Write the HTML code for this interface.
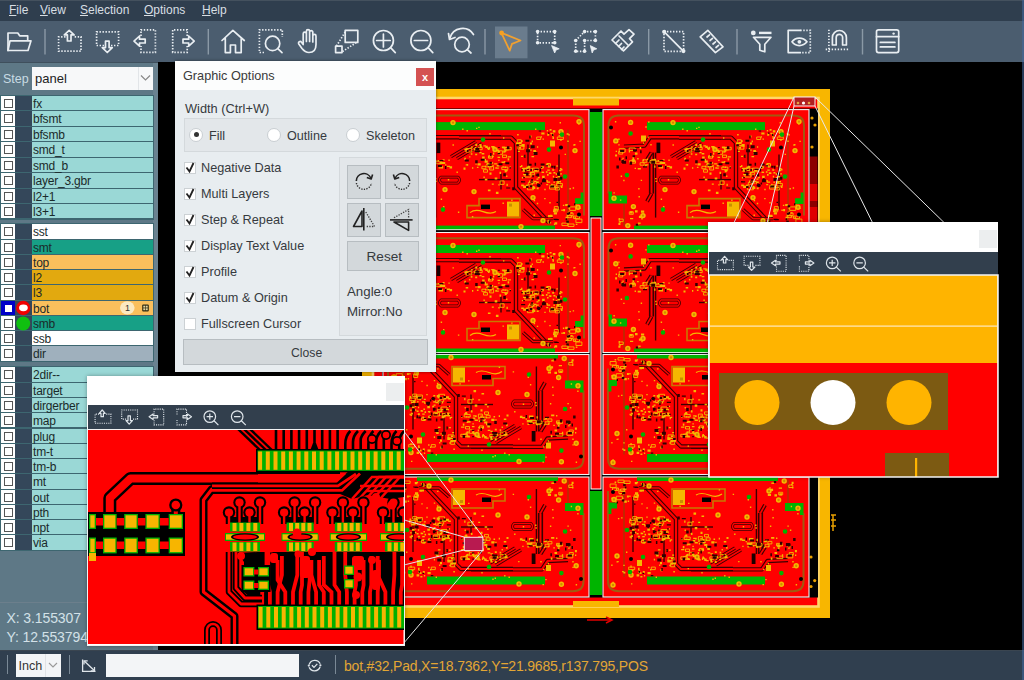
<!DOCTYPE html><html><head><meta charset="utf-8"><style>
*{margin:0;padding:0;box-sizing:border-box}
html,body{width:1024px;height:680px;overflow:hidden;background:#000}
body{position:relative;font-family:"Liberation Sans",sans-serif;}
.a{position:absolute}
#menu{left:0;top:0;width:1024px;height:20.5px;background:#2f3e4e;border-top:1px solid #44515e;color:#d8dee3;font-size:12px}
#menu span{position:absolute;top:2px}
#menu u{text-decoration:underline;text-underline-offset:1px}
#tool{left:0;top:21px;width:1024px;height:41px;background:#4b5d6f}
#left{left:0;top:62px;width:158px;height:588px;background:#5e7886;border-top:1px solid #3f4f5c}
#status{left:0;top:650px;width:1024px;height:30px;background:#303f4f;border-top:1.5px solid #3a4550}
.row{position:absolute;left:0;width:154px;height:15px}
.cb{position:absolute;left:1px;top:0;width:14px;height:15px;background:#fff}
.cb i{position:absolute;left:3px;top:3px;width:9px;height:9px;border:1px solid #555}
.dk{position:absolute;left:15px;top:0;width:17px;height:15px;background:#34475a}
.nm{position:absolute;left:32px;top:0;width:121px;height:15px;font-size:12px;line-height:17.5px;color:#1a2a2a;padding-left:1px;letter-spacing:-0.2px}
svg{position:absolute;left:0;top:0;overflow:visible}
</style></head><body>
<div id="menu" class="a"><span style="left:9px"><u>F</u>ile</span><span style="left:40px"><u>V</u>iew</span><span style="left:80px"><u>S</u>election</span><span style="left:144px"><u>O</u>ptions</span><span style="left:202px"><u>H</u>elp</span></div><div id="tool" class="a"></div><div id="left" class="a"></div><div class="a" style="left:153px;top:63px;width:5px;height:587px;background:#6a8290"></div><div id="status" class="a"></div><svg width="1024" height="680" style="clip-path:inset(62px 2px 30px 158px)"><rect x="362" y="89" width="468" height="529" fill="#f8b600"/><rect x="373" y="98" width="445.5" height="508.5" fill="#ff0000" stroke="#ffd868" stroke-width="2.6"/><rect x="382" y="108.5" width="436" height="489" fill="#000"/><rect x="573" y="98.5" width="46" height="7" fill="#f8b600"/><rect x="573" y="601" width="46" height="6" fill="#f8b600"/><rect x="809.5" y="156.5" width="8" height="27.5" fill="#8c0000"/><rect x="809.5" y="184" width="8" height="17" fill="#e00000"/><rect x="809.5" y="201" width="8" height="6" fill="#8c0000"/><rect x="809.5" y="207" width="8" height="17" fill="#e00000"/><circle cx="812" cy="118" r="1.6" fill="#e8a000"/><circle cx="815" cy="125" r="1.6" fill="#e8a000"/><circle cx="812" cy="147" r="1.6" fill="#e8a000"/><circle cx="811" cy="557" r="1.6" fill="#e8a000"/><circle cx="814.7" cy="580.6" r="1.6" fill="#e8a000"/><circle cx="811" cy="586.5" r="1.6" fill="#e8a000"/><path d="M831 515H836M833 515V531M831 520H836M831 526H836" stroke="#e8a000" stroke-width="1.5"/><rect x="590" y="112" width="12" height="104" fill="#00b400"/><rect x="591" y="218" width="10" height="271" fill="#ff0000" stroke="#fff" stroke-width="1"/><rect x="590" y="491" width="12" height="104" fill="#00b400"/><g transform="translate(383,109.6)"><rect x="0" y="0" width="206" height="120" fill="#ff0000" stroke="#f4f4f4" stroke-width="1.1"/><path d="M14 5.8H190Q201 5.8 201 16V106M5.5 84V16Q5.5 5.8 16 5.8" fill="none" stroke="#a05a10" stroke-width="2"/><path d="M21 94V117M185 20V115" fill="none" stroke="#8a4a00" stroke-width="1"/><rect x="44" y="12.5" width="118" height="8" fill="#00b400"/><rect x="31" y="116" width="141" height="3.6" fill="#00b400"/><path d="M5.5 82V94H24V86H9V82Z" fill="#00b400"/><path d="M197.6 83H200.5V94.4H192V88.6H197.6Z" fill="#00b400"/><path d="M21 37L41.5 36L47 27.6H118" fill="none" stroke="#3c0000" stroke-width="4.4" stroke-linejoin="round"/><path d="M21 37L41.5 36L47 27.6H118" fill="none" stroke="#ff0000" stroke-width="2.2" stroke-linejoin="round"/><path d="M76 28H128L133 33V78L166 113" fill="none" stroke="#3c0000" stroke-width="4.4" stroke-linejoin="round"/><path d="M76 28H128L133 33V78L166 113" fill="none" stroke="#ff0000" stroke-width="2.2" stroke-linejoin="round"/><path d="M48.5 43V84" fill="none" stroke="#3c0000" stroke-width="5.2" stroke-linejoin="round"/><path d="M48.5 43V84" fill="none" stroke="#ff0000" stroke-width="2" stroke-linejoin="round"/><path d="M44 50L48.5 43M48.5 84L44 92" fill="none" stroke="#3c0000" stroke-width="4.0" stroke-linejoin="round"/><path d="M44 50L48.5 43M48.5 84L44 92" fill="none" stroke="#ff0000" stroke-width="1.6" stroke-linejoin="round"/><path d="M68 47L93 32M74 49L99 34" fill="none" stroke="#3c0000" stroke-width="3.4000000000000004" stroke-linejoin="round"/><path d="M68 47L93 32M74 49L99 34" fill="none" stroke="#ff0000" stroke-width="1.6" stroke-linejoin="round"/><path d="M58 67.5H75Q78 70.5 75 73.5H58Q55 70.5 58 67.5Z" fill="none" stroke="#3c0000" stroke-width="2.8" stroke-linejoin="round"/><path d="M58 67.5H75Q78 70.5 75 73.5H58Q55 70.5 58 67.5Z" fill="none" stroke="#ff0000" stroke-width="1.4" stroke-linejoin="round"/><path d="M170 109H150L140 100" fill="none" stroke="#3c0000" stroke-width="3.4000000000000004" stroke-linejoin="round"/><path d="M170 109H150L140 100" fill="none" stroke="#ff0000" stroke-width="1.6" stroke-linejoin="round"/><path d="M52.6 43V108" fill="none" stroke="#3c0000" stroke-width="1.4"/><path d="M145 35V62" fill="none" stroke="#3c0000" stroke-width="1.4"/><path d="M118 64V80" fill="none" stroke="#3c0000" stroke-width="1.4"/><path d="M96 70H128" fill="none" stroke="#3c0000" stroke-width="1.4"/><path d="M176 45V100" fill="none" stroke="#3c0000" stroke-width="1.4"/><rect x="53.5" y="33" width="3.8" height="10.5" fill="#1a0000"/><path d="M84 96H96V89H137V108H84Z" fill="none" stroke="#c87800" stroke-width="1.6"/><rect x="98" y="95" width="9" height="4.5" fill="#000"/><rect x="124" y="92" width="12" height="15" fill="#f5b800"/><rect x="126" y="94" width="3" height="3" fill="#c89000"/><path d="M87 103Q92 99 100 102T113 102" fill="none" stroke="#f5b800" stroke-width="1.2"/><path d="M97.2 35.4h1.3v1.3h-1.3zM100.4 35.7h2.6v1.3h-2.6zM118.9 37h3.2v1.3h-3.2zM120.3 41h1.3v2.2h-1.3zM94.5 53.6h3.2v2.2h-3.2zM110 42.9h1.3v2.2h-1.3zM101.9 56.2h1.6v1.3h-1.6zM112.9 39.9h3.2v1.6h-3.2zM121.1 51.5h1.3v1.3h-1.3zM104.1 38h2.6v1.6h-2.6zM96 42.4h2.6v1.3h-2.6zM119.5 56.7h1.3v1.3h-1.3zM114.4 41.4h2.6v1.6h-2.6zM113.7 55.3h2.6v1.6h-2.6zM87.9 36.8h2v1.3h-2zM87.8 43.6h1.6v1.6h-1.6zM120.6 40.7h2v2.2h-2zM121.6 57h1.6v1.3h-1.6zM90.9 39.6h3.2v1.3h-3.2zM92.3 34.1h2v2.2h-2zM98.7 43.5h2.6v1.3h-2.6zM89 57.6h1.3v1.6h-1.3zM108.2 36.5h3.2v1.3h-3.2zM124.6 48.7h1.6v2.2h-1.6zM102.3 36.8h2.6v1.6h-2.6zM102.7 36.1h2v2.2h-2zM92.4 53.9h1.3v1.3h-1.3zM124.7 46.7h3.2v1.3h-3.2zM104.4 55.8h1.6v2.2h-1.6zM118.5 51.8h3.2v1.6h-3.2zM96.7 34.7h2v1.6h-2zM126.4 56.9h1.6v1.3h-1.6zM90.7 38.7h3.2v2.2h-3.2zM100.4 49.3h2.6v1.6h-2.6zM81.3 48.2h1.6v2.2h-1.6zM105.8 37.1h1.3v2.2h-1.3zM81.3 39.1h3.2v1.6h-3.2zM92.2 44.1h2v1.6h-2zM111.1 53.6h3.2v1.3h-3.2zM105 46.6h2.6v1.3h-2.6zM108.6 52.6h1.6v1.6h-1.6zM109.1 36.9h3.2v2.2h-3.2zM106.1 52.8h3.2v1.3h-3.2zM108.8 46.1h2v1.6h-2zM103.9 53.4h1.6v2.2h-1.6zM119.5 37.3h2.6v1.6h-2.6zM83.4 39.8h2v1.3h-2zM91.9 37.3h1.3v1.6h-1.3zM113.2 57.9h2.6v1.3h-2.6zM96.8 36.2h2v2.2h-2zM101.6 50.9h3.2v2.2h-3.2zM93.9 57.1h1.6v1.3h-1.6zM99.1 46.9h2.6v2.2h-2.6zM122.1 40.5h1.3v1.6h-1.3zM83.9 54.5h1.3v1.6h-1.3zM80.5 57.9h2v2.2h-2zM86.1 46.6h1.3v1.3h-1.3zM105 38.9h1.6v1.6h-1.6zM96.3 34.4h1.3v1.3h-1.3zM114.5 47.2h2.6v1.3h-2.6zM103.3 54h3.2v1.6h-3.2zM112.3 57.6h1.6v1.6h-1.6zM109.4 55.1h1.3v1.3h-1.3zM147 32.8h2v2.2h-2zM138.1 30.7h1.6v1.6h-1.6zM138.1 46.2h2v1.3h-2zM133 32.8h3.2v2.2h-3.2zM137.2 35.6h2v1.3h-2zM136 37.5h2v1.6h-2zM151.7 42h2v2.2h-2zM150.3 40.4h2.6v2.2h-2.6zM147.3 39.9h1.3v1.3h-1.3zM135.8 32.3h2.6v2.2h-2.6zM134.1 24.4h1.6v1.6h-1.6zM138.5 34.5h3.2v2.2h-3.2zM150 43.5h1.6v1.3h-1.6zM148.5 46.4h2.6v1.3h-2.6zM146.5 25.8h2v2.2h-2zM148.6 31h1.3v1.6h-1.3zM139.1 35.9h2.6v1.3h-2.6zM153.9 36.6h1.3v1.6h-1.3zM134.9 41.2h2v1.3h-2zM145.7 38.5h1.3v2.2h-1.3zM167.1 62.8h1.3v1.6h-1.3zM166.5 75.4h2v1.3h-2zM153.7 78h2v1.6h-2zM168.2 74.2h1.3v2.2h-1.3zM149.4 76.3h2v1.6h-2zM158.4 56.9h2.6v1.3h-2.6zM174.5 66.3h2.6v1.6h-2.6zM164.2 59.8h2.6v1.3h-2.6zM144.7 56.2h2.6v2.2h-2.6zM143.6 57h2v2.2h-2zM141.6 58.2h3.2v1.3h-3.2zM173.5 71.5h2.6v2.2h-2.6zM159 61.8h1.3v1.6h-1.3zM149.1 77.2h3.2v2.2h-3.2zM163.2 74.4h2v1.3h-2zM153.4 68.8h2v1.3h-2zM176.9 58.5h1.6v1.3h-1.6zM163.9 71.9h3.2v1.3h-3.2zM138.1 55.3h1.3v2.2h-1.3zM148.4 72.6h3.2v1.6h-3.2zM177.9 59.2h1.6v1.6h-1.6zM159.1 66.2h2.6v2.2h-2.6zM164 53.4h2.6v1.3h-2.6zM139.4 60.8h2.6v1.3h-2.6zM157.8 56.9h2.6v2.2h-2.6zM138.9 67.5h1.3v1.3h-1.3zM177.9 76.2h1.6v2.2h-1.6zM175.4 71.4h2.6v1.6h-2.6zM177.4 63.5h1.3v1.6h-1.3zM153.2 72h2.6v1.3h-2.6zM140 64.3h2.6v1.3h-2.6zM150.9 71.2h2.6v1.3h-2.6zM170.5 71.9h1.3v1.6h-1.3zM140.5 75.9h1.3v2.2h-1.3zM148.5 70.6h2v1.6h-2zM139 58.1h2.6v1.6h-2.6zM151.1 60.3h3.2v1.3h-3.2zM158.5 62.2h2.6v1.3h-2.6zM164 64.5h1.6v1.6h-1.6zM173.3 77.7h1.3v1.3h-1.3zM169.2 59.6h2v1.6h-2zM148.2 58.8h1.6v1.3h-1.6zM140.6 58.5h3.2v1.3h-3.2zM164 54.6h1.3v1.3h-1.3zM138.2 75h2.6v1.6h-2.6zM139.6 59.6h1.6v2.2h-1.6zM172.6 63.7h1.3v1.3h-1.3zM163.5 70.5h1.3v1.6h-1.3zM165.1 56.8h1.6v1.3h-1.6zM169.8 66.2h1.3v1.6h-1.3zM164.6 56h1.6v1.6h-1.6zM165.8 62.7h2v1.6h-2zM176.1 60.1h2v1.6h-2zM145.9 70.9h1.3v1.6h-1.3zM173.3 64h1.3v1.3h-1.3zM162.9 61.6h1.6v1.6h-1.6zM140.1 76.1h3.2v2.2h-3.2zM146.7 62.4h2.6v1.6h-2.6zM154.8 67.1h2v1.6h-2zM158.1 56.6h2.6v1.6h-2.6zM170.4 62.4h2v1.6h-2zM152.6 72.9h1.3v1.3h-1.3zM143.3 75h1.6v2.2h-1.6zM169.5 76.2h2v2.2h-2zM19.4 48.1h1.3v1.3h-1.3zM39.7 49.7h1.3v1.6h-1.3zM20.1 50.8h2v1.3h-2zM12.1 44.8h2v2.2h-2zM18.3 49.8h1.6v1.6h-1.6zM29.5 47.4h1.6v2.2h-1.6zM34.7 58.3h3.2v1.6h-3.2zM28.7 49.7h3.2v2.2h-3.2zM25.8 40.6h1.3v2.2h-1.3zM12.7 41.1h1.3v1.3h-1.3zM29.2 51.4h2.6v1.3h-2.6zM31.9 42.9h2.6v2.2h-2.6zM34.1 48.5h1.6v1.3h-1.6zM36.6 37.3h1.6v2.2h-1.6zM66.5 56.6h2.6v2.2h-2.6zM58.5 56.7h1.6v2.2h-1.6zM63.8 56.1h3.2v1.3h-3.2zM54.8 50.5h1.3v1.3h-1.3zM59.6 49.6h2v1.3h-2zM65.4 50h1.3v1.3h-1.3zM62.1 54.7h1.3v1.3h-1.3zM41.7 55.8h2v1.6h-2zM50.9 49.2h2v1.3h-2zM59 52.3h3.2v2.2h-3.2zM51.2 56h1.3v2.2h-1.3zM43.8 49h1.3v1.3h-1.3zM55.6 57.6h3.2v1.3h-3.2zM42.1 54.7h3.2v1.3h-3.2zM56.6 52.2h2.6v2.2h-2.6zM166.5 112.4h1.6v1.6h-1.6zM171.6 112.7h2.6v2.2h-2.6zM170.8 102.6h3.2v2.2h-3.2zM165 105.4h2.6v2.2h-2.6zM180.1 99.4h2v2.2h-2zM170.9 114h1.3v1.3h-1.3zM191.9 94.3h1.6v1.6h-1.6zM185.3 102h1.3v1.6h-1.3zM170 100.9h2.6v1.6h-2.6zM168.1 105.9h1.6v1.6h-1.6zM183.7 106.8h2v1.6h-2zM182.2 94.3h2.6v2.2h-2.6zM164.6 111.7h1.6v2.2h-1.6zM166.9 105.2h2.6v2.2h-2.6zM164.5 110.2h2v1.6h-2zM171.3 100.8h1.3v1.6h-1.3zM192.8 114.1h1.6v1.3h-1.6zM171.1 98.9h2.6v2.2h-2.6zM182.5 107.2h2v1.6h-2zM188.1 106.6h1.3v1.3h-1.3zM191.6 107.1h1.3v2.2h-1.3zM158.3 22.8h3.2v2.2h-3.2zM169.8 20.6h2.6v2.2h-2.6zM185.3 24.7h1.6v1.3h-1.6zM168.9 24.7h1.6v2.2h-1.6zM169.7 24h1.3v1.3h-1.3zM183.6 23.6h2v1.6h-2zM175.5 25.6h3.2v1.3h-3.2zM177.3 29.2h1.3v2.2h-1.3zM169.4 27.1h1.6v2.2h-1.6zM166.6 19.5h2v1.6h-2zM167.4 23.1h2v1.6h-2zM164.2 23.9h2v2.2h-2zM163.8 20.4h1.3v1.6h-1.3zM157.7 26.6h1.3v1.3h-1.3zM27 108.3h3.2v1.3h-3.2zM27 101.6h2.6v2.2h-2.6zM38 100.9h3.2v2.2h-3.2zM34.9 113h1.3v2.2h-1.3zM15.4 113.1h2v2.2h-2zM36.3 112.9h1.3v1.6h-1.3zM15.6 108.5h1.3v1.6h-1.3zM32 100.6h2.6v2.2h-2.6zM35.9 106.1h2.6v2.2h-2.6zM116.5 62.1h1.6v2.2h-1.6zM106.5 63h2v2.2h-2zM108.8 73.9h2v1.3h-2zM121.5 60.3h3.2v1.3h-3.2zM111.7 67.8h2.6v2.2h-2.6zM101.8 69.2h2.6v1.6h-2.6zM104.9 80h2.6v1.6h-2.6zM123.5 74.2h1.3v2.2h-1.3zM121.8 60.4h2v2.2h-2zM112.9 82.2h2.6v2.2h-2.6zM123.1 65.9h1.3v1.6h-1.3zM58 51.9h1.4v1.4h-1.4zM119.5 92.9h1.4v1.4h-1.4zM176.6 12.4h1.4v1.4h-1.4zM166.3 92.4h1.4v1.4h-1.4zM172.8 67.5h1.4v1.4h-1.4zM60 96.5h1.4v1.4h-1.4zM161.3 79.2h1.4v1.4h-1.4zM181.6 44.1h1.4v1.4h-1.4zM24.2 65.6h1.4v1.4h-1.4zM159.5 28.8h1.4v1.4h-1.4zM150.5 104.9h1.4v1.4h-1.4zM52.5 71.1h1.4v1.4h-1.4zM136.8 56.4h1.4v1.4h-1.4zM47.3 34.5h1.4v1.4h-1.4zM150.7 90.3h1.4v1.4h-1.4zM95.3 17.1h1.4v1.4h-1.4zM161.2 88.3h1.4v1.4h-1.4zM52.2 68.3h1.4v1.4h-1.4zM178.4 100h1.4v1.4h-1.4zM107.2 57.6h1.4v1.4h-1.4zM120 27.7h1.4v1.4h-1.4zM44.5 26.8h1.4v1.4h-1.4zM141.2 45.7h1.4v1.4h-1.4zM115.2 49.9h1.4v1.4h-1.4zM106.3 23.5h1.4v1.4h-1.4zM16.5 111.7h1.4v1.4h-1.4zM79.1 19h1.4v1.4h-1.4zM128.2 89.9h1.4v1.4h-1.4zM37.7 70.1h1.4v1.4h-1.4zM73.5 62h1.4v1.4h-1.4zM11.9 11.5h1.4v1.4h-1.4zM196.2 98.1h1.4v1.4h-1.4zM100.4 67h1.4v1.4h-1.4zM57.7 89h1.4v1.4h-1.4zM88.9 106.4h1.4v1.4h-1.4zM153.8 93.2h1.4v1.4h-1.4zM191.1 34.4h1.4v1.4h-1.4zM15.2 28.9h1.4v1.4h-1.4zM42.3 16.7h1.4v1.4h-1.4zM17.7 66h1.4v1.4h-1.4zM173.4 55.7h1.4v1.4h-1.4zM188 102.6h1.4v1.4h-1.4zM20.2 70.2h1.4v1.4h-1.4zM83.5 20.5h1.4v1.4h-1.4zM190.3 34.7h1.4v1.4h-1.4zM115.3 74.6h1.4v1.4h-1.4zM189.7 77.7h1.4v1.4h-1.4zM82.7 54.6h1.4v1.4h-1.4zM38.3 108.4h1.4v1.4h-1.4zM196.4 31.1h1.4v1.4h-1.4zM15.3 34.6h1.4v1.4h-1.4zM74.9 101.9h1.4v1.4h-1.4zM179.9 95.1h1.4v1.4h-1.4zM16.9 89.8h1.4v1.4h-1.4zM142.8 75.3h1.4v1.4h-1.4zM195.2 13.8h1.4v1.4h-1.4zM35.5 86.5h1.4v1.4h-1.4zM186.5 78.4h1.4v1.4h-1.4zM64.8 69.5h1.4v1.4h-1.4zM152 19h1.4v1.4h-1.4zM69.5 34.7h1.4v1.4h-1.4zM31.6 58.1h1.4v1.4h-1.4zM40 32.8h1.4v1.4h-1.4zM35.2 78.5h1.4v1.4h-1.4zM10.4 82.6h1.4v1.4h-1.4zM45.1 11.7h1.4v1.4h-1.4zM184.3 30.9h1.4v1.4h-1.4zM185.5 98.1h1.4v1.4h-1.4zM176.9 22.5h1.4v1.4h-1.4zM93 18.1h1.4v1.4h-1.4zM167 31h5v6h-5zM38 26h5v6h-5z" fill="#f5b800"/><path d="M95.2 37.6h4v2.5h-4zM82.8 38.9h6v3.5h-6zM106.6 56.9h4v3.5h-4zM115.6 41.2h4v3.5h-4zM105.5 46.1h4v2.5h-4zM119.5 45.5h4v2.5h-4zM98.9 56.7h4v2.5h-4zM118.8 57.5h6v2.5h-6zM122.2 37.7h6v2.5h-6zM121.6 37.9h4v2.5h-4zM153.7 27.4h4v2.5h-4zM134.9 36.1h6v3.5h-6zM134.3 30.2h4v3.5h-4zM144.4 76.7h6v3.5h-6zM149.3 58.6h6v3.5h-6zM166.6 77h6v2.5h-6zM145.3 72.9h4v2.5h-4zM141.9 65h6v2.5h-6zM147.4 62.8h4v2.5h-4zM142.9 58.4h4v2.5h-4zM173.4 73.9h6v2.5h-6zM163.5 54.1h4v2.5h-4zM168.1 75.3h4v2.5h-4zM172.3 77.9h4v2.5h-4zM37.1 53.1h4v2.5h-4zM15.7 42h4v2.5h-4zM16.2 39.1h6v3.5h-6zM26.5 51.1h6v2.5h-6zM26.2 38.4h6v2.5h-6zM39.9 50.2h4v2.5h-4zM52.3 51.6h6v2.5h-6zM48.7 49.9h4v3.5h-4zM46.9 50.9h6v2.5h-6zM170.7 99.7h4v2.5h-4zM185 114.4h6v2.5h-6zM184.1 103.5h6v2.5h-6zM184.3 105.5h4v2.5h-4zM171.3 97h4v3.5h-4zM178.9 113.5h6v2.5h-6zM190.5 106.5h6v2.5h-6zM192.9 109.5h6v3.5h-6zM186.7 97.3h6v3.5h-6zM174.3 27.4h6v2.5h-6zM26.3 102.2h4v2.5h-4zM16.2 109.5h4v2.5h-4zM100.5 60.1h4v2.5h-4zM117.1 71.3h4v3.5h-4z" fill="none" stroke="#f5b800" stroke-width="0.9"/><path d="M107.1 43.5h1.5v3h-1.5zM81.8 50h4v2h-4zM114.7 43.5h2.5v1.2h-2.5zM122.3 52.7h4v2h-4zM97.7 49.2h4v2h-4zM92.2 50.6h2.5v3h-2.5zM122.8 52.8h2.5v1.2h-2.5zM115.2 37.3h1.5v1.2h-1.5zM91.7 40.6h4v2h-4zM106.4 52.2h2.5v2h-2.5zM104.6 55h4v1.2h-4zM84 40.5h1.5v2h-1.5zM115.5 53.7h4v2h-4zM95.4 40.7h1.5v2h-1.5zM92.3 38.3h4v2h-4zM123.9 36.6h2.5v3h-2.5zM126.5 57.6h1.5v1.2h-1.5zM142.4 30.1h4v2h-4zM146.2 25.9h1.5v3h-1.5zM147.7 35.6h4v3h-4zM150.5 42.5h4v3h-4zM143.1 39.7h4v3h-4zM133.4 34.6h2.5v2h-2.5zM141.1 45.1h1.5v3h-1.5zM152.6 64.9h2.5v1.2h-2.5zM138.1 71.5h1.5v1.2h-1.5zM170.5 68.4h4v3h-4zM146.1 54.1h2.5v2h-2.5zM162.6 55.6h2.5v1.2h-2.5zM146.8 75.6h2.5v2h-2.5zM143.1 63.1h2.5v3h-2.5zM157.6 53.9h4v2h-4zM158.9 69.7h4v3h-4zM142 59.8h1.5v2h-1.5zM148.3 69.4h1.5v2h-1.5zM138.3 59.6h1.5v1.2h-1.5zM157.8 57.2h1.5v1.2h-1.5zM156.6 58.9h1.5v3h-1.5zM140.3 67.5h1.5v1.2h-1.5zM153.7 75.4h4v1.2h-4zM141.2 62.9h4v1.2h-4zM151.6 59.1h4v1.2h-4zM138.2 71.6h4v1.2h-4zM169.6 75.8h1.5v2h-1.5zM147.4 59.3h1.5v2h-1.5zM176.9 67.2h2.5v3h-2.5zM151.6 53.1h1.5v3h-1.5zM167.3 75.8h2.5v2h-2.5zM154.7 74.5h2.5v3h-2.5zM174.1 63h2.5v3h-2.5zM160.1 68.7h1.5v3h-1.5zM149.3 65.6h1.5v2h-1.5zM157.6 72.9h1.5v2h-1.5zM143.1 76.5h2.5v2h-2.5zM171 56.2h1.5v3h-1.5zM154.2 74h1.5v3h-1.5zM153.6 63.8h2.5v3h-2.5zM147.4 71.9h2.5v1.2h-2.5zM168.2 56.1h2.5v2h-2.5zM16 48h1.5v3h-1.5zM17.1 40.5h4v2h-4zM37.1 40.7h1.5v3h-1.5zM13.4 55.9h2.5v3h-2.5zM26.6 52.2h2.5v3h-2.5zM29.6 45.7h2.5v2h-2.5zM18.4 50.5h2.5v3h-2.5zM19.1 51.1h4v3h-4zM22.5 46.6h1.5v3h-1.5zM30.4 40.9h2.5v1.2h-2.5zM30 39.7h4v2h-4zM44.7 50.4h1.5v2h-1.5zM48.2 51.2h4v3h-4zM56.4 50.5h4v1.2h-4zM61.9 56.4h1.5v3h-1.5zM40 56.6h4v1.2h-4zM54.9 55.4h4v2h-4zM171.8 109.4h4v1.2h-4zM184.7 95.6h2.5v2h-2.5zM173.5 92.2h1.5v1.2h-1.5zM185.5 102.5h1.5v2h-1.5zM170.5 109.1h4v1.2h-4zM191 93.6h1.5v2h-1.5zM182.6 108.6h1.5v2h-1.5zM183.3 111.1h2.5v2h-2.5zM183.7 103.1h2.5v2h-2.5zM165.7 111h1.5v3h-1.5zM155.7 20.8h2.5v1.2h-2.5zM165 23h1.5v1.2h-1.5zM169 24.3h1.5v2h-1.5zM32.8 114.1h2.5v2h-2.5zM123.2 77.8h4v1.2h-4zM120.3 63.6h2.5v3h-2.5zM129.2 77.6h2.5v3h-2.5z" fill="#300000"/><path d="M24.9 12.8a2.7 2.7 0 1 0 5.4 0a2.7 2.7 0 1 0 -5.4 0zM10.1 31.3a2.7 2.7 0 1 0 5.4 0a2.7 2.7 0 1 0 -5.4 0zM27.7 97a2.7 2.7 0 1 0 5.4 0a2.7 2.7 0 1 0 -5.4 0zM22.1 116a2.7 2.7 0 1 0 5.4 0a2.7 2.7 0 1 0 -5.4 0zM8.3 88.7a2.7 2.7 0 1 0 5.4 0a2.7 2.7 0 1 0 -5.4 0zM175.3 22a2.7 2.7 0 1 0 5.4 0a2.7 2.7 0 1 0 -5.4 0zM189.3 41a2.7 2.7 0 1 0 5.4 0a2.7 2.7 0 1 0 -5.4 0zM192.3 97.6a2.7 2.7 0 1 0 5.4 0a2.7 2.7 0 1 0 -5.4 0zM193.3 12a2.7 2.7 0 1 0 5.4 0a2.7 2.7 0 1 0 -5.4 0zM135.3 117a2.7 2.7 0 1 0 5.4 0a2.7 2.7 0 1 0 -5.4 0zM157.3 111a2.7 2.7 0 1 0 5.4 0a2.7 2.7 0 1 0 -5.4 0zM67.3 13a2.7 2.7 0 1 0 5.4 0a2.7 2.7 0 1 0 -5.4 0zM59.3 80a2.7 2.7 0 1 0 5.4 0a2.7 2.7 0 1 0 -5.4 0zM109.3 40a2.7 2.7 0 1 0 5.4 0a2.7 2.7 0 1 0 -5.4 0zM147.3 88a2.7 2.7 0 1 0 5.4 0a2.7 2.7 0 1 0 -5.4 0zM37.3 106a2.7 2.7 0 1 0 5.4 0a2.7 2.7 0 1 0 -5.4 0zM88.3 82a2.7 2.7 0 1 0 5.4 0a2.7 2.7 0 1 0 -5.4 0z" fill="#f5b800"/><path d="M26.4 12.8a1.2 1.2 0 1 0 2.4 0a1.2 1.2 0 1 0 -2.4 0zM11.6 31.3a1.2 1.2 0 1 0 2.4 0a1.2 1.2 0 1 0 -2.4 0zM29.2 97a1.2 1.2 0 1 0 2.4 0a1.2 1.2 0 1 0 -2.4 0zM23.6 116a1.2 1.2 0 1 0 2.4 0a1.2 1.2 0 1 0 -2.4 0zM9.8 88.7a1.2 1.2 0 1 0 2.4 0a1.2 1.2 0 1 0 -2.4 0zM176.8 22a1.2 1.2 0 1 0 2.4 0a1.2 1.2 0 1 0 -2.4 0zM190.8 41a1.2 1.2 0 1 0 2.4 0a1.2 1.2 0 1 0 -2.4 0zM193.8 97.6a1.2 1.2 0 1 0 2.4 0a1.2 1.2 0 1 0 -2.4 0zM194.8 12a1.2 1.2 0 1 0 2.4 0a1.2 1.2 0 1 0 -2.4 0zM136.8 117a1.2 1.2 0 1 0 2.4 0a1.2 1.2 0 1 0 -2.4 0zM158.8 111a1.2 1.2 0 1 0 2.4 0a1.2 1.2 0 1 0 -2.4 0zM68.8 13a1.2 1.2 0 1 0 2.4 0a1.2 1.2 0 1 0 -2.4 0zM60.8 80a1.2 1.2 0 1 0 2.4 0a1.2 1.2 0 1 0 -2.4 0zM110.8 40a1.2 1.2 0 1 0 2.4 0a1.2 1.2 0 1 0 -2.4 0zM148.8 88a1.2 1.2 0 1 0 2.4 0a1.2 1.2 0 1 0 -2.4 0zM38.8 106a1.2 1.2 0 1 0 2.4 0a1.2 1.2 0 1 0 -2.4 0zM89.8 82a1.2 1.2 0 1 0 2.4 0a1.2 1.2 0 1 0 -2.4 0z" fill="#d08a00"/><path d="M21.6 65.5a2.3 2.3 0 1 0 4.6 0a2.3 2.3 0 1 0 -4.6 0zM25.3 23.9a2.3 2.3 0 1 0 4.6 0a2.3 2.3 0 1 0 -4.6 0zM176.7 25a2.3 2.3 0 1 0 4.6 0a2.3 2.3 0 1 0 -4.6 0zM179.7 67a2.3 2.3 0 1 0 4.6 0a2.3 2.3 0 1 0 -4.6 0zM97.7 30a2.3 2.3 0 1 0 4.6 0a2.3 2.3 0 1 0 -4.6 0zM57.7 100a2.3 2.3 0 1 0 4.6 0a2.3 2.3 0 1 0 -4.6 0zM163.7 40a2.3 2.3 0 1 0 4.6 0a2.3 2.3 0 1 0 -4.6 0z" fill="#00b400"/><path d="M194 105a2 2 0 1 0 4 0a2 2 0 1 0 -4 0zM176 38a2 2 0 1 0 4 0a2 2 0 1 0 -4 0zM6 18a2 2 0 1 0 4 0a2 2 0 1 0 -4 0z" fill="#000"/></g><g transform="translate(603,109.6)"><rect x="0" y="0" width="206" height="120" fill="#ff0000" stroke="#f4f4f4" stroke-width="1.1"/><path d="M14 5.8H190Q201 5.8 201 16V106M5.5 84V16Q5.5 5.8 16 5.8" fill="none" stroke="#a05a10" stroke-width="2"/><path d="M21 94V117M185 20V115" fill="none" stroke="#8a4a00" stroke-width="1"/><rect x="44" y="12.5" width="118" height="8" fill="#00b400"/><rect x="31" y="116" width="141" height="3.6" fill="#00b400"/><path d="M5.5 82V94H24V86H9V82Z" fill="#00b400"/><path d="M197.6 83H200.5V94.4H192V88.6H197.6Z" fill="#00b400"/><path d="M21 37L41.5 36L47 27.6H118" fill="none" stroke="#3c0000" stroke-width="4.4" stroke-linejoin="round"/><path d="M21 37L41.5 36L47 27.6H118" fill="none" stroke="#ff0000" stroke-width="2.2" stroke-linejoin="round"/><path d="M76 28H128L133 33V78L166 113" fill="none" stroke="#3c0000" stroke-width="4.4" stroke-linejoin="round"/><path d="M76 28H128L133 33V78L166 113" fill="none" stroke="#ff0000" stroke-width="2.2" stroke-linejoin="round"/><path d="M48.5 43V84" fill="none" stroke="#3c0000" stroke-width="5.2" stroke-linejoin="round"/><path d="M48.5 43V84" fill="none" stroke="#ff0000" stroke-width="2" stroke-linejoin="round"/><path d="M44 50L48.5 43M48.5 84L44 92" fill="none" stroke="#3c0000" stroke-width="4.0" stroke-linejoin="round"/><path d="M44 50L48.5 43M48.5 84L44 92" fill="none" stroke="#ff0000" stroke-width="1.6" stroke-linejoin="round"/><path d="M68 47L93 32M74 49L99 34" fill="none" stroke="#3c0000" stroke-width="3.4000000000000004" stroke-linejoin="round"/><path d="M68 47L93 32M74 49L99 34" fill="none" stroke="#ff0000" stroke-width="1.6" stroke-linejoin="round"/><path d="M58 67.5H75Q78 70.5 75 73.5H58Q55 70.5 58 67.5Z" fill="none" stroke="#3c0000" stroke-width="2.8" stroke-linejoin="round"/><path d="M58 67.5H75Q78 70.5 75 73.5H58Q55 70.5 58 67.5Z" fill="none" stroke="#ff0000" stroke-width="1.4" stroke-linejoin="round"/><path d="M170 109H150L140 100" fill="none" stroke="#3c0000" stroke-width="3.4000000000000004" stroke-linejoin="round"/><path d="M170 109H150L140 100" fill="none" stroke="#ff0000" stroke-width="1.6" stroke-linejoin="round"/><path d="M52.6 43V108" fill="none" stroke="#3c0000" stroke-width="1.4"/><path d="M145 35V62" fill="none" stroke="#3c0000" stroke-width="1.4"/><path d="M118 64V80" fill="none" stroke="#3c0000" stroke-width="1.4"/><path d="M96 70H128" fill="none" stroke="#3c0000" stroke-width="1.4"/><path d="M176 45V100" fill="none" stroke="#3c0000" stroke-width="1.4"/><rect x="53.5" y="33" width="3.8" height="10.5" fill="#1a0000"/><path d="M84 96H96V89H137V108H84Z" fill="none" stroke="#c87800" stroke-width="1.6"/><rect x="98" y="95" width="9" height="4.5" fill="#000"/><rect x="124" y="92" width="12" height="15" fill="#f5b800"/><rect x="126" y="94" width="3" height="3" fill="#c89000"/><path d="M87 103Q92 99 100 102T113 102" fill="none" stroke="#f5b800" stroke-width="1.2"/><path d="M97.2 35.4h1.3v1.3h-1.3zM100.4 35.7h2.6v1.3h-2.6zM118.9 37h3.2v1.3h-3.2zM120.3 41h1.3v2.2h-1.3zM94.5 53.6h3.2v2.2h-3.2zM110 42.9h1.3v2.2h-1.3zM101.9 56.2h1.6v1.3h-1.6zM112.9 39.9h3.2v1.6h-3.2zM121.1 51.5h1.3v1.3h-1.3zM104.1 38h2.6v1.6h-2.6zM96 42.4h2.6v1.3h-2.6zM119.5 56.7h1.3v1.3h-1.3zM114.4 41.4h2.6v1.6h-2.6zM113.7 55.3h2.6v1.6h-2.6zM87.9 36.8h2v1.3h-2zM87.8 43.6h1.6v1.6h-1.6zM120.6 40.7h2v2.2h-2zM121.6 57h1.6v1.3h-1.6zM90.9 39.6h3.2v1.3h-3.2zM92.3 34.1h2v2.2h-2zM98.7 43.5h2.6v1.3h-2.6zM89 57.6h1.3v1.6h-1.3zM108.2 36.5h3.2v1.3h-3.2zM124.6 48.7h1.6v2.2h-1.6zM102.3 36.8h2.6v1.6h-2.6zM102.7 36.1h2v2.2h-2zM92.4 53.9h1.3v1.3h-1.3zM124.7 46.7h3.2v1.3h-3.2zM104.4 55.8h1.6v2.2h-1.6zM118.5 51.8h3.2v1.6h-3.2zM96.7 34.7h2v1.6h-2zM126.4 56.9h1.6v1.3h-1.6zM90.7 38.7h3.2v2.2h-3.2zM100.4 49.3h2.6v1.6h-2.6zM81.3 48.2h1.6v2.2h-1.6zM105.8 37.1h1.3v2.2h-1.3zM81.3 39.1h3.2v1.6h-3.2zM92.2 44.1h2v1.6h-2zM111.1 53.6h3.2v1.3h-3.2zM105 46.6h2.6v1.3h-2.6zM108.6 52.6h1.6v1.6h-1.6zM109.1 36.9h3.2v2.2h-3.2zM106.1 52.8h3.2v1.3h-3.2zM108.8 46.1h2v1.6h-2zM103.9 53.4h1.6v2.2h-1.6zM119.5 37.3h2.6v1.6h-2.6zM83.4 39.8h2v1.3h-2zM91.9 37.3h1.3v1.6h-1.3zM113.2 57.9h2.6v1.3h-2.6zM96.8 36.2h2v2.2h-2zM101.6 50.9h3.2v2.2h-3.2zM93.9 57.1h1.6v1.3h-1.6zM99.1 46.9h2.6v2.2h-2.6zM122.1 40.5h1.3v1.6h-1.3zM83.9 54.5h1.3v1.6h-1.3zM80.5 57.9h2v2.2h-2zM86.1 46.6h1.3v1.3h-1.3zM105 38.9h1.6v1.6h-1.6zM96.3 34.4h1.3v1.3h-1.3zM114.5 47.2h2.6v1.3h-2.6zM103.3 54h3.2v1.6h-3.2zM112.3 57.6h1.6v1.6h-1.6zM109.4 55.1h1.3v1.3h-1.3zM147 32.8h2v2.2h-2zM138.1 30.7h1.6v1.6h-1.6zM138.1 46.2h2v1.3h-2zM133 32.8h3.2v2.2h-3.2zM137.2 35.6h2v1.3h-2zM136 37.5h2v1.6h-2zM151.7 42h2v2.2h-2zM150.3 40.4h2.6v2.2h-2.6zM147.3 39.9h1.3v1.3h-1.3zM135.8 32.3h2.6v2.2h-2.6zM134.1 24.4h1.6v1.6h-1.6zM138.5 34.5h3.2v2.2h-3.2zM150 43.5h1.6v1.3h-1.6zM148.5 46.4h2.6v1.3h-2.6zM146.5 25.8h2v2.2h-2zM148.6 31h1.3v1.6h-1.3zM139.1 35.9h2.6v1.3h-2.6zM153.9 36.6h1.3v1.6h-1.3zM134.9 41.2h2v1.3h-2zM145.7 38.5h1.3v2.2h-1.3zM167.1 62.8h1.3v1.6h-1.3zM166.5 75.4h2v1.3h-2zM153.7 78h2v1.6h-2zM168.2 74.2h1.3v2.2h-1.3zM149.4 76.3h2v1.6h-2zM158.4 56.9h2.6v1.3h-2.6zM174.5 66.3h2.6v1.6h-2.6zM164.2 59.8h2.6v1.3h-2.6zM144.7 56.2h2.6v2.2h-2.6zM143.6 57h2v2.2h-2zM141.6 58.2h3.2v1.3h-3.2zM173.5 71.5h2.6v2.2h-2.6zM159 61.8h1.3v1.6h-1.3zM149.1 77.2h3.2v2.2h-3.2zM163.2 74.4h2v1.3h-2zM153.4 68.8h2v1.3h-2zM176.9 58.5h1.6v1.3h-1.6zM163.9 71.9h3.2v1.3h-3.2zM138.1 55.3h1.3v2.2h-1.3zM148.4 72.6h3.2v1.6h-3.2zM177.9 59.2h1.6v1.6h-1.6zM159.1 66.2h2.6v2.2h-2.6zM164 53.4h2.6v1.3h-2.6zM139.4 60.8h2.6v1.3h-2.6zM157.8 56.9h2.6v2.2h-2.6zM138.9 67.5h1.3v1.3h-1.3zM177.9 76.2h1.6v2.2h-1.6zM175.4 71.4h2.6v1.6h-2.6zM177.4 63.5h1.3v1.6h-1.3zM153.2 72h2.6v1.3h-2.6zM140 64.3h2.6v1.3h-2.6zM150.9 71.2h2.6v1.3h-2.6zM170.5 71.9h1.3v1.6h-1.3zM140.5 75.9h1.3v2.2h-1.3zM148.5 70.6h2v1.6h-2zM139 58.1h2.6v1.6h-2.6zM151.1 60.3h3.2v1.3h-3.2zM158.5 62.2h2.6v1.3h-2.6zM164 64.5h1.6v1.6h-1.6zM173.3 77.7h1.3v1.3h-1.3zM169.2 59.6h2v1.6h-2zM148.2 58.8h1.6v1.3h-1.6zM140.6 58.5h3.2v1.3h-3.2zM164 54.6h1.3v1.3h-1.3zM138.2 75h2.6v1.6h-2.6zM139.6 59.6h1.6v2.2h-1.6zM172.6 63.7h1.3v1.3h-1.3zM163.5 70.5h1.3v1.6h-1.3zM165.1 56.8h1.6v1.3h-1.6zM169.8 66.2h1.3v1.6h-1.3zM164.6 56h1.6v1.6h-1.6zM165.8 62.7h2v1.6h-2zM176.1 60.1h2v1.6h-2zM145.9 70.9h1.3v1.6h-1.3zM173.3 64h1.3v1.3h-1.3zM162.9 61.6h1.6v1.6h-1.6zM140.1 76.1h3.2v2.2h-3.2zM146.7 62.4h2.6v1.6h-2.6zM154.8 67.1h2v1.6h-2zM158.1 56.6h2.6v1.6h-2.6zM170.4 62.4h2v1.6h-2zM152.6 72.9h1.3v1.3h-1.3zM143.3 75h1.6v2.2h-1.6zM169.5 76.2h2v2.2h-2zM19.4 48.1h1.3v1.3h-1.3zM39.7 49.7h1.3v1.6h-1.3zM20.1 50.8h2v1.3h-2zM12.1 44.8h2v2.2h-2zM18.3 49.8h1.6v1.6h-1.6zM29.5 47.4h1.6v2.2h-1.6zM34.7 58.3h3.2v1.6h-3.2zM28.7 49.7h3.2v2.2h-3.2zM25.8 40.6h1.3v2.2h-1.3zM12.7 41.1h1.3v1.3h-1.3zM29.2 51.4h2.6v1.3h-2.6zM31.9 42.9h2.6v2.2h-2.6zM34.1 48.5h1.6v1.3h-1.6zM36.6 37.3h1.6v2.2h-1.6zM66.5 56.6h2.6v2.2h-2.6zM58.5 56.7h1.6v2.2h-1.6zM63.8 56.1h3.2v1.3h-3.2zM54.8 50.5h1.3v1.3h-1.3zM59.6 49.6h2v1.3h-2zM65.4 50h1.3v1.3h-1.3zM62.1 54.7h1.3v1.3h-1.3zM41.7 55.8h2v1.6h-2zM50.9 49.2h2v1.3h-2zM59 52.3h3.2v2.2h-3.2zM51.2 56h1.3v2.2h-1.3zM43.8 49h1.3v1.3h-1.3zM55.6 57.6h3.2v1.3h-3.2zM42.1 54.7h3.2v1.3h-3.2zM56.6 52.2h2.6v2.2h-2.6zM166.5 112.4h1.6v1.6h-1.6zM171.6 112.7h2.6v2.2h-2.6zM170.8 102.6h3.2v2.2h-3.2zM165 105.4h2.6v2.2h-2.6zM180.1 99.4h2v2.2h-2zM170.9 114h1.3v1.3h-1.3zM191.9 94.3h1.6v1.6h-1.6zM185.3 102h1.3v1.6h-1.3zM170 100.9h2.6v1.6h-2.6zM168.1 105.9h1.6v1.6h-1.6zM183.7 106.8h2v1.6h-2zM182.2 94.3h2.6v2.2h-2.6zM164.6 111.7h1.6v2.2h-1.6zM166.9 105.2h2.6v2.2h-2.6zM164.5 110.2h2v1.6h-2zM171.3 100.8h1.3v1.6h-1.3zM192.8 114.1h1.6v1.3h-1.6zM171.1 98.9h2.6v2.2h-2.6zM182.5 107.2h2v1.6h-2zM188.1 106.6h1.3v1.3h-1.3zM191.6 107.1h1.3v2.2h-1.3zM158.3 22.8h3.2v2.2h-3.2zM169.8 20.6h2.6v2.2h-2.6zM185.3 24.7h1.6v1.3h-1.6zM168.9 24.7h1.6v2.2h-1.6zM169.7 24h1.3v1.3h-1.3zM183.6 23.6h2v1.6h-2zM175.5 25.6h3.2v1.3h-3.2zM177.3 29.2h1.3v2.2h-1.3zM169.4 27.1h1.6v2.2h-1.6zM166.6 19.5h2v1.6h-2zM167.4 23.1h2v1.6h-2zM164.2 23.9h2v2.2h-2zM163.8 20.4h1.3v1.6h-1.3zM157.7 26.6h1.3v1.3h-1.3zM27 108.3h3.2v1.3h-3.2zM27 101.6h2.6v2.2h-2.6zM38 100.9h3.2v2.2h-3.2zM34.9 113h1.3v2.2h-1.3zM15.4 113.1h2v2.2h-2zM36.3 112.9h1.3v1.6h-1.3zM15.6 108.5h1.3v1.6h-1.3zM32 100.6h2.6v2.2h-2.6zM35.9 106.1h2.6v2.2h-2.6zM116.5 62.1h1.6v2.2h-1.6zM106.5 63h2v2.2h-2zM108.8 73.9h2v1.3h-2zM121.5 60.3h3.2v1.3h-3.2zM111.7 67.8h2.6v2.2h-2.6zM101.8 69.2h2.6v1.6h-2.6zM104.9 80h2.6v1.6h-2.6zM123.5 74.2h1.3v2.2h-1.3zM121.8 60.4h2v2.2h-2zM112.9 82.2h2.6v2.2h-2.6zM123.1 65.9h1.3v1.6h-1.3zM58 51.9h1.4v1.4h-1.4zM119.5 92.9h1.4v1.4h-1.4zM176.6 12.4h1.4v1.4h-1.4zM166.3 92.4h1.4v1.4h-1.4zM172.8 67.5h1.4v1.4h-1.4zM60 96.5h1.4v1.4h-1.4zM161.3 79.2h1.4v1.4h-1.4zM181.6 44.1h1.4v1.4h-1.4zM24.2 65.6h1.4v1.4h-1.4zM159.5 28.8h1.4v1.4h-1.4zM150.5 104.9h1.4v1.4h-1.4zM52.5 71.1h1.4v1.4h-1.4zM136.8 56.4h1.4v1.4h-1.4zM47.3 34.5h1.4v1.4h-1.4zM150.7 90.3h1.4v1.4h-1.4zM95.3 17.1h1.4v1.4h-1.4zM161.2 88.3h1.4v1.4h-1.4zM52.2 68.3h1.4v1.4h-1.4zM178.4 100h1.4v1.4h-1.4zM107.2 57.6h1.4v1.4h-1.4zM120 27.7h1.4v1.4h-1.4zM44.5 26.8h1.4v1.4h-1.4zM141.2 45.7h1.4v1.4h-1.4zM115.2 49.9h1.4v1.4h-1.4zM106.3 23.5h1.4v1.4h-1.4zM16.5 111.7h1.4v1.4h-1.4zM79.1 19h1.4v1.4h-1.4zM128.2 89.9h1.4v1.4h-1.4zM37.7 70.1h1.4v1.4h-1.4zM73.5 62h1.4v1.4h-1.4zM11.9 11.5h1.4v1.4h-1.4zM196.2 98.1h1.4v1.4h-1.4zM100.4 67h1.4v1.4h-1.4zM57.7 89h1.4v1.4h-1.4zM88.9 106.4h1.4v1.4h-1.4zM153.8 93.2h1.4v1.4h-1.4zM191.1 34.4h1.4v1.4h-1.4zM15.2 28.9h1.4v1.4h-1.4zM42.3 16.7h1.4v1.4h-1.4zM17.7 66h1.4v1.4h-1.4zM173.4 55.7h1.4v1.4h-1.4zM188 102.6h1.4v1.4h-1.4zM20.2 70.2h1.4v1.4h-1.4zM83.5 20.5h1.4v1.4h-1.4zM190.3 34.7h1.4v1.4h-1.4zM115.3 74.6h1.4v1.4h-1.4zM189.7 77.7h1.4v1.4h-1.4zM82.7 54.6h1.4v1.4h-1.4zM38.3 108.4h1.4v1.4h-1.4zM196.4 31.1h1.4v1.4h-1.4zM15.3 34.6h1.4v1.4h-1.4zM74.9 101.9h1.4v1.4h-1.4zM179.9 95.1h1.4v1.4h-1.4zM16.9 89.8h1.4v1.4h-1.4zM142.8 75.3h1.4v1.4h-1.4zM195.2 13.8h1.4v1.4h-1.4zM35.5 86.5h1.4v1.4h-1.4zM186.5 78.4h1.4v1.4h-1.4zM64.8 69.5h1.4v1.4h-1.4zM152 19h1.4v1.4h-1.4zM69.5 34.7h1.4v1.4h-1.4zM31.6 58.1h1.4v1.4h-1.4zM40 32.8h1.4v1.4h-1.4zM35.2 78.5h1.4v1.4h-1.4zM10.4 82.6h1.4v1.4h-1.4zM45.1 11.7h1.4v1.4h-1.4zM184.3 30.9h1.4v1.4h-1.4zM185.5 98.1h1.4v1.4h-1.4zM176.9 22.5h1.4v1.4h-1.4zM93 18.1h1.4v1.4h-1.4zM167 31h5v6h-5zM38 26h5v6h-5z" fill="#f5b800"/><path d="M95.2 37.6h4v2.5h-4zM82.8 38.9h6v3.5h-6zM106.6 56.9h4v3.5h-4zM115.6 41.2h4v3.5h-4zM105.5 46.1h4v2.5h-4zM119.5 45.5h4v2.5h-4zM98.9 56.7h4v2.5h-4zM118.8 57.5h6v2.5h-6zM122.2 37.7h6v2.5h-6zM121.6 37.9h4v2.5h-4zM153.7 27.4h4v2.5h-4zM134.9 36.1h6v3.5h-6zM134.3 30.2h4v3.5h-4zM144.4 76.7h6v3.5h-6zM149.3 58.6h6v3.5h-6zM166.6 77h6v2.5h-6zM145.3 72.9h4v2.5h-4zM141.9 65h6v2.5h-6zM147.4 62.8h4v2.5h-4zM142.9 58.4h4v2.5h-4zM173.4 73.9h6v2.5h-6zM163.5 54.1h4v2.5h-4zM168.1 75.3h4v2.5h-4zM172.3 77.9h4v2.5h-4zM37.1 53.1h4v2.5h-4zM15.7 42h4v2.5h-4zM16.2 39.1h6v3.5h-6zM26.5 51.1h6v2.5h-6zM26.2 38.4h6v2.5h-6zM39.9 50.2h4v2.5h-4zM52.3 51.6h6v2.5h-6zM48.7 49.9h4v3.5h-4zM46.9 50.9h6v2.5h-6zM170.7 99.7h4v2.5h-4zM185 114.4h6v2.5h-6zM184.1 103.5h6v2.5h-6zM184.3 105.5h4v2.5h-4zM171.3 97h4v3.5h-4zM178.9 113.5h6v2.5h-6zM190.5 106.5h6v2.5h-6zM192.9 109.5h6v3.5h-6zM186.7 97.3h6v3.5h-6zM174.3 27.4h6v2.5h-6zM26.3 102.2h4v2.5h-4zM16.2 109.5h4v2.5h-4zM100.5 60.1h4v2.5h-4zM117.1 71.3h4v3.5h-4z" fill="none" stroke="#f5b800" stroke-width="0.9"/><path d="M107.1 43.5h1.5v3h-1.5zM81.8 50h4v2h-4zM114.7 43.5h2.5v1.2h-2.5zM122.3 52.7h4v2h-4zM97.7 49.2h4v2h-4zM92.2 50.6h2.5v3h-2.5zM122.8 52.8h2.5v1.2h-2.5zM115.2 37.3h1.5v1.2h-1.5zM91.7 40.6h4v2h-4zM106.4 52.2h2.5v2h-2.5zM104.6 55h4v1.2h-4zM84 40.5h1.5v2h-1.5zM115.5 53.7h4v2h-4zM95.4 40.7h1.5v2h-1.5zM92.3 38.3h4v2h-4zM123.9 36.6h2.5v3h-2.5zM126.5 57.6h1.5v1.2h-1.5zM142.4 30.1h4v2h-4zM146.2 25.9h1.5v3h-1.5zM147.7 35.6h4v3h-4zM150.5 42.5h4v3h-4zM143.1 39.7h4v3h-4zM133.4 34.6h2.5v2h-2.5zM141.1 45.1h1.5v3h-1.5zM152.6 64.9h2.5v1.2h-2.5zM138.1 71.5h1.5v1.2h-1.5zM170.5 68.4h4v3h-4zM146.1 54.1h2.5v2h-2.5zM162.6 55.6h2.5v1.2h-2.5zM146.8 75.6h2.5v2h-2.5zM143.1 63.1h2.5v3h-2.5zM157.6 53.9h4v2h-4zM158.9 69.7h4v3h-4zM142 59.8h1.5v2h-1.5zM148.3 69.4h1.5v2h-1.5zM138.3 59.6h1.5v1.2h-1.5zM157.8 57.2h1.5v1.2h-1.5zM156.6 58.9h1.5v3h-1.5zM140.3 67.5h1.5v1.2h-1.5zM153.7 75.4h4v1.2h-4zM141.2 62.9h4v1.2h-4zM151.6 59.1h4v1.2h-4zM138.2 71.6h4v1.2h-4zM169.6 75.8h1.5v2h-1.5zM147.4 59.3h1.5v2h-1.5zM176.9 67.2h2.5v3h-2.5zM151.6 53.1h1.5v3h-1.5zM167.3 75.8h2.5v2h-2.5zM154.7 74.5h2.5v3h-2.5zM174.1 63h2.5v3h-2.5zM160.1 68.7h1.5v3h-1.5zM149.3 65.6h1.5v2h-1.5zM157.6 72.9h1.5v2h-1.5zM143.1 76.5h2.5v2h-2.5zM171 56.2h1.5v3h-1.5zM154.2 74h1.5v3h-1.5zM153.6 63.8h2.5v3h-2.5zM147.4 71.9h2.5v1.2h-2.5zM168.2 56.1h2.5v2h-2.5zM16 48h1.5v3h-1.5zM17.1 40.5h4v2h-4zM37.1 40.7h1.5v3h-1.5zM13.4 55.9h2.5v3h-2.5zM26.6 52.2h2.5v3h-2.5zM29.6 45.7h2.5v2h-2.5zM18.4 50.5h2.5v3h-2.5zM19.1 51.1h4v3h-4zM22.5 46.6h1.5v3h-1.5zM30.4 40.9h2.5v1.2h-2.5zM30 39.7h4v2h-4zM44.7 50.4h1.5v2h-1.5zM48.2 51.2h4v3h-4zM56.4 50.5h4v1.2h-4zM61.9 56.4h1.5v3h-1.5zM40 56.6h4v1.2h-4zM54.9 55.4h4v2h-4zM171.8 109.4h4v1.2h-4zM184.7 95.6h2.5v2h-2.5zM173.5 92.2h1.5v1.2h-1.5zM185.5 102.5h1.5v2h-1.5zM170.5 109.1h4v1.2h-4zM191 93.6h1.5v2h-1.5zM182.6 108.6h1.5v2h-1.5zM183.3 111.1h2.5v2h-2.5zM183.7 103.1h2.5v2h-2.5zM165.7 111h1.5v3h-1.5zM155.7 20.8h2.5v1.2h-2.5zM165 23h1.5v1.2h-1.5zM169 24.3h1.5v2h-1.5zM32.8 114.1h2.5v2h-2.5zM123.2 77.8h4v1.2h-4zM120.3 63.6h2.5v3h-2.5zM129.2 77.6h2.5v3h-2.5z" fill="#300000"/><path d="M24.9 12.8a2.7 2.7 0 1 0 5.4 0a2.7 2.7 0 1 0 -5.4 0zM10.1 31.3a2.7 2.7 0 1 0 5.4 0a2.7 2.7 0 1 0 -5.4 0zM27.7 97a2.7 2.7 0 1 0 5.4 0a2.7 2.7 0 1 0 -5.4 0zM22.1 116a2.7 2.7 0 1 0 5.4 0a2.7 2.7 0 1 0 -5.4 0zM8.3 88.7a2.7 2.7 0 1 0 5.4 0a2.7 2.7 0 1 0 -5.4 0zM175.3 22a2.7 2.7 0 1 0 5.4 0a2.7 2.7 0 1 0 -5.4 0zM189.3 41a2.7 2.7 0 1 0 5.4 0a2.7 2.7 0 1 0 -5.4 0zM192.3 97.6a2.7 2.7 0 1 0 5.4 0a2.7 2.7 0 1 0 -5.4 0zM193.3 12a2.7 2.7 0 1 0 5.4 0a2.7 2.7 0 1 0 -5.4 0zM135.3 117a2.7 2.7 0 1 0 5.4 0a2.7 2.7 0 1 0 -5.4 0zM157.3 111a2.7 2.7 0 1 0 5.4 0a2.7 2.7 0 1 0 -5.4 0zM67.3 13a2.7 2.7 0 1 0 5.4 0a2.7 2.7 0 1 0 -5.4 0zM59.3 80a2.7 2.7 0 1 0 5.4 0a2.7 2.7 0 1 0 -5.4 0zM109.3 40a2.7 2.7 0 1 0 5.4 0a2.7 2.7 0 1 0 -5.4 0zM147.3 88a2.7 2.7 0 1 0 5.4 0a2.7 2.7 0 1 0 -5.4 0zM37.3 106a2.7 2.7 0 1 0 5.4 0a2.7 2.7 0 1 0 -5.4 0zM88.3 82a2.7 2.7 0 1 0 5.4 0a2.7 2.7 0 1 0 -5.4 0z" fill="#f5b800"/><path d="M26.4 12.8a1.2 1.2 0 1 0 2.4 0a1.2 1.2 0 1 0 -2.4 0zM11.6 31.3a1.2 1.2 0 1 0 2.4 0a1.2 1.2 0 1 0 -2.4 0zM29.2 97a1.2 1.2 0 1 0 2.4 0a1.2 1.2 0 1 0 -2.4 0zM23.6 116a1.2 1.2 0 1 0 2.4 0a1.2 1.2 0 1 0 -2.4 0zM9.8 88.7a1.2 1.2 0 1 0 2.4 0a1.2 1.2 0 1 0 -2.4 0zM176.8 22a1.2 1.2 0 1 0 2.4 0a1.2 1.2 0 1 0 -2.4 0zM190.8 41a1.2 1.2 0 1 0 2.4 0a1.2 1.2 0 1 0 -2.4 0zM193.8 97.6a1.2 1.2 0 1 0 2.4 0a1.2 1.2 0 1 0 -2.4 0zM194.8 12a1.2 1.2 0 1 0 2.4 0a1.2 1.2 0 1 0 -2.4 0zM136.8 117a1.2 1.2 0 1 0 2.4 0a1.2 1.2 0 1 0 -2.4 0zM158.8 111a1.2 1.2 0 1 0 2.4 0a1.2 1.2 0 1 0 -2.4 0zM68.8 13a1.2 1.2 0 1 0 2.4 0a1.2 1.2 0 1 0 -2.4 0zM60.8 80a1.2 1.2 0 1 0 2.4 0a1.2 1.2 0 1 0 -2.4 0zM110.8 40a1.2 1.2 0 1 0 2.4 0a1.2 1.2 0 1 0 -2.4 0zM148.8 88a1.2 1.2 0 1 0 2.4 0a1.2 1.2 0 1 0 -2.4 0zM38.8 106a1.2 1.2 0 1 0 2.4 0a1.2 1.2 0 1 0 -2.4 0zM89.8 82a1.2 1.2 0 1 0 2.4 0a1.2 1.2 0 1 0 -2.4 0z" fill="#d08a00"/><path d="M21.6 65.5a2.3 2.3 0 1 0 4.6 0a2.3 2.3 0 1 0 -4.6 0zM25.3 23.9a2.3 2.3 0 1 0 4.6 0a2.3 2.3 0 1 0 -4.6 0zM176.7 25a2.3 2.3 0 1 0 4.6 0a2.3 2.3 0 1 0 -4.6 0zM179.7 67a2.3 2.3 0 1 0 4.6 0a2.3 2.3 0 1 0 -4.6 0zM97.7 30a2.3 2.3 0 1 0 4.6 0a2.3 2.3 0 1 0 -4.6 0zM57.7 100a2.3 2.3 0 1 0 4.6 0a2.3 2.3 0 1 0 -4.6 0zM163.7 40a2.3 2.3 0 1 0 4.6 0a2.3 2.3 0 1 0 -4.6 0z" fill="#00b400"/><path d="M194 105a2 2 0 1 0 4 0a2 2 0 1 0 -4 0zM176 38a2 2 0 1 0 4 0a2 2 0 1 0 -4 0zM6 18a2 2 0 1 0 4 0a2 2 0 1 0 -4 0z" fill="#000"/></g><g transform="translate(383,232.5)"><rect x="0" y="0" width="206" height="120" fill="#ff0000" stroke="#f4f4f4" stroke-width="1.1"/><path d="M14 5.8H190Q201 5.8 201 16V106M5.5 84V16Q5.5 5.8 16 5.8" fill="none" stroke="#a05a10" stroke-width="2"/><path d="M21 94V117M185 20V115" fill="none" stroke="#8a4a00" stroke-width="1"/><rect x="44" y="12.5" width="118" height="8" fill="#00b400"/><rect x="31" y="116" width="141" height="3.6" fill="#00b400"/><path d="M5.5 82V94H24V86H9V82Z" fill="#00b400"/><path d="M197.6 83H200.5V94.4H192V88.6H197.6Z" fill="#00b400"/><path d="M21 37L41.5 36L47 27.6H118" fill="none" stroke="#3c0000" stroke-width="4.4" stroke-linejoin="round"/><path d="M21 37L41.5 36L47 27.6H118" fill="none" stroke="#ff0000" stroke-width="2.2" stroke-linejoin="round"/><path d="M76 28H128L133 33V78L166 113" fill="none" stroke="#3c0000" stroke-width="4.4" stroke-linejoin="round"/><path d="M76 28H128L133 33V78L166 113" fill="none" stroke="#ff0000" stroke-width="2.2" stroke-linejoin="round"/><path d="M48.5 43V84" fill="none" stroke="#3c0000" stroke-width="5.2" stroke-linejoin="round"/><path d="M48.5 43V84" fill="none" stroke="#ff0000" stroke-width="2" stroke-linejoin="round"/><path d="M44 50L48.5 43M48.5 84L44 92" fill="none" stroke="#3c0000" stroke-width="4.0" stroke-linejoin="round"/><path d="M44 50L48.5 43M48.5 84L44 92" fill="none" stroke="#ff0000" stroke-width="1.6" stroke-linejoin="round"/><path d="M68 47L93 32M74 49L99 34" fill="none" stroke="#3c0000" stroke-width="3.4000000000000004" stroke-linejoin="round"/><path d="M68 47L93 32M74 49L99 34" fill="none" stroke="#ff0000" stroke-width="1.6" stroke-linejoin="round"/><path d="M58 67.5H75Q78 70.5 75 73.5H58Q55 70.5 58 67.5Z" fill="none" stroke="#3c0000" stroke-width="2.8" stroke-linejoin="round"/><path d="M58 67.5H75Q78 70.5 75 73.5H58Q55 70.5 58 67.5Z" fill="none" stroke="#ff0000" stroke-width="1.4" stroke-linejoin="round"/><path d="M170 109H150L140 100" fill="none" stroke="#3c0000" stroke-width="3.4000000000000004" stroke-linejoin="round"/><path d="M170 109H150L140 100" fill="none" stroke="#ff0000" stroke-width="1.6" stroke-linejoin="round"/><path d="M52.6 43V108" fill="none" stroke="#3c0000" stroke-width="1.4"/><path d="M145 35V62" fill="none" stroke="#3c0000" stroke-width="1.4"/><path d="M118 64V80" fill="none" stroke="#3c0000" stroke-width="1.4"/><path d="M96 70H128" fill="none" stroke="#3c0000" stroke-width="1.4"/><path d="M176 45V100" fill="none" stroke="#3c0000" stroke-width="1.4"/><rect x="53.5" y="33" width="3.8" height="10.5" fill="#1a0000"/><path d="M84 96H96V89H137V108H84Z" fill="none" stroke="#c87800" stroke-width="1.6"/><rect x="98" y="95" width="9" height="4.5" fill="#000"/><rect x="124" y="92" width="12" height="15" fill="#f5b800"/><rect x="126" y="94" width="3" height="3" fill="#c89000"/><path d="M87 103Q92 99 100 102T113 102" fill="none" stroke="#f5b800" stroke-width="1.2"/><path d="M97.2 35.4h1.3v1.3h-1.3zM100.4 35.7h2.6v1.3h-2.6zM118.9 37h3.2v1.3h-3.2zM120.3 41h1.3v2.2h-1.3zM94.5 53.6h3.2v2.2h-3.2zM110 42.9h1.3v2.2h-1.3zM101.9 56.2h1.6v1.3h-1.6zM112.9 39.9h3.2v1.6h-3.2zM121.1 51.5h1.3v1.3h-1.3zM104.1 38h2.6v1.6h-2.6zM96 42.4h2.6v1.3h-2.6zM119.5 56.7h1.3v1.3h-1.3zM114.4 41.4h2.6v1.6h-2.6zM113.7 55.3h2.6v1.6h-2.6zM87.9 36.8h2v1.3h-2zM87.8 43.6h1.6v1.6h-1.6zM120.6 40.7h2v2.2h-2zM121.6 57h1.6v1.3h-1.6zM90.9 39.6h3.2v1.3h-3.2zM92.3 34.1h2v2.2h-2zM98.7 43.5h2.6v1.3h-2.6zM89 57.6h1.3v1.6h-1.3zM108.2 36.5h3.2v1.3h-3.2zM124.6 48.7h1.6v2.2h-1.6zM102.3 36.8h2.6v1.6h-2.6zM102.7 36.1h2v2.2h-2zM92.4 53.9h1.3v1.3h-1.3zM124.7 46.7h3.2v1.3h-3.2zM104.4 55.8h1.6v2.2h-1.6zM118.5 51.8h3.2v1.6h-3.2zM96.7 34.7h2v1.6h-2zM126.4 56.9h1.6v1.3h-1.6zM90.7 38.7h3.2v2.2h-3.2zM100.4 49.3h2.6v1.6h-2.6zM81.3 48.2h1.6v2.2h-1.6zM105.8 37.1h1.3v2.2h-1.3zM81.3 39.1h3.2v1.6h-3.2zM92.2 44.1h2v1.6h-2zM111.1 53.6h3.2v1.3h-3.2zM105 46.6h2.6v1.3h-2.6zM108.6 52.6h1.6v1.6h-1.6zM109.1 36.9h3.2v2.2h-3.2zM106.1 52.8h3.2v1.3h-3.2zM108.8 46.1h2v1.6h-2zM103.9 53.4h1.6v2.2h-1.6zM119.5 37.3h2.6v1.6h-2.6zM83.4 39.8h2v1.3h-2zM91.9 37.3h1.3v1.6h-1.3zM113.2 57.9h2.6v1.3h-2.6zM96.8 36.2h2v2.2h-2zM101.6 50.9h3.2v2.2h-3.2zM93.9 57.1h1.6v1.3h-1.6zM99.1 46.9h2.6v2.2h-2.6zM122.1 40.5h1.3v1.6h-1.3zM83.9 54.5h1.3v1.6h-1.3zM80.5 57.9h2v2.2h-2zM86.1 46.6h1.3v1.3h-1.3zM105 38.9h1.6v1.6h-1.6zM96.3 34.4h1.3v1.3h-1.3zM114.5 47.2h2.6v1.3h-2.6zM103.3 54h3.2v1.6h-3.2zM112.3 57.6h1.6v1.6h-1.6zM109.4 55.1h1.3v1.3h-1.3zM147 32.8h2v2.2h-2zM138.1 30.7h1.6v1.6h-1.6zM138.1 46.2h2v1.3h-2zM133 32.8h3.2v2.2h-3.2zM137.2 35.6h2v1.3h-2zM136 37.5h2v1.6h-2zM151.7 42h2v2.2h-2zM150.3 40.4h2.6v2.2h-2.6zM147.3 39.9h1.3v1.3h-1.3zM135.8 32.3h2.6v2.2h-2.6zM134.1 24.4h1.6v1.6h-1.6zM138.5 34.5h3.2v2.2h-3.2zM150 43.5h1.6v1.3h-1.6zM148.5 46.4h2.6v1.3h-2.6zM146.5 25.8h2v2.2h-2zM148.6 31h1.3v1.6h-1.3zM139.1 35.9h2.6v1.3h-2.6zM153.9 36.6h1.3v1.6h-1.3zM134.9 41.2h2v1.3h-2zM145.7 38.5h1.3v2.2h-1.3zM167.1 62.8h1.3v1.6h-1.3zM166.5 75.4h2v1.3h-2zM153.7 78h2v1.6h-2zM168.2 74.2h1.3v2.2h-1.3zM149.4 76.3h2v1.6h-2zM158.4 56.9h2.6v1.3h-2.6zM174.5 66.3h2.6v1.6h-2.6zM164.2 59.8h2.6v1.3h-2.6zM144.7 56.2h2.6v2.2h-2.6zM143.6 57h2v2.2h-2zM141.6 58.2h3.2v1.3h-3.2zM173.5 71.5h2.6v2.2h-2.6zM159 61.8h1.3v1.6h-1.3zM149.1 77.2h3.2v2.2h-3.2zM163.2 74.4h2v1.3h-2zM153.4 68.8h2v1.3h-2zM176.9 58.5h1.6v1.3h-1.6zM163.9 71.9h3.2v1.3h-3.2zM138.1 55.3h1.3v2.2h-1.3zM148.4 72.6h3.2v1.6h-3.2zM177.9 59.2h1.6v1.6h-1.6zM159.1 66.2h2.6v2.2h-2.6zM164 53.4h2.6v1.3h-2.6zM139.4 60.8h2.6v1.3h-2.6zM157.8 56.9h2.6v2.2h-2.6zM138.9 67.5h1.3v1.3h-1.3zM177.9 76.2h1.6v2.2h-1.6zM175.4 71.4h2.6v1.6h-2.6zM177.4 63.5h1.3v1.6h-1.3zM153.2 72h2.6v1.3h-2.6zM140 64.3h2.6v1.3h-2.6zM150.9 71.2h2.6v1.3h-2.6zM170.5 71.9h1.3v1.6h-1.3zM140.5 75.9h1.3v2.2h-1.3zM148.5 70.6h2v1.6h-2zM139 58.1h2.6v1.6h-2.6zM151.1 60.3h3.2v1.3h-3.2zM158.5 62.2h2.6v1.3h-2.6zM164 64.5h1.6v1.6h-1.6zM173.3 77.7h1.3v1.3h-1.3zM169.2 59.6h2v1.6h-2zM148.2 58.8h1.6v1.3h-1.6zM140.6 58.5h3.2v1.3h-3.2zM164 54.6h1.3v1.3h-1.3zM138.2 75h2.6v1.6h-2.6zM139.6 59.6h1.6v2.2h-1.6zM172.6 63.7h1.3v1.3h-1.3zM163.5 70.5h1.3v1.6h-1.3zM165.1 56.8h1.6v1.3h-1.6zM169.8 66.2h1.3v1.6h-1.3zM164.6 56h1.6v1.6h-1.6zM165.8 62.7h2v1.6h-2zM176.1 60.1h2v1.6h-2zM145.9 70.9h1.3v1.6h-1.3zM173.3 64h1.3v1.3h-1.3zM162.9 61.6h1.6v1.6h-1.6zM140.1 76.1h3.2v2.2h-3.2zM146.7 62.4h2.6v1.6h-2.6zM154.8 67.1h2v1.6h-2zM158.1 56.6h2.6v1.6h-2.6zM170.4 62.4h2v1.6h-2zM152.6 72.9h1.3v1.3h-1.3zM143.3 75h1.6v2.2h-1.6zM169.5 76.2h2v2.2h-2zM19.4 48.1h1.3v1.3h-1.3zM39.7 49.7h1.3v1.6h-1.3zM20.1 50.8h2v1.3h-2zM12.1 44.8h2v2.2h-2zM18.3 49.8h1.6v1.6h-1.6zM29.5 47.4h1.6v2.2h-1.6zM34.7 58.3h3.2v1.6h-3.2zM28.7 49.7h3.2v2.2h-3.2zM25.8 40.6h1.3v2.2h-1.3zM12.7 41.1h1.3v1.3h-1.3zM29.2 51.4h2.6v1.3h-2.6zM31.9 42.9h2.6v2.2h-2.6zM34.1 48.5h1.6v1.3h-1.6zM36.6 37.3h1.6v2.2h-1.6zM66.5 56.6h2.6v2.2h-2.6zM58.5 56.7h1.6v2.2h-1.6zM63.8 56.1h3.2v1.3h-3.2zM54.8 50.5h1.3v1.3h-1.3zM59.6 49.6h2v1.3h-2zM65.4 50h1.3v1.3h-1.3zM62.1 54.7h1.3v1.3h-1.3zM41.7 55.8h2v1.6h-2zM50.9 49.2h2v1.3h-2zM59 52.3h3.2v2.2h-3.2zM51.2 56h1.3v2.2h-1.3zM43.8 49h1.3v1.3h-1.3zM55.6 57.6h3.2v1.3h-3.2zM42.1 54.7h3.2v1.3h-3.2zM56.6 52.2h2.6v2.2h-2.6zM166.5 112.4h1.6v1.6h-1.6zM171.6 112.7h2.6v2.2h-2.6zM170.8 102.6h3.2v2.2h-3.2zM165 105.4h2.6v2.2h-2.6zM180.1 99.4h2v2.2h-2zM170.9 114h1.3v1.3h-1.3zM191.9 94.3h1.6v1.6h-1.6zM185.3 102h1.3v1.6h-1.3zM170 100.9h2.6v1.6h-2.6zM168.1 105.9h1.6v1.6h-1.6zM183.7 106.8h2v1.6h-2zM182.2 94.3h2.6v2.2h-2.6zM164.6 111.7h1.6v2.2h-1.6zM166.9 105.2h2.6v2.2h-2.6zM164.5 110.2h2v1.6h-2zM171.3 100.8h1.3v1.6h-1.3zM192.8 114.1h1.6v1.3h-1.6zM171.1 98.9h2.6v2.2h-2.6zM182.5 107.2h2v1.6h-2zM188.1 106.6h1.3v1.3h-1.3zM191.6 107.1h1.3v2.2h-1.3zM158.3 22.8h3.2v2.2h-3.2zM169.8 20.6h2.6v2.2h-2.6zM185.3 24.7h1.6v1.3h-1.6zM168.9 24.7h1.6v2.2h-1.6zM169.7 24h1.3v1.3h-1.3zM183.6 23.6h2v1.6h-2zM175.5 25.6h3.2v1.3h-3.2zM177.3 29.2h1.3v2.2h-1.3zM169.4 27.1h1.6v2.2h-1.6zM166.6 19.5h2v1.6h-2zM167.4 23.1h2v1.6h-2zM164.2 23.9h2v2.2h-2zM163.8 20.4h1.3v1.6h-1.3zM157.7 26.6h1.3v1.3h-1.3zM27 108.3h3.2v1.3h-3.2zM27 101.6h2.6v2.2h-2.6zM38 100.9h3.2v2.2h-3.2zM34.9 113h1.3v2.2h-1.3zM15.4 113.1h2v2.2h-2zM36.3 112.9h1.3v1.6h-1.3zM15.6 108.5h1.3v1.6h-1.3zM32 100.6h2.6v2.2h-2.6zM35.9 106.1h2.6v2.2h-2.6zM116.5 62.1h1.6v2.2h-1.6zM106.5 63h2v2.2h-2zM108.8 73.9h2v1.3h-2zM121.5 60.3h3.2v1.3h-3.2zM111.7 67.8h2.6v2.2h-2.6zM101.8 69.2h2.6v1.6h-2.6zM104.9 80h2.6v1.6h-2.6zM123.5 74.2h1.3v2.2h-1.3zM121.8 60.4h2v2.2h-2zM112.9 82.2h2.6v2.2h-2.6zM123.1 65.9h1.3v1.6h-1.3zM58 51.9h1.4v1.4h-1.4zM119.5 92.9h1.4v1.4h-1.4zM176.6 12.4h1.4v1.4h-1.4zM166.3 92.4h1.4v1.4h-1.4zM172.8 67.5h1.4v1.4h-1.4zM60 96.5h1.4v1.4h-1.4zM161.3 79.2h1.4v1.4h-1.4zM181.6 44.1h1.4v1.4h-1.4zM24.2 65.6h1.4v1.4h-1.4zM159.5 28.8h1.4v1.4h-1.4zM150.5 104.9h1.4v1.4h-1.4zM52.5 71.1h1.4v1.4h-1.4zM136.8 56.4h1.4v1.4h-1.4zM47.3 34.5h1.4v1.4h-1.4zM150.7 90.3h1.4v1.4h-1.4zM95.3 17.1h1.4v1.4h-1.4zM161.2 88.3h1.4v1.4h-1.4zM52.2 68.3h1.4v1.4h-1.4zM178.4 100h1.4v1.4h-1.4zM107.2 57.6h1.4v1.4h-1.4zM120 27.7h1.4v1.4h-1.4zM44.5 26.8h1.4v1.4h-1.4zM141.2 45.7h1.4v1.4h-1.4zM115.2 49.9h1.4v1.4h-1.4zM106.3 23.5h1.4v1.4h-1.4zM16.5 111.7h1.4v1.4h-1.4zM79.1 19h1.4v1.4h-1.4zM128.2 89.9h1.4v1.4h-1.4zM37.7 70.1h1.4v1.4h-1.4zM73.5 62h1.4v1.4h-1.4zM11.9 11.5h1.4v1.4h-1.4zM196.2 98.1h1.4v1.4h-1.4zM100.4 67h1.4v1.4h-1.4zM57.7 89h1.4v1.4h-1.4zM88.9 106.4h1.4v1.4h-1.4zM153.8 93.2h1.4v1.4h-1.4zM191.1 34.4h1.4v1.4h-1.4zM15.2 28.9h1.4v1.4h-1.4zM42.3 16.7h1.4v1.4h-1.4zM17.7 66h1.4v1.4h-1.4zM173.4 55.7h1.4v1.4h-1.4zM188 102.6h1.4v1.4h-1.4zM20.2 70.2h1.4v1.4h-1.4zM83.5 20.5h1.4v1.4h-1.4zM190.3 34.7h1.4v1.4h-1.4zM115.3 74.6h1.4v1.4h-1.4zM189.7 77.7h1.4v1.4h-1.4zM82.7 54.6h1.4v1.4h-1.4zM38.3 108.4h1.4v1.4h-1.4zM196.4 31.1h1.4v1.4h-1.4zM15.3 34.6h1.4v1.4h-1.4zM74.9 101.9h1.4v1.4h-1.4zM179.9 95.1h1.4v1.4h-1.4zM16.9 89.8h1.4v1.4h-1.4zM142.8 75.3h1.4v1.4h-1.4zM195.2 13.8h1.4v1.4h-1.4zM35.5 86.5h1.4v1.4h-1.4zM186.5 78.4h1.4v1.4h-1.4zM64.8 69.5h1.4v1.4h-1.4zM152 19h1.4v1.4h-1.4zM69.5 34.7h1.4v1.4h-1.4zM31.6 58.1h1.4v1.4h-1.4zM40 32.8h1.4v1.4h-1.4zM35.2 78.5h1.4v1.4h-1.4zM10.4 82.6h1.4v1.4h-1.4zM45.1 11.7h1.4v1.4h-1.4zM184.3 30.9h1.4v1.4h-1.4zM185.5 98.1h1.4v1.4h-1.4zM176.9 22.5h1.4v1.4h-1.4zM93 18.1h1.4v1.4h-1.4zM167 31h5v6h-5zM38 26h5v6h-5z" fill="#f5b800"/><path d="M95.2 37.6h4v2.5h-4zM82.8 38.9h6v3.5h-6zM106.6 56.9h4v3.5h-4zM115.6 41.2h4v3.5h-4zM105.5 46.1h4v2.5h-4zM119.5 45.5h4v2.5h-4zM98.9 56.7h4v2.5h-4zM118.8 57.5h6v2.5h-6zM122.2 37.7h6v2.5h-6zM121.6 37.9h4v2.5h-4zM153.7 27.4h4v2.5h-4zM134.9 36.1h6v3.5h-6zM134.3 30.2h4v3.5h-4zM144.4 76.7h6v3.5h-6zM149.3 58.6h6v3.5h-6zM166.6 77h6v2.5h-6zM145.3 72.9h4v2.5h-4zM141.9 65h6v2.5h-6zM147.4 62.8h4v2.5h-4zM142.9 58.4h4v2.5h-4zM173.4 73.9h6v2.5h-6zM163.5 54.1h4v2.5h-4zM168.1 75.3h4v2.5h-4zM172.3 77.9h4v2.5h-4zM37.1 53.1h4v2.5h-4zM15.7 42h4v2.5h-4zM16.2 39.1h6v3.5h-6zM26.5 51.1h6v2.5h-6zM26.2 38.4h6v2.5h-6zM39.9 50.2h4v2.5h-4zM52.3 51.6h6v2.5h-6zM48.7 49.9h4v3.5h-4zM46.9 50.9h6v2.5h-6zM170.7 99.7h4v2.5h-4zM185 114.4h6v2.5h-6zM184.1 103.5h6v2.5h-6zM184.3 105.5h4v2.5h-4zM171.3 97h4v3.5h-4zM178.9 113.5h6v2.5h-6zM190.5 106.5h6v2.5h-6zM192.9 109.5h6v3.5h-6zM186.7 97.3h6v3.5h-6zM174.3 27.4h6v2.5h-6zM26.3 102.2h4v2.5h-4zM16.2 109.5h4v2.5h-4zM100.5 60.1h4v2.5h-4zM117.1 71.3h4v3.5h-4z" fill="none" stroke="#f5b800" stroke-width="0.9"/><path d="M107.1 43.5h1.5v3h-1.5zM81.8 50h4v2h-4zM114.7 43.5h2.5v1.2h-2.5zM122.3 52.7h4v2h-4zM97.7 49.2h4v2h-4zM92.2 50.6h2.5v3h-2.5zM122.8 52.8h2.5v1.2h-2.5zM115.2 37.3h1.5v1.2h-1.5zM91.7 40.6h4v2h-4zM106.4 52.2h2.5v2h-2.5zM104.6 55h4v1.2h-4zM84 40.5h1.5v2h-1.5zM115.5 53.7h4v2h-4zM95.4 40.7h1.5v2h-1.5zM92.3 38.3h4v2h-4zM123.9 36.6h2.5v3h-2.5zM126.5 57.6h1.5v1.2h-1.5zM142.4 30.1h4v2h-4zM146.2 25.9h1.5v3h-1.5zM147.7 35.6h4v3h-4zM150.5 42.5h4v3h-4zM143.1 39.7h4v3h-4zM133.4 34.6h2.5v2h-2.5zM141.1 45.1h1.5v3h-1.5zM152.6 64.9h2.5v1.2h-2.5zM138.1 71.5h1.5v1.2h-1.5zM170.5 68.4h4v3h-4zM146.1 54.1h2.5v2h-2.5zM162.6 55.6h2.5v1.2h-2.5zM146.8 75.6h2.5v2h-2.5zM143.1 63.1h2.5v3h-2.5zM157.6 53.9h4v2h-4zM158.9 69.7h4v3h-4zM142 59.8h1.5v2h-1.5zM148.3 69.4h1.5v2h-1.5zM138.3 59.6h1.5v1.2h-1.5zM157.8 57.2h1.5v1.2h-1.5zM156.6 58.9h1.5v3h-1.5zM140.3 67.5h1.5v1.2h-1.5zM153.7 75.4h4v1.2h-4zM141.2 62.9h4v1.2h-4zM151.6 59.1h4v1.2h-4zM138.2 71.6h4v1.2h-4zM169.6 75.8h1.5v2h-1.5zM147.4 59.3h1.5v2h-1.5zM176.9 67.2h2.5v3h-2.5zM151.6 53.1h1.5v3h-1.5zM167.3 75.8h2.5v2h-2.5zM154.7 74.5h2.5v3h-2.5zM174.1 63h2.5v3h-2.5zM160.1 68.7h1.5v3h-1.5zM149.3 65.6h1.5v2h-1.5zM157.6 72.9h1.5v2h-1.5zM143.1 76.5h2.5v2h-2.5zM171 56.2h1.5v3h-1.5zM154.2 74h1.5v3h-1.5zM153.6 63.8h2.5v3h-2.5zM147.4 71.9h2.5v1.2h-2.5zM168.2 56.1h2.5v2h-2.5zM16 48h1.5v3h-1.5zM17.1 40.5h4v2h-4zM37.1 40.7h1.5v3h-1.5zM13.4 55.9h2.5v3h-2.5zM26.6 52.2h2.5v3h-2.5zM29.6 45.7h2.5v2h-2.5zM18.4 50.5h2.5v3h-2.5zM19.1 51.1h4v3h-4zM22.5 46.6h1.5v3h-1.5zM30.4 40.9h2.5v1.2h-2.5zM30 39.7h4v2h-4zM44.7 50.4h1.5v2h-1.5zM48.2 51.2h4v3h-4zM56.4 50.5h4v1.2h-4zM61.9 56.4h1.5v3h-1.5zM40 56.6h4v1.2h-4zM54.9 55.4h4v2h-4zM171.8 109.4h4v1.2h-4zM184.7 95.6h2.5v2h-2.5zM173.5 92.2h1.5v1.2h-1.5zM185.5 102.5h1.5v2h-1.5zM170.5 109.1h4v1.2h-4zM191 93.6h1.5v2h-1.5zM182.6 108.6h1.5v2h-1.5zM183.3 111.1h2.5v2h-2.5zM183.7 103.1h2.5v2h-2.5zM165.7 111h1.5v3h-1.5zM155.7 20.8h2.5v1.2h-2.5zM165 23h1.5v1.2h-1.5zM169 24.3h1.5v2h-1.5zM32.8 114.1h2.5v2h-2.5zM123.2 77.8h4v1.2h-4zM120.3 63.6h2.5v3h-2.5zM129.2 77.6h2.5v3h-2.5z" fill="#300000"/><path d="M24.9 12.8a2.7 2.7 0 1 0 5.4 0a2.7 2.7 0 1 0 -5.4 0zM10.1 31.3a2.7 2.7 0 1 0 5.4 0a2.7 2.7 0 1 0 -5.4 0zM27.7 97a2.7 2.7 0 1 0 5.4 0a2.7 2.7 0 1 0 -5.4 0zM22.1 116a2.7 2.7 0 1 0 5.4 0a2.7 2.7 0 1 0 -5.4 0zM8.3 88.7a2.7 2.7 0 1 0 5.4 0a2.7 2.7 0 1 0 -5.4 0zM175.3 22a2.7 2.7 0 1 0 5.4 0a2.7 2.7 0 1 0 -5.4 0zM189.3 41a2.7 2.7 0 1 0 5.4 0a2.7 2.7 0 1 0 -5.4 0zM192.3 97.6a2.7 2.7 0 1 0 5.4 0a2.7 2.7 0 1 0 -5.4 0zM193.3 12a2.7 2.7 0 1 0 5.4 0a2.7 2.7 0 1 0 -5.4 0zM135.3 117a2.7 2.7 0 1 0 5.4 0a2.7 2.7 0 1 0 -5.4 0zM157.3 111a2.7 2.7 0 1 0 5.4 0a2.7 2.7 0 1 0 -5.4 0zM67.3 13a2.7 2.7 0 1 0 5.4 0a2.7 2.7 0 1 0 -5.4 0zM59.3 80a2.7 2.7 0 1 0 5.4 0a2.7 2.7 0 1 0 -5.4 0zM109.3 40a2.7 2.7 0 1 0 5.4 0a2.7 2.7 0 1 0 -5.4 0zM147.3 88a2.7 2.7 0 1 0 5.4 0a2.7 2.7 0 1 0 -5.4 0zM37.3 106a2.7 2.7 0 1 0 5.4 0a2.7 2.7 0 1 0 -5.4 0zM88.3 82a2.7 2.7 0 1 0 5.4 0a2.7 2.7 0 1 0 -5.4 0z" fill="#f5b800"/><path d="M26.4 12.8a1.2 1.2 0 1 0 2.4 0a1.2 1.2 0 1 0 -2.4 0zM11.6 31.3a1.2 1.2 0 1 0 2.4 0a1.2 1.2 0 1 0 -2.4 0zM29.2 97a1.2 1.2 0 1 0 2.4 0a1.2 1.2 0 1 0 -2.4 0zM23.6 116a1.2 1.2 0 1 0 2.4 0a1.2 1.2 0 1 0 -2.4 0zM9.8 88.7a1.2 1.2 0 1 0 2.4 0a1.2 1.2 0 1 0 -2.4 0zM176.8 22a1.2 1.2 0 1 0 2.4 0a1.2 1.2 0 1 0 -2.4 0zM190.8 41a1.2 1.2 0 1 0 2.4 0a1.2 1.2 0 1 0 -2.4 0zM193.8 97.6a1.2 1.2 0 1 0 2.4 0a1.2 1.2 0 1 0 -2.4 0zM194.8 12a1.2 1.2 0 1 0 2.4 0a1.2 1.2 0 1 0 -2.4 0zM136.8 117a1.2 1.2 0 1 0 2.4 0a1.2 1.2 0 1 0 -2.4 0zM158.8 111a1.2 1.2 0 1 0 2.4 0a1.2 1.2 0 1 0 -2.4 0zM68.8 13a1.2 1.2 0 1 0 2.4 0a1.2 1.2 0 1 0 -2.4 0zM60.8 80a1.2 1.2 0 1 0 2.4 0a1.2 1.2 0 1 0 -2.4 0zM110.8 40a1.2 1.2 0 1 0 2.4 0a1.2 1.2 0 1 0 -2.4 0zM148.8 88a1.2 1.2 0 1 0 2.4 0a1.2 1.2 0 1 0 -2.4 0zM38.8 106a1.2 1.2 0 1 0 2.4 0a1.2 1.2 0 1 0 -2.4 0zM89.8 82a1.2 1.2 0 1 0 2.4 0a1.2 1.2 0 1 0 -2.4 0z" fill="#d08a00"/><path d="M21.6 65.5a2.3 2.3 0 1 0 4.6 0a2.3 2.3 0 1 0 -4.6 0zM25.3 23.9a2.3 2.3 0 1 0 4.6 0a2.3 2.3 0 1 0 -4.6 0zM176.7 25a2.3 2.3 0 1 0 4.6 0a2.3 2.3 0 1 0 -4.6 0zM179.7 67a2.3 2.3 0 1 0 4.6 0a2.3 2.3 0 1 0 -4.6 0zM97.7 30a2.3 2.3 0 1 0 4.6 0a2.3 2.3 0 1 0 -4.6 0zM57.7 100a2.3 2.3 0 1 0 4.6 0a2.3 2.3 0 1 0 -4.6 0zM163.7 40a2.3 2.3 0 1 0 4.6 0a2.3 2.3 0 1 0 -4.6 0z" fill="#00b400"/><path d="M194 105a2 2 0 1 0 4 0a2 2 0 1 0 -4 0zM176 38a2 2 0 1 0 4 0a2 2 0 1 0 -4 0zM6 18a2 2 0 1 0 4 0a2 2 0 1 0 -4 0z" fill="#000"/></g><g transform="translate(603,232.5)"><rect x="0" y="0" width="206" height="120" fill="#ff0000" stroke="#f4f4f4" stroke-width="1.1"/><path d="M14 5.8H190Q201 5.8 201 16V106M5.5 84V16Q5.5 5.8 16 5.8" fill="none" stroke="#a05a10" stroke-width="2"/><path d="M21 94V117M185 20V115" fill="none" stroke="#8a4a00" stroke-width="1"/><rect x="44" y="12.5" width="118" height="8" fill="#00b400"/><rect x="31" y="116" width="141" height="3.6" fill="#00b400"/><path d="M5.5 82V94H24V86H9V82Z" fill="#00b400"/><path d="M197.6 83H200.5V94.4H192V88.6H197.6Z" fill="#00b400"/><path d="M21 37L41.5 36L47 27.6H118" fill="none" stroke="#3c0000" stroke-width="4.4" stroke-linejoin="round"/><path d="M21 37L41.5 36L47 27.6H118" fill="none" stroke="#ff0000" stroke-width="2.2" stroke-linejoin="round"/><path d="M76 28H128L133 33V78L166 113" fill="none" stroke="#3c0000" stroke-width="4.4" stroke-linejoin="round"/><path d="M76 28H128L133 33V78L166 113" fill="none" stroke="#ff0000" stroke-width="2.2" stroke-linejoin="round"/><path d="M48.5 43V84" fill="none" stroke="#3c0000" stroke-width="5.2" stroke-linejoin="round"/><path d="M48.5 43V84" fill="none" stroke="#ff0000" stroke-width="2" stroke-linejoin="round"/><path d="M44 50L48.5 43M48.5 84L44 92" fill="none" stroke="#3c0000" stroke-width="4.0" stroke-linejoin="round"/><path d="M44 50L48.5 43M48.5 84L44 92" fill="none" stroke="#ff0000" stroke-width="1.6" stroke-linejoin="round"/><path d="M68 47L93 32M74 49L99 34" fill="none" stroke="#3c0000" stroke-width="3.4000000000000004" stroke-linejoin="round"/><path d="M68 47L93 32M74 49L99 34" fill="none" stroke="#ff0000" stroke-width="1.6" stroke-linejoin="round"/><path d="M58 67.5H75Q78 70.5 75 73.5H58Q55 70.5 58 67.5Z" fill="none" stroke="#3c0000" stroke-width="2.8" stroke-linejoin="round"/><path d="M58 67.5H75Q78 70.5 75 73.5H58Q55 70.5 58 67.5Z" fill="none" stroke="#ff0000" stroke-width="1.4" stroke-linejoin="round"/><path d="M170 109H150L140 100" fill="none" stroke="#3c0000" stroke-width="3.4000000000000004" stroke-linejoin="round"/><path d="M170 109H150L140 100" fill="none" stroke="#ff0000" stroke-width="1.6" stroke-linejoin="round"/><path d="M52.6 43V108" fill="none" stroke="#3c0000" stroke-width="1.4"/><path d="M145 35V62" fill="none" stroke="#3c0000" stroke-width="1.4"/><path d="M118 64V80" fill="none" stroke="#3c0000" stroke-width="1.4"/><path d="M96 70H128" fill="none" stroke="#3c0000" stroke-width="1.4"/><path d="M176 45V100" fill="none" stroke="#3c0000" stroke-width="1.4"/><rect x="53.5" y="33" width="3.8" height="10.5" fill="#1a0000"/><path d="M84 96H96V89H137V108H84Z" fill="none" stroke="#c87800" stroke-width="1.6"/><rect x="98" y="95" width="9" height="4.5" fill="#000"/><rect x="124" y="92" width="12" height="15" fill="#f5b800"/><rect x="126" y="94" width="3" height="3" fill="#c89000"/><path d="M87 103Q92 99 100 102T113 102" fill="none" stroke="#f5b800" stroke-width="1.2"/><path d="M97.2 35.4h1.3v1.3h-1.3zM100.4 35.7h2.6v1.3h-2.6zM118.9 37h3.2v1.3h-3.2zM120.3 41h1.3v2.2h-1.3zM94.5 53.6h3.2v2.2h-3.2zM110 42.9h1.3v2.2h-1.3zM101.9 56.2h1.6v1.3h-1.6zM112.9 39.9h3.2v1.6h-3.2zM121.1 51.5h1.3v1.3h-1.3zM104.1 38h2.6v1.6h-2.6zM96 42.4h2.6v1.3h-2.6zM119.5 56.7h1.3v1.3h-1.3zM114.4 41.4h2.6v1.6h-2.6zM113.7 55.3h2.6v1.6h-2.6zM87.9 36.8h2v1.3h-2zM87.8 43.6h1.6v1.6h-1.6zM120.6 40.7h2v2.2h-2zM121.6 57h1.6v1.3h-1.6zM90.9 39.6h3.2v1.3h-3.2zM92.3 34.1h2v2.2h-2zM98.7 43.5h2.6v1.3h-2.6zM89 57.6h1.3v1.6h-1.3zM108.2 36.5h3.2v1.3h-3.2zM124.6 48.7h1.6v2.2h-1.6zM102.3 36.8h2.6v1.6h-2.6zM102.7 36.1h2v2.2h-2zM92.4 53.9h1.3v1.3h-1.3zM124.7 46.7h3.2v1.3h-3.2zM104.4 55.8h1.6v2.2h-1.6zM118.5 51.8h3.2v1.6h-3.2zM96.7 34.7h2v1.6h-2zM126.4 56.9h1.6v1.3h-1.6zM90.7 38.7h3.2v2.2h-3.2zM100.4 49.3h2.6v1.6h-2.6zM81.3 48.2h1.6v2.2h-1.6zM105.8 37.1h1.3v2.2h-1.3zM81.3 39.1h3.2v1.6h-3.2zM92.2 44.1h2v1.6h-2zM111.1 53.6h3.2v1.3h-3.2zM105 46.6h2.6v1.3h-2.6zM108.6 52.6h1.6v1.6h-1.6zM109.1 36.9h3.2v2.2h-3.2zM106.1 52.8h3.2v1.3h-3.2zM108.8 46.1h2v1.6h-2zM103.9 53.4h1.6v2.2h-1.6zM119.5 37.3h2.6v1.6h-2.6zM83.4 39.8h2v1.3h-2zM91.9 37.3h1.3v1.6h-1.3zM113.2 57.9h2.6v1.3h-2.6zM96.8 36.2h2v2.2h-2zM101.6 50.9h3.2v2.2h-3.2zM93.9 57.1h1.6v1.3h-1.6zM99.1 46.9h2.6v2.2h-2.6zM122.1 40.5h1.3v1.6h-1.3zM83.9 54.5h1.3v1.6h-1.3zM80.5 57.9h2v2.2h-2zM86.1 46.6h1.3v1.3h-1.3zM105 38.9h1.6v1.6h-1.6zM96.3 34.4h1.3v1.3h-1.3zM114.5 47.2h2.6v1.3h-2.6zM103.3 54h3.2v1.6h-3.2zM112.3 57.6h1.6v1.6h-1.6zM109.4 55.1h1.3v1.3h-1.3zM147 32.8h2v2.2h-2zM138.1 30.7h1.6v1.6h-1.6zM138.1 46.2h2v1.3h-2zM133 32.8h3.2v2.2h-3.2zM137.2 35.6h2v1.3h-2zM136 37.5h2v1.6h-2zM151.7 42h2v2.2h-2zM150.3 40.4h2.6v2.2h-2.6zM147.3 39.9h1.3v1.3h-1.3zM135.8 32.3h2.6v2.2h-2.6zM134.1 24.4h1.6v1.6h-1.6zM138.5 34.5h3.2v2.2h-3.2zM150 43.5h1.6v1.3h-1.6zM148.5 46.4h2.6v1.3h-2.6zM146.5 25.8h2v2.2h-2zM148.6 31h1.3v1.6h-1.3zM139.1 35.9h2.6v1.3h-2.6zM153.9 36.6h1.3v1.6h-1.3zM134.9 41.2h2v1.3h-2zM145.7 38.5h1.3v2.2h-1.3zM167.1 62.8h1.3v1.6h-1.3zM166.5 75.4h2v1.3h-2zM153.7 78h2v1.6h-2zM168.2 74.2h1.3v2.2h-1.3zM149.4 76.3h2v1.6h-2zM158.4 56.9h2.6v1.3h-2.6zM174.5 66.3h2.6v1.6h-2.6zM164.2 59.8h2.6v1.3h-2.6zM144.7 56.2h2.6v2.2h-2.6zM143.6 57h2v2.2h-2zM141.6 58.2h3.2v1.3h-3.2zM173.5 71.5h2.6v2.2h-2.6zM159 61.8h1.3v1.6h-1.3zM149.1 77.2h3.2v2.2h-3.2zM163.2 74.4h2v1.3h-2zM153.4 68.8h2v1.3h-2zM176.9 58.5h1.6v1.3h-1.6zM163.9 71.9h3.2v1.3h-3.2zM138.1 55.3h1.3v2.2h-1.3zM148.4 72.6h3.2v1.6h-3.2zM177.9 59.2h1.6v1.6h-1.6zM159.1 66.2h2.6v2.2h-2.6zM164 53.4h2.6v1.3h-2.6zM139.4 60.8h2.6v1.3h-2.6zM157.8 56.9h2.6v2.2h-2.6zM138.9 67.5h1.3v1.3h-1.3zM177.9 76.2h1.6v2.2h-1.6zM175.4 71.4h2.6v1.6h-2.6zM177.4 63.5h1.3v1.6h-1.3zM153.2 72h2.6v1.3h-2.6zM140 64.3h2.6v1.3h-2.6zM150.9 71.2h2.6v1.3h-2.6zM170.5 71.9h1.3v1.6h-1.3zM140.5 75.9h1.3v2.2h-1.3zM148.5 70.6h2v1.6h-2zM139 58.1h2.6v1.6h-2.6zM151.1 60.3h3.2v1.3h-3.2zM158.5 62.2h2.6v1.3h-2.6zM164 64.5h1.6v1.6h-1.6zM173.3 77.7h1.3v1.3h-1.3zM169.2 59.6h2v1.6h-2zM148.2 58.8h1.6v1.3h-1.6zM140.6 58.5h3.2v1.3h-3.2zM164 54.6h1.3v1.3h-1.3zM138.2 75h2.6v1.6h-2.6zM139.6 59.6h1.6v2.2h-1.6zM172.6 63.7h1.3v1.3h-1.3zM163.5 70.5h1.3v1.6h-1.3zM165.1 56.8h1.6v1.3h-1.6zM169.8 66.2h1.3v1.6h-1.3zM164.6 56h1.6v1.6h-1.6zM165.8 62.7h2v1.6h-2zM176.1 60.1h2v1.6h-2zM145.9 70.9h1.3v1.6h-1.3zM173.3 64h1.3v1.3h-1.3zM162.9 61.6h1.6v1.6h-1.6zM140.1 76.1h3.2v2.2h-3.2zM146.7 62.4h2.6v1.6h-2.6zM154.8 67.1h2v1.6h-2zM158.1 56.6h2.6v1.6h-2.6zM170.4 62.4h2v1.6h-2zM152.6 72.9h1.3v1.3h-1.3zM143.3 75h1.6v2.2h-1.6zM169.5 76.2h2v2.2h-2zM19.4 48.1h1.3v1.3h-1.3zM39.7 49.7h1.3v1.6h-1.3zM20.1 50.8h2v1.3h-2zM12.1 44.8h2v2.2h-2zM18.3 49.8h1.6v1.6h-1.6zM29.5 47.4h1.6v2.2h-1.6zM34.7 58.3h3.2v1.6h-3.2zM28.7 49.7h3.2v2.2h-3.2zM25.8 40.6h1.3v2.2h-1.3zM12.7 41.1h1.3v1.3h-1.3zM29.2 51.4h2.6v1.3h-2.6zM31.9 42.9h2.6v2.2h-2.6zM34.1 48.5h1.6v1.3h-1.6zM36.6 37.3h1.6v2.2h-1.6zM66.5 56.6h2.6v2.2h-2.6zM58.5 56.7h1.6v2.2h-1.6zM63.8 56.1h3.2v1.3h-3.2zM54.8 50.5h1.3v1.3h-1.3zM59.6 49.6h2v1.3h-2zM65.4 50h1.3v1.3h-1.3zM62.1 54.7h1.3v1.3h-1.3zM41.7 55.8h2v1.6h-2zM50.9 49.2h2v1.3h-2zM59 52.3h3.2v2.2h-3.2zM51.2 56h1.3v2.2h-1.3zM43.8 49h1.3v1.3h-1.3zM55.6 57.6h3.2v1.3h-3.2zM42.1 54.7h3.2v1.3h-3.2zM56.6 52.2h2.6v2.2h-2.6zM166.5 112.4h1.6v1.6h-1.6zM171.6 112.7h2.6v2.2h-2.6zM170.8 102.6h3.2v2.2h-3.2zM165 105.4h2.6v2.2h-2.6zM180.1 99.4h2v2.2h-2zM170.9 114h1.3v1.3h-1.3zM191.9 94.3h1.6v1.6h-1.6zM185.3 102h1.3v1.6h-1.3zM170 100.9h2.6v1.6h-2.6zM168.1 105.9h1.6v1.6h-1.6zM183.7 106.8h2v1.6h-2zM182.2 94.3h2.6v2.2h-2.6zM164.6 111.7h1.6v2.2h-1.6zM166.9 105.2h2.6v2.2h-2.6zM164.5 110.2h2v1.6h-2zM171.3 100.8h1.3v1.6h-1.3zM192.8 114.1h1.6v1.3h-1.6zM171.1 98.9h2.6v2.2h-2.6zM182.5 107.2h2v1.6h-2zM188.1 106.6h1.3v1.3h-1.3zM191.6 107.1h1.3v2.2h-1.3zM158.3 22.8h3.2v2.2h-3.2zM169.8 20.6h2.6v2.2h-2.6zM185.3 24.7h1.6v1.3h-1.6zM168.9 24.7h1.6v2.2h-1.6zM169.7 24h1.3v1.3h-1.3zM183.6 23.6h2v1.6h-2zM175.5 25.6h3.2v1.3h-3.2zM177.3 29.2h1.3v2.2h-1.3zM169.4 27.1h1.6v2.2h-1.6zM166.6 19.5h2v1.6h-2zM167.4 23.1h2v1.6h-2zM164.2 23.9h2v2.2h-2zM163.8 20.4h1.3v1.6h-1.3zM157.7 26.6h1.3v1.3h-1.3zM27 108.3h3.2v1.3h-3.2zM27 101.6h2.6v2.2h-2.6zM38 100.9h3.2v2.2h-3.2zM34.9 113h1.3v2.2h-1.3zM15.4 113.1h2v2.2h-2zM36.3 112.9h1.3v1.6h-1.3zM15.6 108.5h1.3v1.6h-1.3zM32 100.6h2.6v2.2h-2.6zM35.9 106.1h2.6v2.2h-2.6zM116.5 62.1h1.6v2.2h-1.6zM106.5 63h2v2.2h-2zM108.8 73.9h2v1.3h-2zM121.5 60.3h3.2v1.3h-3.2zM111.7 67.8h2.6v2.2h-2.6zM101.8 69.2h2.6v1.6h-2.6zM104.9 80h2.6v1.6h-2.6zM123.5 74.2h1.3v2.2h-1.3zM121.8 60.4h2v2.2h-2zM112.9 82.2h2.6v2.2h-2.6zM123.1 65.9h1.3v1.6h-1.3zM58 51.9h1.4v1.4h-1.4zM119.5 92.9h1.4v1.4h-1.4zM176.6 12.4h1.4v1.4h-1.4zM166.3 92.4h1.4v1.4h-1.4zM172.8 67.5h1.4v1.4h-1.4zM60 96.5h1.4v1.4h-1.4zM161.3 79.2h1.4v1.4h-1.4zM181.6 44.1h1.4v1.4h-1.4zM24.2 65.6h1.4v1.4h-1.4zM159.5 28.8h1.4v1.4h-1.4zM150.5 104.9h1.4v1.4h-1.4zM52.5 71.1h1.4v1.4h-1.4zM136.8 56.4h1.4v1.4h-1.4zM47.3 34.5h1.4v1.4h-1.4zM150.7 90.3h1.4v1.4h-1.4zM95.3 17.1h1.4v1.4h-1.4zM161.2 88.3h1.4v1.4h-1.4zM52.2 68.3h1.4v1.4h-1.4zM178.4 100h1.4v1.4h-1.4zM107.2 57.6h1.4v1.4h-1.4zM120 27.7h1.4v1.4h-1.4zM44.5 26.8h1.4v1.4h-1.4zM141.2 45.7h1.4v1.4h-1.4zM115.2 49.9h1.4v1.4h-1.4zM106.3 23.5h1.4v1.4h-1.4zM16.5 111.7h1.4v1.4h-1.4zM79.1 19h1.4v1.4h-1.4zM128.2 89.9h1.4v1.4h-1.4zM37.7 70.1h1.4v1.4h-1.4zM73.5 62h1.4v1.4h-1.4zM11.9 11.5h1.4v1.4h-1.4zM196.2 98.1h1.4v1.4h-1.4zM100.4 67h1.4v1.4h-1.4zM57.7 89h1.4v1.4h-1.4zM88.9 106.4h1.4v1.4h-1.4zM153.8 93.2h1.4v1.4h-1.4zM191.1 34.4h1.4v1.4h-1.4zM15.2 28.9h1.4v1.4h-1.4zM42.3 16.7h1.4v1.4h-1.4zM17.7 66h1.4v1.4h-1.4zM173.4 55.7h1.4v1.4h-1.4zM188 102.6h1.4v1.4h-1.4zM20.2 70.2h1.4v1.4h-1.4zM83.5 20.5h1.4v1.4h-1.4zM190.3 34.7h1.4v1.4h-1.4zM115.3 74.6h1.4v1.4h-1.4zM189.7 77.7h1.4v1.4h-1.4zM82.7 54.6h1.4v1.4h-1.4zM38.3 108.4h1.4v1.4h-1.4zM196.4 31.1h1.4v1.4h-1.4zM15.3 34.6h1.4v1.4h-1.4zM74.9 101.9h1.4v1.4h-1.4zM179.9 95.1h1.4v1.4h-1.4zM16.9 89.8h1.4v1.4h-1.4zM142.8 75.3h1.4v1.4h-1.4zM195.2 13.8h1.4v1.4h-1.4zM35.5 86.5h1.4v1.4h-1.4zM186.5 78.4h1.4v1.4h-1.4zM64.8 69.5h1.4v1.4h-1.4zM152 19h1.4v1.4h-1.4zM69.5 34.7h1.4v1.4h-1.4zM31.6 58.1h1.4v1.4h-1.4zM40 32.8h1.4v1.4h-1.4zM35.2 78.5h1.4v1.4h-1.4zM10.4 82.6h1.4v1.4h-1.4zM45.1 11.7h1.4v1.4h-1.4zM184.3 30.9h1.4v1.4h-1.4zM185.5 98.1h1.4v1.4h-1.4zM176.9 22.5h1.4v1.4h-1.4zM93 18.1h1.4v1.4h-1.4zM167 31h5v6h-5zM38 26h5v6h-5z" fill="#f5b800"/><path d="M95.2 37.6h4v2.5h-4zM82.8 38.9h6v3.5h-6zM106.6 56.9h4v3.5h-4zM115.6 41.2h4v3.5h-4zM105.5 46.1h4v2.5h-4zM119.5 45.5h4v2.5h-4zM98.9 56.7h4v2.5h-4zM118.8 57.5h6v2.5h-6zM122.2 37.7h6v2.5h-6zM121.6 37.9h4v2.5h-4zM153.7 27.4h4v2.5h-4zM134.9 36.1h6v3.5h-6zM134.3 30.2h4v3.5h-4zM144.4 76.7h6v3.5h-6zM149.3 58.6h6v3.5h-6zM166.6 77h6v2.5h-6zM145.3 72.9h4v2.5h-4zM141.9 65h6v2.5h-6zM147.4 62.8h4v2.5h-4zM142.9 58.4h4v2.5h-4zM173.4 73.9h6v2.5h-6zM163.5 54.1h4v2.5h-4zM168.1 75.3h4v2.5h-4zM172.3 77.9h4v2.5h-4zM37.1 53.1h4v2.5h-4zM15.7 42h4v2.5h-4zM16.2 39.1h6v3.5h-6zM26.5 51.1h6v2.5h-6zM26.2 38.4h6v2.5h-6zM39.9 50.2h4v2.5h-4zM52.3 51.6h6v2.5h-6zM48.7 49.9h4v3.5h-4zM46.9 50.9h6v2.5h-6zM170.7 99.7h4v2.5h-4zM185 114.4h6v2.5h-6zM184.1 103.5h6v2.5h-6zM184.3 105.5h4v2.5h-4zM171.3 97h4v3.5h-4zM178.9 113.5h6v2.5h-6zM190.5 106.5h6v2.5h-6zM192.9 109.5h6v3.5h-6zM186.7 97.3h6v3.5h-6zM174.3 27.4h6v2.5h-6zM26.3 102.2h4v2.5h-4zM16.2 109.5h4v2.5h-4zM100.5 60.1h4v2.5h-4zM117.1 71.3h4v3.5h-4z" fill="none" stroke="#f5b800" stroke-width="0.9"/><path d="M107.1 43.5h1.5v3h-1.5zM81.8 50h4v2h-4zM114.7 43.5h2.5v1.2h-2.5zM122.3 52.7h4v2h-4zM97.7 49.2h4v2h-4zM92.2 50.6h2.5v3h-2.5zM122.8 52.8h2.5v1.2h-2.5zM115.2 37.3h1.5v1.2h-1.5zM91.7 40.6h4v2h-4zM106.4 52.2h2.5v2h-2.5zM104.6 55h4v1.2h-4zM84 40.5h1.5v2h-1.5zM115.5 53.7h4v2h-4zM95.4 40.7h1.5v2h-1.5zM92.3 38.3h4v2h-4zM123.9 36.6h2.5v3h-2.5zM126.5 57.6h1.5v1.2h-1.5zM142.4 30.1h4v2h-4zM146.2 25.9h1.5v3h-1.5zM147.7 35.6h4v3h-4zM150.5 42.5h4v3h-4zM143.1 39.7h4v3h-4zM133.4 34.6h2.5v2h-2.5zM141.1 45.1h1.5v3h-1.5zM152.6 64.9h2.5v1.2h-2.5zM138.1 71.5h1.5v1.2h-1.5zM170.5 68.4h4v3h-4zM146.1 54.1h2.5v2h-2.5zM162.6 55.6h2.5v1.2h-2.5zM146.8 75.6h2.5v2h-2.5zM143.1 63.1h2.5v3h-2.5zM157.6 53.9h4v2h-4zM158.9 69.7h4v3h-4zM142 59.8h1.5v2h-1.5zM148.3 69.4h1.5v2h-1.5zM138.3 59.6h1.5v1.2h-1.5zM157.8 57.2h1.5v1.2h-1.5zM156.6 58.9h1.5v3h-1.5zM140.3 67.5h1.5v1.2h-1.5zM153.7 75.4h4v1.2h-4zM141.2 62.9h4v1.2h-4zM151.6 59.1h4v1.2h-4zM138.2 71.6h4v1.2h-4zM169.6 75.8h1.5v2h-1.5zM147.4 59.3h1.5v2h-1.5zM176.9 67.2h2.5v3h-2.5zM151.6 53.1h1.5v3h-1.5zM167.3 75.8h2.5v2h-2.5zM154.7 74.5h2.5v3h-2.5zM174.1 63h2.5v3h-2.5zM160.1 68.7h1.5v3h-1.5zM149.3 65.6h1.5v2h-1.5zM157.6 72.9h1.5v2h-1.5zM143.1 76.5h2.5v2h-2.5zM171 56.2h1.5v3h-1.5zM154.2 74h1.5v3h-1.5zM153.6 63.8h2.5v3h-2.5zM147.4 71.9h2.5v1.2h-2.5zM168.2 56.1h2.5v2h-2.5zM16 48h1.5v3h-1.5zM17.1 40.5h4v2h-4zM37.1 40.7h1.5v3h-1.5zM13.4 55.9h2.5v3h-2.5zM26.6 52.2h2.5v3h-2.5zM29.6 45.7h2.5v2h-2.5zM18.4 50.5h2.5v3h-2.5zM19.1 51.1h4v3h-4zM22.5 46.6h1.5v3h-1.5zM30.4 40.9h2.5v1.2h-2.5zM30 39.7h4v2h-4zM44.7 50.4h1.5v2h-1.5zM48.2 51.2h4v3h-4zM56.4 50.5h4v1.2h-4zM61.9 56.4h1.5v3h-1.5zM40 56.6h4v1.2h-4zM54.9 55.4h4v2h-4zM171.8 109.4h4v1.2h-4zM184.7 95.6h2.5v2h-2.5zM173.5 92.2h1.5v1.2h-1.5zM185.5 102.5h1.5v2h-1.5zM170.5 109.1h4v1.2h-4zM191 93.6h1.5v2h-1.5zM182.6 108.6h1.5v2h-1.5zM183.3 111.1h2.5v2h-2.5zM183.7 103.1h2.5v2h-2.5zM165.7 111h1.5v3h-1.5zM155.7 20.8h2.5v1.2h-2.5zM165 23h1.5v1.2h-1.5zM169 24.3h1.5v2h-1.5zM32.8 114.1h2.5v2h-2.5zM123.2 77.8h4v1.2h-4zM120.3 63.6h2.5v3h-2.5zM129.2 77.6h2.5v3h-2.5z" fill="#300000"/><path d="M24.9 12.8a2.7 2.7 0 1 0 5.4 0a2.7 2.7 0 1 0 -5.4 0zM10.1 31.3a2.7 2.7 0 1 0 5.4 0a2.7 2.7 0 1 0 -5.4 0zM27.7 97a2.7 2.7 0 1 0 5.4 0a2.7 2.7 0 1 0 -5.4 0zM22.1 116a2.7 2.7 0 1 0 5.4 0a2.7 2.7 0 1 0 -5.4 0zM8.3 88.7a2.7 2.7 0 1 0 5.4 0a2.7 2.7 0 1 0 -5.4 0zM175.3 22a2.7 2.7 0 1 0 5.4 0a2.7 2.7 0 1 0 -5.4 0zM189.3 41a2.7 2.7 0 1 0 5.4 0a2.7 2.7 0 1 0 -5.4 0zM192.3 97.6a2.7 2.7 0 1 0 5.4 0a2.7 2.7 0 1 0 -5.4 0zM193.3 12a2.7 2.7 0 1 0 5.4 0a2.7 2.7 0 1 0 -5.4 0zM135.3 117a2.7 2.7 0 1 0 5.4 0a2.7 2.7 0 1 0 -5.4 0zM157.3 111a2.7 2.7 0 1 0 5.4 0a2.7 2.7 0 1 0 -5.4 0zM67.3 13a2.7 2.7 0 1 0 5.4 0a2.7 2.7 0 1 0 -5.4 0zM59.3 80a2.7 2.7 0 1 0 5.4 0a2.7 2.7 0 1 0 -5.4 0zM109.3 40a2.7 2.7 0 1 0 5.4 0a2.7 2.7 0 1 0 -5.4 0zM147.3 88a2.7 2.7 0 1 0 5.4 0a2.7 2.7 0 1 0 -5.4 0zM37.3 106a2.7 2.7 0 1 0 5.4 0a2.7 2.7 0 1 0 -5.4 0zM88.3 82a2.7 2.7 0 1 0 5.4 0a2.7 2.7 0 1 0 -5.4 0z" fill="#f5b800"/><path d="M26.4 12.8a1.2 1.2 0 1 0 2.4 0a1.2 1.2 0 1 0 -2.4 0zM11.6 31.3a1.2 1.2 0 1 0 2.4 0a1.2 1.2 0 1 0 -2.4 0zM29.2 97a1.2 1.2 0 1 0 2.4 0a1.2 1.2 0 1 0 -2.4 0zM23.6 116a1.2 1.2 0 1 0 2.4 0a1.2 1.2 0 1 0 -2.4 0zM9.8 88.7a1.2 1.2 0 1 0 2.4 0a1.2 1.2 0 1 0 -2.4 0zM176.8 22a1.2 1.2 0 1 0 2.4 0a1.2 1.2 0 1 0 -2.4 0zM190.8 41a1.2 1.2 0 1 0 2.4 0a1.2 1.2 0 1 0 -2.4 0zM193.8 97.6a1.2 1.2 0 1 0 2.4 0a1.2 1.2 0 1 0 -2.4 0zM194.8 12a1.2 1.2 0 1 0 2.4 0a1.2 1.2 0 1 0 -2.4 0zM136.8 117a1.2 1.2 0 1 0 2.4 0a1.2 1.2 0 1 0 -2.4 0zM158.8 111a1.2 1.2 0 1 0 2.4 0a1.2 1.2 0 1 0 -2.4 0zM68.8 13a1.2 1.2 0 1 0 2.4 0a1.2 1.2 0 1 0 -2.4 0zM60.8 80a1.2 1.2 0 1 0 2.4 0a1.2 1.2 0 1 0 -2.4 0zM110.8 40a1.2 1.2 0 1 0 2.4 0a1.2 1.2 0 1 0 -2.4 0zM148.8 88a1.2 1.2 0 1 0 2.4 0a1.2 1.2 0 1 0 -2.4 0zM38.8 106a1.2 1.2 0 1 0 2.4 0a1.2 1.2 0 1 0 -2.4 0zM89.8 82a1.2 1.2 0 1 0 2.4 0a1.2 1.2 0 1 0 -2.4 0z" fill="#d08a00"/><path d="M21.6 65.5a2.3 2.3 0 1 0 4.6 0a2.3 2.3 0 1 0 -4.6 0zM25.3 23.9a2.3 2.3 0 1 0 4.6 0a2.3 2.3 0 1 0 -4.6 0zM176.7 25a2.3 2.3 0 1 0 4.6 0a2.3 2.3 0 1 0 -4.6 0zM179.7 67a2.3 2.3 0 1 0 4.6 0a2.3 2.3 0 1 0 -4.6 0zM97.7 30a2.3 2.3 0 1 0 4.6 0a2.3 2.3 0 1 0 -4.6 0zM57.7 100a2.3 2.3 0 1 0 4.6 0a2.3 2.3 0 1 0 -4.6 0zM163.7 40a2.3 2.3 0 1 0 4.6 0a2.3 2.3 0 1 0 -4.6 0z" fill="#00b400"/><path d="M194 105a2 2 0 1 0 4 0a2 2 0 1 0 -4 0zM176 38a2 2 0 1 0 4 0a2 2 0 1 0 -4 0zM6 18a2 2 0 1 0 4 0a2 2 0 1 0 -4 0z" fill="#000"/></g><g transform="translate(589,474.5) rotate(180)"><rect x="0" y="0" width="206" height="120" fill="#ff0000" stroke="#f4f4f4" stroke-width="1.1"/><path d="M14 5.8H190Q201 5.8 201 16V106M5.5 84V16Q5.5 5.8 16 5.8" fill="none" stroke="#a05a10" stroke-width="2"/><path d="M21 94V117M185 20V115" fill="none" stroke="#8a4a00" stroke-width="1"/><rect x="44" y="12.5" width="118" height="8" fill="#00b400"/><rect x="31" y="116" width="141" height="3.6" fill="#00b400"/><path d="M5.5 82V94H24V86H9V82Z" fill="#00b400"/><path d="M197.6 83H200.5V94.4H192V88.6H197.6Z" fill="#00b400"/><path d="M21 37L41.5 36L47 27.6H118" fill="none" stroke="#3c0000" stroke-width="4.4" stroke-linejoin="round"/><path d="M21 37L41.5 36L47 27.6H118" fill="none" stroke="#ff0000" stroke-width="2.2" stroke-linejoin="round"/><path d="M76 28H128L133 33V78L166 113" fill="none" stroke="#3c0000" stroke-width="4.4" stroke-linejoin="round"/><path d="M76 28H128L133 33V78L166 113" fill="none" stroke="#ff0000" stroke-width="2.2" stroke-linejoin="round"/><path d="M48.5 43V84" fill="none" stroke="#3c0000" stroke-width="5.2" stroke-linejoin="round"/><path d="M48.5 43V84" fill="none" stroke="#ff0000" stroke-width="2" stroke-linejoin="round"/><path d="M44 50L48.5 43M48.5 84L44 92" fill="none" stroke="#3c0000" stroke-width="4.0" stroke-linejoin="round"/><path d="M44 50L48.5 43M48.5 84L44 92" fill="none" stroke="#ff0000" stroke-width="1.6" stroke-linejoin="round"/><path d="M68 47L93 32M74 49L99 34" fill="none" stroke="#3c0000" stroke-width="3.4000000000000004" stroke-linejoin="round"/><path d="M68 47L93 32M74 49L99 34" fill="none" stroke="#ff0000" stroke-width="1.6" stroke-linejoin="round"/><path d="M58 67.5H75Q78 70.5 75 73.5H58Q55 70.5 58 67.5Z" fill="none" stroke="#3c0000" stroke-width="2.8" stroke-linejoin="round"/><path d="M58 67.5H75Q78 70.5 75 73.5H58Q55 70.5 58 67.5Z" fill="none" stroke="#ff0000" stroke-width="1.4" stroke-linejoin="round"/><path d="M170 109H150L140 100" fill="none" stroke="#3c0000" stroke-width="3.4000000000000004" stroke-linejoin="round"/><path d="M170 109H150L140 100" fill="none" stroke="#ff0000" stroke-width="1.6" stroke-linejoin="round"/><path d="M52.6 43V108" fill="none" stroke="#3c0000" stroke-width="1.4"/><path d="M145 35V62" fill="none" stroke="#3c0000" stroke-width="1.4"/><path d="M118 64V80" fill="none" stroke="#3c0000" stroke-width="1.4"/><path d="M96 70H128" fill="none" stroke="#3c0000" stroke-width="1.4"/><path d="M176 45V100" fill="none" stroke="#3c0000" stroke-width="1.4"/><rect x="53.5" y="33" width="3.8" height="10.5" fill="#1a0000"/><path d="M84 96H96V89H137V108H84Z" fill="none" stroke="#c87800" stroke-width="1.6"/><rect x="98" y="95" width="9" height="4.5" fill="#000"/><rect x="124" y="92" width="12" height="15" fill="#f5b800"/><rect x="126" y="94" width="3" height="3" fill="#c89000"/><path d="M87 103Q92 99 100 102T113 102" fill="none" stroke="#f5b800" stroke-width="1.2"/><path d="M97.2 35.4h1.3v1.3h-1.3zM100.4 35.7h2.6v1.3h-2.6zM118.9 37h3.2v1.3h-3.2zM120.3 41h1.3v2.2h-1.3zM94.5 53.6h3.2v2.2h-3.2zM110 42.9h1.3v2.2h-1.3zM101.9 56.2h1.6v1.3h-1.6zM112.9 39.9h3.2v1.6h-3.2zM121.1 51.5h1.3v1.3h-1.3zM104.1 38h2.6v1.6h-2.6zM96 42.4h2.6v1.3h-2.6zM119.5 56.7h1.3v1.3h-1.3zM114.4 41.4h2.6v1.6h-2.6zM113.7 55.3h2.6v1.6h-2.6zM87.9 36.8h2v1.3h-2zM87.8 43.6h1.6v1.6h-1.6zM120.6 40.7h2v2.2h-2zM121.6 57h1.6v1.3h-1.6zM90.9 39.6h3.2v1.3h-3.2zM92.3 34.1h2v2.2h-2zM98.7 43.5h2.6v1.3h-2.6zM89 57.6h1.3v1.6h-1.3zM108.2 36.5h3.2v1.3h-3.2zM124.6 48.7h1.6v2.2h-1.6zM102.3 36.8h2.6v1.6h-2.6zM102.7 36.1h2v2.2h-2zM92.4 53.9h1.3v1.3h-1.3zM124.7 46.7h3.2v1.3h-3.2zM104.4 55.8h1.6v2.2h-1.6zM118.5 51.8h3.2v1.6h-3.2zM96.7 34.7h2v1.6h-2zM126.4 56.9h1.6v1.3h-1.6zM90.7 38.7h3.2v2.2h-3.2zM100.4 49.3h2.6v1.6h-2.6zM81.3 48.2h1.6v2.2h-1.6zM105.8 37.1h1.3v2.2h-1.3zM81.3 39.1h3.2v1.6h-3.2zM92.2 44.1h2v1.6h-2zM111.1 53.6h3.2v1.3h-3.2zM105 46.6h2.6v1.3h-2.6zM108.6 52.6h1.6v1.6h-1.6zM109.1 36.9h3.2v2.2h-3.2zM106.1 52.8h3.2v1.3h-3.2zM108.8 46.1h2v1.6h-2zM103.9 53.4h1.6v2.2h-1.6zM119.5 37.3h2.6v1.6h-2.6zM83.4 39.8h2v1.3h-2zM91.9 37.3h1.3v1.6h-1.3zM113.2 57.9h2.6v1.3h-2.6zM96.8 36.2h2v2.2h-2zM101.6 50.9h3.2v2.2h-3.2zM93.9 57.1h1.6v1.3h-1.6zM99.1 46.9h2.6v2.2h-2.6zM122.1 40.5h1.3v1.6h-1.3zM83.9 54.5h1.3v1.6h-1.3zM80.5 57.9h2v2.2h-2zM86.1 46.6h1.3v1.3h-1.3zM105 38.9h1.6v1.6h-1.6zM96.3 34.4h1.3v1.3h-1.3zM114.5 47.2h2.6v1.3h-2.6zM103.3 54h3.2v1.6h-3.2zM112.3 57.6h1.6v1.6h-1.6zM109.4 55.1h1.3v1.3h-1.3zM147 32.8h2v2.2h-2zM138.1 30.7h1.6v1.6h-1.6zM138.1 46.2h2v1.3h-2zM133 32.8h3.2v2.2h-3.2zM137.2 35.6h2v1.3h-2zM136 37.5h2v1.6h-2zM151.7 42h2v2.2h-2zM150.3 40.4h2.6v2.2h-2.6zM147.3 39.9h1.3v1.3h-1.3zM135.8 32.3h2.6v2.2h-2.6zM134.1 24.4h1.6v1.6h-1.6zM138.5 34.5h3.2v2.2h-3.2zM150 43.5h1.6v1.3h-1.6zM148.5 46.4h2.6v1.3h-2.6zM146.5 25.8h2v2.2h-2zM148.6 31h1.3v1.6h-1.3zM139.1 35.9h2.6v1.3h-2.6zM153.9 36.6h1.3v1.6h-1.3zM134.9 41.2h2v1.3h-2zM145.7 38.5h1.3v2.2h-1.3zM167.1 62.8h1.3v1.6h-1.3zM166.5 75.4h2v1.3h-2zM153.7 78h2v1.6h-2zM168.2 74.2h1.3v2.2h-1.3zM149.4 76.3h2v1.6h-2zM158.4 56.9h2.6v1.3h-2.6zM174.5 66.3h2.6v1.6h-2.6zM164.2 59.8h2.6v1.3h-2.6zM144.7 56.2h2.6v2.2h-2.6zM143.6 57h2v2.2h-2zM141.6 58.2h3.2v1.3h-3.2zM173.5 71.5h2.6v2.2h-2.6zM159 61.8h1.3v1.6h-1.3zM149.1 77.2h3.2v2.2h-3.2zM163.2 74.4h2v1.3h-2zM153.4 68.8h2v1.3h-2zM176.9 58.5h1.6v1.3h-1.6zM163.9 71.9h3.2v1.3h-3.2zM138.1 55.3h1.3v2.2h-1.3zM148.4 72.6h3.2v1.6h-3.2zM177.9 59.2h1.6v1.6h-1.6zM159.1 66.2h2.6v2.2h-2.6zM164 53.4h2.6v1.3h-2.6zM139.4 60.8h2.6v1.3h-2.6zM157.8 56.9h2.6v2.2h-2.6zM138.9 67.5h1.3v1.3h-1.3zM177.9 76.2h1.6v2.2h-1.6zM175.4 71.4h2.6v1.6h-2.6zM177.4 63.5h1.3v1.6h-1.3zM153.2 72h2.6v1.3h-2.6zM140 64.3h2.6v1.3h-2.6zM150.9 71.2h2.6v1.3h-2.6zM170.5 71.9h1.3v1.6h-1.3zM140.5 75.9h1.3v2.2h-1.3zM148.5 70.6h2v1.6h-2zM139 58.1h2.6v1.6h-2.6zM151.1 60.3h3.2v1.3h-3.2zM158.5 62.2h2.6v1.3h-2.6zM164 64.5h1.6v1.6h-1.6zM173.3 77.7h1.3v1.3h-1.3zM169.2 59.6h2v1.6h-2zM148.2 58.8h1.6v1.3h-1.6zM140.6 58.5h3.2v1.3h-3.2zM164 54.6h1.3v1.3h-1.3zM138.2 75h2.6v1.6h-2.6zM139.6 59.6h1.6v2.2h-1.6zM172.6 63.7h1.3v1.3h-1.3zM163.5 70.5h1.3v1.6h-1.3zM165.1 56.8h1.6v1.3h-1.6zM169.8 66.2h1.3v1.6h-1.3zM164.6 56h1.6v1.6h-1.6zM165.8 62.7h2v1.6h-2zM176.1 60.1h2v1.6h-2zM145.9 70.9h1.3v1.6h-1.3zM173.3 64h1.3v1.3h-1.3zM162.9 61.6h1.6v1.6h-1.6zM140.1 76.1h3.2v2.2h-3.2zM146.7 62.4h2.6v1.6h-2.6zM154.8 67.1h2v1.6h-2zM158.1 56.6h2.6v1.6h-2.6zM170.4 62.4h2v1.6h-2zM152.6 72.9h1.3v1.3h-1.3zM143.3 75h1.6v2.2h-1.6zM169.5 76.2h2v2.2h-2zM19.4 48.1h1.3v1.3h-1.3zM39.7 49.7h1.3v1.6h-1.3zM20.1 50.8h2v1.3h-2zM12.1 44.8h2v2.2h-2zM18.3 49.8h1.6v1.6h-1.6zM29.5 47.4h1.6v2.2h-1.6zM34.7 58.3h3.2v1.6h-3.2zM28.7 49.7h3.2v2.2h-3.2zM25.8 40.6h1.3v2.2h-1.3zM12.7 41.1h1.3v1.3h-1.3zM29.2 51.4h2.6v1.3h-2.6zM31.9 42.9h2.6v2.2h-2.6zM34.1 48.5h1.6v1.3h-1.6zM36.6 37.3h1.6v2.2h-1.6zM66.5 56.6h2.6v2.2h-2.6zM58.5 56.7h1.6v2.2h-1.6zM63.8 56.1h3.2v1.3h-3.2zM54.8 50.5h1.3v1.3h-1.3zM59.6 49.6h2v1.3h-2zM65.4 50h1.3v1.3h-1.3zM62.1 54.7h1.3v1.3h-1.3zM41.7 55.8h2v1.6h-2zM50.9 49.2h2v1.3h-2zM59 52.3h3.2v2.2h-3.2zM51.2 56h1.3v2.2h-1.3zM43.8 49h1.3v1.3h-1.3zM55.6 57.6h3.2v1.3h-3.2zM42.1 54.7h3.2v1.3h-3.2zM56.6 52.2h2.6v2.2h-2.6zM166.5 112.4h1.6v1.6h-1.6zM171.6 112.7h2.6v2.2h-2.6zM170.8 102.6h3.2v2.2h-3.2zM165 105.4h2.6v2.2h-2.6zM180.1 99.4h2v2.2h-2zM170.9 114h1.3v1.3h-1.3zM191.9 94.3h1.6v1.6h-1.6zM185.3 102h1.3v1.6h-1.3zM170 100.9h2.6v1.6h-2.6zM168.1 105.9h1.6v1.6h-1.6zM183.7 106.8h2v1.6h-2zM182.2 94.3h2.6v2.2h-2.6zM164.6 111.7h1.6v2.2h-1.6zM166.9 105.2h2.6v2.2h-2.6zM164.5 110.2h2v1.6h-2zM171.3 100.8h1.3v1.6h-1.3zM192.8 114.1h1.6v1.3h-1.6zM171.1 98.9h2.6v2.2h-2.6zM182.5 107.2h2v1.6h-2zM188.1 106.6h1.3v1.3h-1.3zM191.6 107.1h1.3v2.2h-1.3zM158.3 22.8h3.2v2.2h-3.2zM169.8 20.6h2.6v2.2h-2.6zM185.3 24.7h1.6v1.3h-1.6zM168.9 24.7h1.6v2.2h-1.6zM169.7 24h1.3v1.3h-1.3zM183.6 23.6h2v1.6h-2zM175.5 25.6h3.2v1.3h-3.2zM177.3 29.2h1.3v2.2h-1.3zM169.4 27.1h1.6v2.2h-1.6zM166.6 19.5h2v1.6h-2zM167.4 23.1h2v1.6h-2zM164.2 23.9h2v2.2h-2zM163.8 20.4h1.3v1.6h-1.3zM157.7 26.6h1.3v1.3h-1.3zM27 108.3h3.2v1.3h-3.2zM27 101.6h2.6v2.2h-2.6zM38 100.9h3.2v2.2h-3.2zM34.9 113h1.3v2.2h-1.3zM15.4 113.1h2v2.2h-2zM36.3 112.9h1.3v1.6h-1.3zM15.6 108.5h1.3v1.6h-1.3zM32 100.6h2.6v2.2h-2.6zM35.9 106.1h2.6v2.2h-2.6zM116.5 62.1h1.6v2.2h-1.6zM106.5 63h2v2.2h-2zM108.8 73.9h2v1.3h-2zM121.5 60.3h3.2v1.3h-3.2zM111.7 67.8h2.6v2.2h-2.6zM101.8 69.2h2.6v1.6h-2.6zM104.9 80h2.6v1.6h-2.6zM123.5 74.2h1.3v2.2h-1.3zM121.8 60.4h2v2.2h-2zM112.9 82.2h2.6v2.2h-2.6zM123.1 65.9h1.3v1.6h-1.3zM58 51.9h1.4v1.4h-1.4zM119.5 92.9h1.4v1.4h-1.4zM176.6 12.4h1.4v1.4h-1.4zM166.3 92.4h1.4v1.4h-1.4zM172.8 67.5h1.4v1.4h-1.4zM60 96.5h1.4v1.4h-1.4zM161.3 79.2h1.4v1.4h-1.4zM181.6 44.1h1.4v1.4h-1.4zM24.2 65.6h1.4v1.4h-1.4zM159.5 28.8h1.4v1.4h-1.4zM150.5 104.9h1.4v1.4h-1.4zM52.5 71.1h1.4v1.4h-1.4zM136.8 56.4h1.4v1.4h-1.4zM47.3 34.5h1.4v1.4h-1.4zM150.7 90.3h1.4v1.4h-1.4zM95.3 17.1h1.4v1.4h-1.4zM161.2 88.3h1.4v1.4h-1.4zM52.2 68.3h1.4v1.4h-1.4zM178.4 100h1.4v1.4h-1.4zM107.2 57.6h1.4v1.4h-1.4zM120 27.7h1.4v1.4h-1.4zM44.5 26.8h1.4v1.4h-1.4zM141.2 45.7h1.4v1.4h-1.4zM115.2 49.9h1.4v1.4h-1.4zM106.3 23.5h1.4v1.4h-1.4zM16.5 111.7h1.4v1.4h-1.4zM79.1 19h1.4v1.4h-1.4zM128.2 89.9h1.4v1.4h-1.4zM37.7 70.1h1.4v1.4h-1.4zM73.5 62h1.4v1.4h-1.4zM11.9 11.5h1.4v1.4h-1.4zM196.2 98.1h1.4v1.4h-1.4zM100.4 67h1.4v1.4h-1.4zM57.7 89h1.4v1.4h-1.4zM88.9 106.4h1.4v1.4h-1.4zM153.8 93.2h1.4v1.4h-1.4zM191.1 34.4h1.4v1.4h-1.4zM15.2 28.9h1.4v1.4h-1.4zM42.3 16.7h1.4v1.4h-1.4zM17.7 66h1.4v1.4h-1.4zM173.4 55.7h1.4v1.4h-1.4zM188 102.6h1.4v1.4h-1.4zM20.2 70.2h1.4v1.4h-1.4zM83.5 20.5h1.4v1.4h-1.4zM190.3 34.7h1.4v1.4h-1.4zM115.3 74.6h1.4v1.4h-1.4zM189.7 77.7h1.4v1.4h-1.4zM82.7 54.6h1.4v1.4h-1.4zM38.3 108.4h1.4v1.4h-1.4zM196.4 31.1h1.4v1.4h-1.4zM15.3 34.6h1.4v1.4h-1.4zM74.9 101.9h1.4v1.4h-1.4zM179.9 95.1h1.4v1.4h-1.4zM16.9 89.8h1.4v1.4h-1.4zM142.8 75.3h1.4v1.4h-1.4zM195.2 13.8h1.4v1.4h-1.4zM35.5 86.5h1.4v1.4h-1.4zM186.5 78.4h1.4v1.4h-1.4zM64.8 69.5h1.4v1.4h-1.4zM152 19h1.4v1.4h-1.4zM69.5 34.7h1.4v1.4h-1.4zM31.6 58.1h1.4v1.4h-1.4zM40 32.8h1.4v1.4h-1.4zM35.2 78.5h1.4v1.4h-1.4zM10.4 82.6h1.4v1.4h-1.4zM45.1 11.7h1.4v1.4h-1.4zM184.3 30.9h1.4v1.4h-1.4zM185.5 98.1h1.4v1.4h-1.4zM176.9 22.5h1.4v1.4h-1.4zM93 18.1h1.4v1.4h-1.4zM167 31h5v6h-5zM38 26h5v6h-5z" fill="#f5b800"/><path d="M95.2 37.6h4v2.5h-4zM82.8 38.9h6v3.5h-6zM106.6 56.9h4v3.5h-4zM115.6 41.2h4v3.5h-4zM105.5 46.1h4v2.5h-4zM119.5 45.5h4v2.5h-4zM98.9 56.7h4v2.5h-4zM118.8 57.5h6v2.5h-6zM122.2 37.7h6v2.5h-6zM121.6 37.9h4v2.5h-4zM153.7 27.4h4v2.5h-4zM134.9 36.1h6v3.5h-6zM134.3 30.2h4v3.5h-4zM144.4 76.7h6v3.5h-6zM149.3 58.6h6v3.5h-6zM166.6 77h6v2.5h-6zM145.3 72.9h4v2.5h-4zM141.9 65h6v2.5h-6zM147.4 62.8h4v2.5h-4zM142.9 58.4h4v2.5h-4zM173.4 73.9h6v2.5h-6zM163.5 54.1h4v2.5h-4zM168.1 75.3h4v2.5h-4zM172.3 77.9h4v2.5h-4zM37.1 53.1h4v2.5h-4zM15.7 42h4v2.5h-4zM16.2 39.1h6v3.5h-6zM26.5 51.1h6v2.5h-6zM26.2 38.4h6v2.5h-6zM39.9 50.2h4v2.5h-4zM52.3 51.6h6v2.5h-6zM48.7 49.9h4v3.5h-4zM46.9 50.9h6v2.5h-6zM170.7 99.7h4v2.5h-4zM185 114.4h6v2.5h-6zM184.1 103.5h6v2.5h-6zM184.3 105.5h4v2.5h-4zM171.3 97h4v3.5h-4zM178.9 113.5h6v2.5h-6zM190.5 106.5h6v2.5h-6zM192.9 109.5h6v3.5h-6zM186.7 97.3h6v3.5h-6zM174.3 27.4h6v2.5h-6zM26.3 102.2h4v2.5h-4zM16.2 109.5h4v2.5h-4zM100.5 60.1h4v2.5h-4zM117.1 71.3h4v3.5h-4z" fill="none" stroke="#f5b800" stroke-width="0.9"/><path d="M107.1 43.5h1.5v3h-1.5zM81.8 50h4v2h-4zM114.7 43.5h2.5v1.2h-2.5zM122.3 52.7h4v2h-4zM97.7 49.2h4v2h-4zM92.2 50.6h2.5v3h-2.5zM122.8 52.8h2.5v1.2h-2.5zM115.2 37.3h1.5v1.2h-1.5zM91.7 40.6h4v2h-4zM106.4 52.2h2.5v2h-2.5zM104.6 55h4v1.2h-4zM84 40.5h1.5v2h-1.5zM115.5 53.7h4v2h-4zM95.4 40.7h1.5v2h-1.5zM92.3 38.3h4v2h-4zM123.9 36.6h2.5v3h-2.5zM126.5 57.6h1.5v1.2h-1.5zM142.4 30.1h4v2h-4zM146.2 25.9h1.5v3h-1.5zM147.7 35.6h4v3h-4zM150.5 42.5h4v3h-4zM143.1 39.7h4v3h-4zM133.4 34.6h2.5v2h-2.5zM141.1 45.1h1.5v3h-1.5zM152.6 64.9h2.5v1.2h-2.5zM138.1 71.5h1.5v1.2h-1.5zM170.5 68.4h4v3h-4zM146.1 54.1h2.5v2h-2.5zM162.6 55.6h2.5v1.2h-2.5zM146.8 75.6h2.5v2h-2.5zM143.1 63.1h2.5v3h-2.5zM157.6 53.9h4v2h-4zM158.9 69.7h4v3h-4zM142 59.8h1.5v2h-1.5zM148.3 69.4h1.5v2h-1.5zM138.3 59.6h1.5v1.2h-1.5zM157.8 57.2h1.5v1.2h-1.5zM156.6 58.9h1.5v3h-1.5zM140.3 67.5h1.5v1.2h-1.5zM153.7 75.4h4v1.2h-4zM141.2 62.9h4v1.2h-4zM151.6 59.1h4v1.2h-4zM138.2 71.6h4v1.2h-4zM169.6 75.8h1.5v2h-1.5zM147.4 59.3h1.5v2h-1.5zM176.9 67.2h2.5v3h-2.5zM151.6 53.1h1.5v3h-1.5zM167.3 75.8h2.5v2h-2.5zM154.7 74.5h2.5v3h-2.5zM174.1 63h2.5v3h-2.5zM160.1 68.7h1.5v3h-1.5zM149.3 65.6h1.5v2h-1.5zM157.6 72.9h1.5v2h-1.5zM143.1 76.5h2.5v2h-2.5zM171 56.2h1.5v3h-1.5zM154.2 74h1.5v3h-1.5zM153.6 63.8h2.5v3h-2.5zM147.4 71.9h2.5v1.2h-2.5zM168.2 56.1h2.5v2h-2.5zM16 48h1.5v3h-1.5zM17.1 40.5h4v2h-4zM37.1 40.7h1.5v3h-1.5zM13.4 55.9h2.5v3h-2.5zM26.6 52.2h2.5v3h-2.5zM29.6 45.7h2.5v2h-2.5zM18.4 50.5h2.5v3h-2.5zM19.1 51.1h4v3h-4zM22.5 46.6h1.5v3h-1.5zM30.4 40.9h2.5v1.2h-2.5zM30 39.7h4v2h-4zM44.7 50.4h1.5v2h-1.5zM48.2 51.2h4v3h-4zM56.4 50.5h4v1.2h-4zM61.9 56.4h1.5v3h-1.5zM40 56.6h4v1.2h-4zM54.9 55.4h4v2h-4zM171.8 109.4h4v1.2h-4zM184.7 95.6h2.5v2h-2.5zM173.5 92.2h1.5v1.2h-1.5zM185.5 102.5h1.5v2h-1.5zM170.5 109.1h4v1.2h-4zM191 93.6h1.5v2h-1.5zM182.6 108.6h1.5v2h-1.5zM183.3 111.1h2.5v2h-2.5zM183.7 103.1h2.5v2h-2.5zM165.7 111h1.5v3h-1.5zM155.7 20.8h2.5v1.2h-2.5zM165 23h1.5v1.2h-1.5zM169 24.3h1.5v2h-1.5zM32.8 114.1h2.5v2h-2.5zM123.2 77.8h4v1.2h-4zM120.3 63.6h2.5v3h-2.5zM129.2 77.6h2.5v3h-2.5z" fill="#300000"/><path d="M24.9 12.8a2.7 2.7 0 1 0 5.4 0a2.7 2.7 0 1 0 -5.4 0zM10.1 31.3a2.7 2.7 0 1 0 5.4 0a2.7 2.7 0 1 0 -5.4 0zM27.7 97a2.7 2.7 0 1 0 5.4 0a2.7 2.7 0 1 0 -5.4 0zM22.1 116a2.7 2.7 0 1 0 5.4 0a2.7 2.7 0 1 0 -5.4 0zM8.3 88.7a2.7 2.7 0 1 0 5.4 0a2.7 2.7 0 1 0 -5.4 0zM175.3 22a2.7 2.7 0 1 0 5.4 0a2.7 2.7 0 1 0 -5.4 0zM189.3 41a2.7 2.7 0 1 0 5.4 0a2.7 2.7 0 1 0 -5.4 0zM192.3 97.6a2.7 2.7 0 1 0 5.4 0a2.7 2.7 0 1 0 -5.4 0zM193.3 12a2.7 2.7 0 1 0 5.4 0a2.7 2.7 0 1 0 -5.4 0zM135.3 117a2.7 2.7 0 1 0 5.4 0a2.7 2.7 0 1 0 -5.4 0zM157.3 111a2.7 2.7 0 1 0 5.4 0a2.7 2.7 0 1 0 -5.4 0zM67.3 13a2.7 2.7 0 1 0 5.4 0a2.7 2.7 0 1 0 -5.4 0zM59.3 80a2.7 2.7 0 1 0 5.4 0a2.7 2.7 0 1 0 -5.4 0zM109.3 40a2.7 2.7 0 1 0 5.4 0a2.7 2.7 0 1 0 -5.4 0zM147.3 88a2.7 2.7 0 1 0 5.4 0a2.7 2.7 0 1 0 -5.4 0zM37.3 106a2.7 2.7 0 1 0 5.4 0a2.7 2.7 0 1 0 -5.4 0zM88.3 82a2.7 2.7 0 1 0 5.4 0a2.7 2.7 0 1 0 -5.4 0z" fill="#f5b800"/><path d="M26.4 12.8a1.2 1.2 0 1 0 2.4 0a1.2 1.2 0 1 0 -2.4 0zM11.6 31.3a1.2 1.2 0 1 0 2.4 0a1.2 1.2 0 1 0 -2.4 0zM29.2 97a1.2 1.2 0 1 0 2.4 0a1.2 1.2 0 1 0 -2.4 0zM23.6 116a1.2 1.2 0 1 0 2.4 0a1.2 1.2 0 1 0 -2.4 0zM9.8 88.7a1.2 1.2 0 1 0 2.4 0a1.2 1.2 0 1 0 -2.4 0zM176.8 22a1.2 1.2 0 1 0 2.4 0a1.2 1.2 0 1 0 -2.4 0zM190.8 41a1.2 1.2 0 1 0 2.4 0a1.2 1.2 0 1 0 -2.4 0zM193.8 97.6a1.2 1.2 0 1 0 2.4 0a1.2 1.2 0 1 0 -2.4 0zM194.8 12a1.2 1.2 0 1 0 2.4 0a1.2 1.2 0 1 0 -2.4 0zM136.8 117a1.2 1.2 0 1 0 2.4 0a1.2 1.2 0 1 0 -2.4 0zM158.8 111a1.2 1.2 0 1 0 2.4 0a1.2 1.2 0 1 0 -2.4 0zM68.8 13a1.2 1.2 0 1 0 2.4 0a1.2 1.2 0 1 0 -2.4 0zM60.8 80a1.2 1.2 0 1 0 2.4 0a1.2 1.2 0 1 0 -2.4 0zM110.8 40a1.2 1.2 0 1 0 2.4 0a1.2 1.2 0 1 0 -2.4 0zM148.8 88a1.2 1.2 0 1 0 2.4 0a1.2 1.2 0 1 0 -2.4 0zM38.8 106a1.2 1.2 0 1 0 2.4 0a1.2 1.2 0 1 0 -2.4 0zM89.8 82a1.2 1.2 0 1 0 2.4 0a1.2 1.2 0 1 0 -2.4 0z" fill="#d08a00"/><path d="M21.6 65.5a2.3 2.3 0 1 0 4.6 0a2.3 2.3 0 1 0 -4.6 0zM25.3 23.9a2.3 2.3 0 1 0 4.6 0a2.3 2.3 0 1 0 -4.6 0zM176.7 25a2.3 2.3 0 1 0 4.6 0a2.3 2.3 0 1 0 -4.6 0zM179.7 67a2.3 2.3 0 1 0 4.6 0a2.3 2.3 0 1 0 -4.6 0zM97.7 30a2.3 2.3 0 1 0 4.6 0a2.3 2.3 0 1 0 -4.6 0zM57.7 100a2.3 2.3 0 1 0 4.6 0a2.3 2.3 0 1 0 -4.6 0zM163.7 40a2.3 2.3 0 1 0 4.6 0a2.3 2.3 0 1 0 -4.6 0z" fill="#00b400"/><path d="M194 105a2 2 0 1 0 4 0a2 2 0 1 0 -4 0zM176 38a2 2 0 1 0 4 0a2 2 0 1 0 -4 0zM6 18a2 2 0 1 0 4 0a2 2 0 1 0 -4 0z" fill="#000"/></g><g transform="translate(809,474.5) rotate(180)"><rect x="0" y="0" width="206" height="120" fill="#ff0000" stroke="#f4f4f4" stroke-width="1.1"/><path d="M14 5.8H190Q201 5.8 201 16V106M5.5 84V16Q5.5 5.8 16 5.8" fill="none" stroke="#a05a10" stroke-width="2"/><path d="M21 94V117M185 20V115" fill="none" stroke="#8a4a00" stroke-width="1"/><rect x="44" y="12.5" width="118" height="8" fill="#00b400"/><rect x="31" y="116" width="141" height="3.6" fill="#00b400"/><path d="M5.5 82V94H24V86H9V82Z" fill="#00b400"/><path d="M197.6 83H200.5V94.4H192V88.6H197.6Z" fill="#00b400"/><path d="M21 37L41.5 36L47 27.6H118" fill="none" stroke="#3c0000" stroke-width="4.4" stroke-linejoin="round"/><path d="M21 37L41.5 36L47 27.6H118" fill="none" stroke="#ff0000" stroke-width="2.2" stroke-linejoin="round"/><path d="M76 28H128L133 33V78L166 113" fill="none" stroke="#3c0000" stroke-width="4.4" stroke-linejoin="round"/><path d="M76 28H128L133 33V78L166 113" fill="none" stroke="#ff0000" stroke-width="2.2" stroke-linejoin="round"/><path d="M48.5 43V84" fill="none" stroke="#3c0000" stroke-width="5.2" stroke-linejoin="round"/><path d="M48.5 43V84" fill="none" stroke="#ff0000" stroke-width="2" stroke-linejoin="round"/><path d="M44 50L48.5 43M48.5 84L44 92" fill="none" stroke="#3c0000" stroke-width="4.0" stroke-linejoin="round"/><path d="M44 50L48.5 43M48.5 84L44 92" fill="none" stroke="#ff0000" stroke-width="1.6" stroke-linejoin="round"/><path d="M68 47L93 32M74 49L99 34" fill="none" stroke="#3c0000" stroke-width="3.4000000000000004" stroke-linejoin="round"/><path d="M68 47L93 32M74 49L99 34" fill="none" stroke="#ff0000" stroke-width="1.6" stroke-linejoin="round"/><path d="M58 67.5H75Q78 70.5 75 73.5H58Q55 70.5 58 67.5Z" fill="none" stroke="#3c0000" stroke-width="2.8" stroke-linejoin="round"/><path d="M58 67.5H75Q78 70.5 75 73.5H58Q55 70.5 58 67.5Z" fill="none" stroke="#ff0000" stroke-width="1.4" stroke-linejoin="round"/><path d="M170 109H150L140 100" fill="none" stroke="#3c0000" stroke-width="3.4000000000000004" stroke-linejoin="round"/><path d="M170 109H150L140 100" fill="none" stroke="#ff0000" stroke-width="1.6" stroke-linejoin="round"/><path d="M52.6 43V108" fill="none" stroke="#3c0000" stroke-width="1.4"/><path d="M145 35V62" fill="none" stroke="#3c0000" stroke-width="1.4"/><path d="M118 64V80" fill="none" stroke="#3c0000" stroke-width="1.4"/><path d="M96 70H128" fill="none" stroke="#3c0000" stroke-width="1.4"/><path d="M176 45V100" fill="none" stroke="#3c0000" stroke-width="1.4"/><rect x="53.5" y="33" width="3.8" height="10.5" fill="#1a0000"/><path d="M84 96H96V89H137V108H84Z" fill="none" stroke="#c87800" stroke-width="1.6"/><rect x="98" y="95" width="9" height="4.5" fill="#000"/><rect x="124" y="92" width="12" height="15" fill="#f5b800"/><rect x="126" y="94" width="3" height="3" fill="#c89000"/><path d="M87 103Q92 99 100 102T113 102" fill="none" stroke="#f5b800" stroke-width="1.2"/><path d="M97.2 35.4h1.3v1.3h-1.3zM100.4 35.7h2.6v1.3h-2.6zM118.9 37h3.2v1.3h-3.2zM120.3 41h1.3v2.2h-1.3zM94.5 53.6h3.2v2.2h-3.2zM110 42.9h1.3v2.2h-1.3zM101.9 56.2h1.6v1.3h-1.6zM112.9 39.9h3.2v1.6h-3.2zM121.1 51.5h1.3v1.3h-1.3zM104.1 38h2.6v1.6h-2.6zM96 42.4h2.6v1.3h-2.6zM119.5 56.7h1.3v1.3h-1.3zM114.4 41.4h2.6v1.6h-2.6zM113.7 55.3h2.6v1.6h-2.6zM87.9 36.8h2v1.3h-2zM87.8 43.6h1.6v1.6h-1.6zM120.6 40.7h2v2.2h-2zM121.6 57h1.6v1.3h-1.6zM90.9 39.6h3.2v1.3h-3.2zM92.3 34.1h2v2.2h-2zM98.7 43.5h2.6v1.3h-2.6zM89 57.6h1.3v1.6h-1.3zM108.2 36.5h3.2v1.3h-3.2zM124.6 48.7h1.6v2.2h-1.6zM102.3 36.8h2.6v1.6h-2.6zM102.7 36.1h2v2.2h-2zM92.4 53.9h1.3v1.3h-1.3zM124.7 46.7h3.2v1.3h-3.2zM104.4 55.8h1.6v2.2h-1.6zM118.5 51.8h3.2v1.6h-3.2zM96.7 34.7h2v1.6h-2zM126.4 56.9h1.6v1.3h-1.6zM90.7 38.7h3.2v2.2h-3.2zM100.4 49.3h2.6v1.6h-2.6zM81.3 48.2h1.6v2.2h-1.6zM105.8 37.1h1.3v2.2h-1.3zM81.3 39.1h3.2v1.6h-3.2zM92.2 44.1h2v1.6h-2zM111.1 53.6h3.2v1.3h-3.2zM105 46.6h2.6v1.3h-2.6zM108.6 52.6h1.6v1.6h-1.6zM109.1 36.9h3.2v2.2h-3.2zM106.1 52.8h3.2v1.3h-3.2zM108.8 46.1h2v1.6h-2zM103.9 53.4h1.6v2.2h-1.6zM119.5 37.3h2.6v1.6h-2.6zM83.4 39.8h2v1.3h-2zM91.9 37.3h1.3v1.6h-1.3zM113.2 57.9h2.6v1.3h-2.6zM96.8 36.2h2v2.2h-2zM101.6 50.9h3.2v2.2h-3.2zM93.9 57.1h1.6v1.3h-1.6zM99.1 46.9h2.6v2.2h-2.6zM122.1 40.5h1.3v1.6h-1.3zM83.9 54.5h1.3v1.6h-1.3zM80.5 57.9h2v2.2h-2zM86.1 46.6h1.3v1.3h-1.3zM105 38.9h1.6v1.6h-1.6zM96.3 34.4h1.3v1.3h-1.3zM114.5 47.2h2.6v1.3h-2.6zM103.3 54h3.2v1.6h-3.2zM112.3 57.6h1.6v1.6h-1.6zM109.4 55.1h1.3v1.3h-1.3zM147 32.8h2v2.2h-2zM138.1 30.7h1.6v1.6h-1.6zM138.1 46.2h2v1.3h-2zM133 32.8h3.2v2.2h-3.2zM137.2 35.6h2v1.3h-2zM136 37.5h2v1.6h-2zM151.7 42h2v2.2h-2zM150.3 40.4h2.6v2.2h-2.6zM147.3 39.9h1.3v1.3h-1.3zM135.8 32.3h2.6v2.2h-2.6zM134.1 24.4h1.6v1.6h-1.6zM138.5 34.5h3.2v2.2h-3.2zM150 43.5h1.6v1.3h-1.6zM148.5 46.4h2.6v1.3h-2.6zM146.5 25.8h2v2.2h-2zM148.6 31h1.3v1.6h-1.3zM139.1 35.9h2.6v1.3h-2.6zM153.9 36.6h1.3v1.6h-1.3zM134.9 41.2h2v1.3h-2zM145.7 38.5h1.3v2.2h-1.3zM167.1 62.8h1.3v1.6h-1.3zM166.5 75.4h2v1.3h-2zM153.7 78h2v1.6h-2zM168.2 74.2h1.3v2.2h-1.3zM149.4 76.3h2v1.6h-2zM158.4 56.9h2.6v1.3h-2.6zM174.5 66.3h2.6v1.6h-2.6zM164.2 59.8h2.6v1.3h-2.6zM144.7 56.2h2.6v2.2h-2.6zM143.6 57h2v2.2h-2zM141.6 58.2h3.2v1.3h-3.2zM173.5 71.5h2.6v2.2h-2.6zM159 61.8h1.3v1.6h-1.3zM149.1 77.2h3.2v2.2h-3.2zM163.2 74.4h2v1.3h-2zM153.4 68.8h2v1.3h-2zM176.9 58.5h1.6v1.3h-1.6zM163.9 71.9h3.2v1.3h-3.2zM138.1 55.3h1.3v2.2h-1.3zM148.4 72.6h3.2v1.6h-3.2zM177.9 59.2h1.6v1.6h-1.6zM159.1 66.2h2.6v2.2h-2.6zM164 53.4h2.6v1.3h-2.6zM139.4 60.8h2.6v1.3h-2.6zM157.8 56.9h2.6v2.2h-2.6zM138.9 67.5h1.3v1.3h-1.3zM177.9 76.2h1.6v2.2h-1.6zM175.4 71.4h2.6v1.6h-2.6zM177.4 63.5h1.3v1.6h-1.3zM153.2 72h2.6v1.3h-2.6zM140 64.3h2.6v1.3h-2.6zM150.9 71.2h2.6v1.3h-2.6zM170.5 71.9h1.3v1.6h-1.3zM140.5 75.9h1.3v2.2h-1.3zM148.5 70.6h2v1.6h-2zM139 58.1h2.6v1.6h-2.6zM151.1 60.3h3.2v1.3h-3.2zM158.5 62.2h2.6v1.3h-2.6zM164 64.5h1.6v1.6h-1.6zM173.3 77.7h1.3v1.3h-1.3zM169.2 59.6h2v1.6h-2zM148.2 58.8h1.6v1.3h-1.6zM140.6 58.5h3.2v1.3h-3.2zM164 54.6h1.3v1.3h-1.3zM138.2 75h2.6v1.6h-2.6zM139.6 59.6h1.6v2.2h-1.6zM172.6 63.7h1.3v1.3h-1.3zM163.5 70.5h1.3v1.6h-1.3zM165.1 56.8h1.6v1.3h-1.6zM169.8 66.2h1.3v1.6h-1.3zM164.6 56h1.6v1.6h-1.6zM165.8 62.7h2v1.6h-2zM176.1 60.1h2v1.6h-2zM145.9 70.9h1.3v1.6h-1.3zM173.3 64h1.3v1.3h-1.3zM162.9 61.6h1.6v1.6h-1.6zM140.1 76.1h3.2v2.2h-3.2zM146.7 62.4h2.6v1.6h-2.6zM154.8 67.1h2v1.6h-2zM158.1 56.6h2.6v1.6h-2.6zM170.4 62.4h2v1.6h-2zM152.6 72.9h1.3v1.3h-1.3zM143.3 75h1.6v2.2h-1.6zM169.5 76.2h2v2.2h-2zM19.4 48.1h1.3v1.3h-1.3zM39.7 49.7h1.3v1.6h-1.3zM20.1 50.8h2v1.3h-2zM12.1 44.8h2v2.2h-2zM18.3 49.8h1.6v1.6h-1.6zM29.5 47.4h1.6v2.2h-1.6zM34.7 58.3h3.2v1.6h-3.2zM28.7 49.7h3.2v2.2h-3.2zM25.8 40.6h1.3v2.2h-1.3zM12.7 41.1h1.3v1.3h-1.3zM29.2 51.4h2.6v1.3h-2.6zM31.9 42.9h2.6v2.2h-2.6zM34.1 48.5h1.6v1.3h-1.6zM36.6 37.3h1.6v2.2h-1.6zM66.5 56.6h2.6v2.2h-2.6zM58.5 56.7h1.6v2.2h-1.6zM63.8 56.1h3.2v1.3h-3.2zM54.8 50.5h1.3v1.3h-1.3zM59.6 49.6h2v1.3h-2zM65.4 50h1.3v1.3h-1.3zM62.1 54.7h1.3v1.3h-1.3zM41.7 55.8h2v1.6h-2zM50.9 49.2h2v1.3h-2zM59 52.3h3.2v2.2h-3.2zM51.2 56h1.3v2.2h-1.3zM43.8 49h1.3v1.3h-1.3zM55.6 57.6h3.2v1.3h-3.2zM42.1 54.7h3.2v1.3h-3.2zM56.6 52.2h2.6v2.2h-2.6zM166.5 112.4h1.6v1.6h-1.6zM171.6 112.7h2.6v2.2h-2.6zM170.8 102.6h3.2v2.2h-3.2zM165 105.4h2.6v2.2h-2.6zM180.1 99.4h2v2.2h-2zM170.9 114h1.3v1.3h-1.3zM191.9 94.3h1.6v1.6h-1.6zM185.3 102h1.3v1.6h-1.3zM170 100.9h2.6v1.6h-2.6zM168.1 105.9h1.6v1.6h-1.6zM183.7 106.8h2v1.6h-2zM182.2 94.3h2.6v2.2h-2.6zM164.6 111.7h1.6v2.2h-1.6zM166.9 105.2h2.6v2.2h-2.6zM164.5 110.2h2v1.6h-2zM171.3 100.8h1.3v1.6h-1.3zM192.8 114.1h1.6v1.3h-1.6zM171.1 98.9h2.6v2.2h-2.6zM182.5 107.2h2v1.6h-2zM188.1 106.6h1.3v1.3h-1.3zM191.6 107.1h1.3v2.2h-1.3zM158.3 22.8h3.2v2.2h-3.2zM169.8 20.6h2.6v2.2h-2.6zM185.3 24.7h1.6v1.3h-1.6zM168.9 24.7h1.6v2.2h-1.6zM169.7 24h1.3v1.3h-1.3zM183.6 23.6h2v1.6h-2zM175.5 25.6h3.2v1.3h-3.2zM177.3 29.2h1.3v2.2h-1.3zM169.4 27.1h1.6v2.2h-1.6zM166.6 19.5h2v1.6h-2zM167.4 23.1h2v1.6h-2zM164.2 23.9h2v2.2h-2zM163.8 20.4h1.3v1.6h-1.3zM157.7 26.6h1.3v1.3h-1.3zM27 108.3h3.2v1.3h-3.2zM27 101.6h2.6v2.2h-2.6zM38 100.9h3.2v2.2h-3.2zM34.9 113h1.3v2.2h-1.3zM15.4 113.1h2v2.2h-2zM36.3 112.9h1.3v1.6h-1.3zM15.6 108.5h1.3v1.6h-1.3zM32 100.6h2.6v2.2h-2.6zM35.9 106.1h2.6v2.2h-2.6zM116.5 62.1h1.6v2.2h-1.6zM106.5 63h2v2.2h-2zM108.8 73.9h2v1.3h-2zM121.5 60.3h3.2v1.3h-3.2zM111.7 67.8h2.6v2.2h-2.6zM101.8 69.2h2.6v1.6h-2.6zM104.9 80h2.6v1.6h-2.6zM123.5 74.2h1.3v2.2h-1.3zM121.8 60.4h2v2.2h-2zM112.9 82.2h2.6v2.2h-2.6zM123.1 65.9h1.3v1.6h-1.3zM58 51.9h1.4v1.4h-1.4zM119.5 92.9h1.4v1.4h-1.4zM176.6 12.4h1.4v1.4h-1.4zM166.3 92.4h1.4v1.4h-1.4zM172.8 67.5h1.4v1.4h-1.4zM60 96.5h1.4v1.4h-1.4zM161.3 79.2h1.4v1.4h-1.4zM181.6 44.1h1.4v1.4h-1.4zM24.2 65.6h1.4v1.4h-1.4zM159.5 28.8h1.4v1.4h-1.4zM150.5 104.9h1.4v1.4h-1.4zM52.5 71.1h1.4v1.4h-1.4zM136.8 56.4h1.4v1.4h-1.4zM47.3 34.5h1.4v1.4h-1.4zM150.7 90.3h1.4v1.4h-1.4zM95.3 17.1h1.4v1.4h-1.4zM161.2 88.3h1.4v1.4h-1.4zM52.2 68.3h1.4v1.4h-1.4zM178.4 100h1.4v1.4h-1.4zM107.2 57.6h1.4v1.4h-1.4zM120 27.7h1.4v1.4h-1.4zM44.5 26.8h1.4v1.4h-1.4zM141.2 45.7h1.4v1.4h-1.4zM115.2 49.9h1.4v1.4h-1.4zM106.3 23.5h1.4v1.4h-1.4zM16.5 111.7h1.4v1.4h-1.4zM79.1 19h1.4v1.4h-1.4zM128.2 89.9h1.4v1.4h-1.4zM37.7 70.1h1.4v1.4h-1.4zM73.5 62h1.4v1.4h-1.4zM11.9 11.5h1.4v1.4h-1.4zM196.2 98.1h1.4v1.4h-1.4zM100.4 67h1.4v1.4h-1.4zM57.7 89h1.4v1.4h-1.4zM88.9 106.4h1.4v1.4h-1.4zM153.8 93.2h1.4v1.4h-1.4zM191.1 34.4h1.4v1.4h-1.4zM15.2 28.9h1.4v1.4h-1.4zM42.3 16.7h1.4v1.4h-1.4zM17.7 66h1.4v1.4h-1.4zM173.4 55.7h1.4v1.4h-1.4zM188 102.6h1.4v1.4h-1.4zM20.2 70.2h1.4v1.4h-1.4zM83.5 20.5h1.4v1.4h-1.4zM190.3 34.7h1.4v1.4h-1.4zM115.3 74.6h1.4v1.4h-1.4zM189.7 77.7h1.4v1.4h-1.4zM82.7 54.6h1.4v1.4h-1.4zM38.3 108.4h1.4v1.4h-1.4zM196.4 31.1h1.4v1.4h-1.4zM15.3 34.6h1.4v1.4h-1.4zM74.9 101.9h1.4v1.4h-1.4zM179.9 95.1h1.4v1.4h-1.4zM16.9 89.8h1.4v1.4h-1.4zM142.8 75.3h1.4v1.4h-1.4zM195.2 13.8h1.4v1.4h-1.4zM35.5 86.5h1.4v1.4h-1.4zM186.5 78.4h1.4v1.4h-1.4zM64.8 69.5h1.4v1.4h-1.4zM152 19h1.4v1.4h-1.4zM69.5 34.7h1.4v1.4h-1.4zM31.6 58.1h1.4v1.4h-1.4zM40 32.8h1.4v1.4h-1.4zM35.2 78.5h1.4v1.4h-1.4zM10.4 82.6h1.4v1.4h-1.4zM45.1 11.7h1.4v1.4h-1.4zM184.3 30.9h1.4v1.4h-1.4zM185.5 98.1h1.4v1.4h-1.4zM176.9 22.5h1.4v1.4h-1.4zM93 18.1h1.4v1.4h-1.4zM167 31h5v6h-5zM38 26h5v6h-5z" fill="#f5b800"/><path d="M95.2 37.6h4v2.5h-4zM82.8 38.9h6v3.5h-6zM106.6 56.9h4v3.5h-4zM115.6 41.2h4v3.5h-4zM105.5 46.1h4v2.5h-4zM119.5 45.5h4v2.5h-4zM98.9 56.7h4v2.5h-4zM118.8 57.5h6v2.5h-6zM122.2 37.7h6v2.5h-6zM121.6 37.9h4v2.5h-4zM153.7 27.4h4v2.5h-4zM134.9 36.1h6v3.5h-6zM134.3 30.2h4v3.5h-4zM144.4 76.7h6v3.5h-6zM149.3 58.6h6v3.5h-6zM166.6 77h6v2.5h-6zM145.3 72.9h4v2.5h-4zM141.9 65h6v2.5h-6zM147.4 62.8h4v2.5h-4zM142.9 58.4h4v2.5h-4zM173.4 73.9h6v2.5h-6zM163.5 54.1h4v2.5h-4zM168.1 75.3h4v2.5h-4zM172.3 77.9h4v2.5h-4zM37.1 53.1h4v2.5h-4zM15.7 42h4v2.5h-4zM16.2 39.1h6v3.5h-6zM26.5 51.1h6v2.5h-6zM26.2 38.4h6v2.5h-6zM39.9 50.2h4v2.5h-4zM52.3 51.6h6v2.5h-6zM48.7 49.9h4v3.5h-4zM46.9 50.9h6v2.5h-6zM170.7 99.7h4v2.5h-4zM185 114.4h6v2.5h-6zM184.1 103.5h6v2.5h-6zM184.3 105.5h4v2.5h-4zM171.3 97h4v3.5h-4zM178.9 113.5h6v2.5h-6zM190.5 106.5h6v2.5h-6zM192.9 109.5h6v3.5h-6zM186.7 97.3h6v3.5h-6zM174.3 27.4h6v2.5h-6zM26.3 102.2h4v2.5h-4zM16.2 109.5h4v2.5h-4zM100.5 60.1h4v2.5h-4zM117.1 71.3h4v3.5h-4z" fill="none" stroke="#f5b800" stroke-width="0.9"/><path d="M107.1 43.5h1.5v3h-1.5zM81.8 50h4v2h-4zM114.7 43.5h2.5v1.2h-2.5zM122.3 52.7h4v2h-4zM97.7 49.2h4v2h-4zM92.2 50.6h2.5v3h-2.5zM122.8 52.8h2.5v1.2h-2.5zM115.2 37.3h1.5v1.2h-1.5zM91.7 40.6h4v2h-4zM106.4 52.2h2.5v2h-2.5zM104.6 55h4v1.2h-4zM84 40.5h1.5v2h-1.5zM115.5 53.7h4v2h-4zM95.4 40.7h1.5v2h-1.5zM92.3 38.3h4v2h-4zM123.9 36.6h2.5v3h-2.5zM126.5 57.6h1.5v1.2h-1.5zM142.4 30.1h4v2h-4zM146.2 25.9h1.5v3h-1.5zM147.7 35.6h4v3h-4zM150.5 42.5h4v3h-4zM143.1 39.7h4v3h-4zM133.4 34.6h2.5v2h-2.5zM141.1 45.1h1.5v3h-1.5zM152.6 64.9h2.5v1.2h-2.5zM138.1 71.5h1.5v1.2h-1.5zM170.5 68.4h4v3h-4zM146.1 54.1h2.5v2h-2.5zM162.6 55.6h2.5v1.2h-2.5zM146.8 75.6h2.5v2h-2.5zM143.1 63.1h2.5v3h-2.5zM157.6 53.9h4v2h-4zM158.9 69.7h4v3h-4zM142 59.8h1.5v2h-1.5zM148.3 69.4h1.5v2h-1.5zM138.3 59.6h1.5v1.2h-1.5zM157.8 57.2h1.5v1.2h-1.5zM156.6 58.9h1.5v3h-1.5zM140.3 67.5h1.5v1.2h-1.5zM153.7 75.4h4v1.2h-4zM141.2 62.9h4v1.2h-4zM151.6 59.1h4v1.2h-4zM138.2 71.6h4v1.2h-4zM169.6 75.8h1.5v2h-1.5zM147.4 59.3h1.5v2h-1.5zM176.9 67.2h2.5v3h-2.5zM151.6 53.1h1.5v3h-1.5zM167.3 75.8h2.5v2h-2.5zM154.7 74.5h2.5v3h-2.5zM174.1 63h2.5v3h-2.5zM160.1 68.7h1.5v3h-1.5zM149.3 65.6h1.5v2h-1.5zM157.6 72.9h1.5v2h-1.5zM143.1 76.5h2.5v2h-2.5zM171 56.2h1.5v3h-1.5zM154.2 74h1.5v3h-1.5zM153.6 63.8h2.5v3h-2.5zM147.4 71.9h2.5v1.2h-2.5zM168.2 56.1h2.5v2h-2.5zM16 48h1.5v3h-1.5zM17.1 40.5h4v2h-4zM37.1 40.7h1.5v3h-1.5zM13.4 55.9h2.5v3h-2.5zM26.6 52.2h2.5v3h-2.5zM29.6 45.7h2.5v2h-2.5zM18.4 50.5h2.5v3h-2.5zM19.1 51.1h4v3h-4zM22.5 46.6h1.5v3h-1.5zM30.4 40.9h2.5v1.2h-2.5zM30 39.7h4v2h-4zM44.7 50.4h1.5v2h-1.5zM48.2 51.2h4v3h-4zM56.4 50.5h4v1.2h-4zM61.9 56.4h1.5v3h-1.5zM40 56.6h4v1.2h-4zM54.9 55.4h4v2h-4zM171.8 109.4h4v1.2h-4zM184.7 95.6h2.5v2h-2.5zM173.5 92.2h1.5v1.2h-1.5zM185.5 102.5h1.5v2h-1.5zM170.5 109.1h4v1.2h-4zM191 93.6h1.5v2h-1.5zM182.6 108.6h1.5v2h-1.5zM183.3 111.1h2.5v2h-2.5zM183.7 103.1h2.5v2h-2.5zM165.7 111h1.5v3h-1.5zM155.7 20.8h2.5v1.2h-2.5zM165 23h1.5v1.2h-1.5zM169 24.3h1.5v2h-1.5zM32.8 114.1h2.5v2h-2.5zM123.2 77.8h4v1.2h-4zM120.3 63.6h2.5v3h-2.5zM129.2 77.6h2.5v3h-2.5z" fill="#300000"/><path d="M24.9 12.8a2.7 2.7 0 1 0 5.4 0a2.7 2.7 0 1 0 -5.4 0zM10.1 31.3a2.7 2.7 0 1 0 5.4 0a2.7 2.7 0 1 0 -5.4 0zM27.7 97a2.7 2.7 0 1 0 5.4 0a2.7 2.7 0 1 0 -5.4 0zM22.1 116a2.7 2.7 0 1 0 5.4 0a2.7 2.7 0 1 0 -5.4 0zM8.3 88.7a2.7 2.7 0 1 0 5.4 0a2.7 2.7 0 1 0 -5.4 0zM175.3 22a2.7 2.7 0 1 0 5.4 0a2.7 2.7 0 1 0 -5.4 0zM189.3 41a2.7 2.7 0 1 0 5.4 0a2.7 2.7 0 1 0 -5.4 0zM192.3 97.6a2.7 2.7 0 1 0 5.4 0a2.7 2.7 0 1 0 -5.4 0zM193.3 12a2.7 2.7 0 1 0 5.4 0a2.7 2.7 0 1 0 -5.4 0zM135.3 117a2.7 2.7 0 1 0 5.4 0a2.7 2.7 0 1 0 -5.4 0zM157.3 111a2.7 2.7 0 1 0 5.4 0a2.7 2.7 0 1 0 -5.4 0zM67.3 13a2.7 2.7 0 1 0 5.4 0a2.7 2.7 0 1 0 -5.4 0zM59.3 80a2.7 2.7 0 1 0 5.4 0a2.7 2.7 0 1 0 -5.4 0zM109.3 40a2.7 2.7 0 1 0 5.4 0a2.7 2.7 0 1 0 -5.4 0zM147.3 88a2.7 2.7 0 1 0 5.4 0a2.7 2.7 0 1 0 -5.4 0zM37.3 106a2.7 2.7 0 1 0 5.4 0a2.7 2.7 0 1 0 -5.4 0zM88.3 82a2.7 2.7 0 1 0 5.4 0a2.7 2.7 0 1 0 -5.4 0z" fill="#f5b800"/><path d="M26.4 12.8a1.2 1.2 0 1 0 2.4 0a1.2 1.2 0 1 0 -2.4 0zM11.6 31.3a1.2 1.2 0 1 0 2.4 0a1.2 1.2 0 1 0 -2.4 0zM29.2 97a1.2 1.2 0 1 0 2.4 0a1.2 1.2 0 1 0 -2.4 0zM23.6 116a1.2 1.2 0 1 0 2.4 0a1.2 1.2 0 1 0 -2.4 0zM9.8 88.7a1.2 1.2 0 1 0 2.4 0a1.2 1.2 0 1 0 -2.4 0zM176.8 22a1.2 1.2 0 1 0 2.4 0a1.2 1.2 0 1 0 -2.4 0zM190.8 41a1.2 1.2 0 1 0 2.4 0a1.2 1.2 0 1 0 -2.4 0zM193.8 97.6a1.2 1.2 0 1 0 2.4 0a1.2 1.2 0 1 0 -2.4 0zM194.8 12a1.2 1.2 0 1 0 2.4 0a1.2 1.2 0 1 0 -2.4 0zM136.8 117a1.2 1.2 0 1 0 2.4 0a1.2 1.2 0 1 0 -2.4 0zM158.8 111a1.2 1.2 0 1 0 2.4 0a1.2 1.2 0 1 0 -2.4 0zM68.8 13a1.2 1.2 0 1 0 2.4 0a1.2 1.2 0 1 0 -2.4 0zM60.8 80a1.2 1.2 0 1 0 2.4 0a1.2 1.2 0 1 0 -2.4 0zM110.8 40a1.2 1.2 0 1 0 2.4 0a1.2 1.2 0 1 0 -2.4 0zM148.8 88a1.2 1.2 0 1 0 2.4 0a1.2 1.2 0 1 0 -2.4 0zM38.8 106a1.2 1.2 0 1 0 2.4 0a1.2 1.2 0 1 0 -2.4 0zM89.8 82a1.2 1.2 0 1 0 2.4 0a1.2 1.2 0 1 0 -2.4 0z" fill="#d08a00"/><path d="M21.6 65.5a2.3 2.3 0 1 0 4.6 0a2.3 2.3 0 1 0 -4.6 0zM25.3 23.9a2.3 2.3 0 1 0 4.6 0a2.3 2.3 0 1 0 -4.6 0zM176.7 25a2.3 2.3 0 1 0 4.6 0a2.3 2.3 0 1 0 -4.6 0zM179.7 67a2.3 2.3 0 1 0 4.6 0a2.3 2.3 0 1 0 -4.6 0zM97.7 30a2.3 2.3 0 1 0 4.6 0a2.3 2.3 0 1 0 -4.6 0zM57.7 100a2.3 2.3 0 1 0 4.6 0a2.3 2.3 0 1 0 -4.6 0zM163.7 40a2.3 2.3 0 1 0 4.6 0a2.3 2.3 0 1 0 -4.6 0z" fill="#00b400"/><path d="M194 105a2 2 0 1 0 4 0a2 2 0 1 0 -4 0zM176 38a2 2 0 1 0 4 0a2 2 0 1 0 -4 0zM6 18a2 2 0 1 0 4 0a2 2 0 1 0 -4 0z" fill="#000"/></g><g transform="translate(589,597) rotate(180)"><rect x="0" y="0" width="206" height="120" fill="#ff0000" stroke="#f4f4f4" stroke-width="1.1"/><path d="M14 5.8H190Q201 5.8 201 16V106M5.5 84V16Q5.5 5.8 16 5.8" fill="none" stroke="#a05a10" stroke-width="2"/><path d="M21 94V117M185 20V115" fill="none" stroke="#8a4a00" stroke-width="1"/><rect x="44" y="12.5" width="118" height="8" fill="#00b400"/><rect x="31" y="116" width="141" height="3.6" fill="#00b400"/><path d="M5.5 82V94H24V86H9V82Z" fill="#00b400"/><path d="M197.6 83H200.5V94.4H192V88.6H197.6Z" fill="#00b400"/><path d="M21 37L41.5 36L47 27.6H118" fill="none" stroke="#3c0000" stroke-width="4.4" stroke-linejoin="round"/><path d="M21 37L41.5 36L47 27.6H118" fill="none" stroke="#ff0000" stroke-width="2.2" stroke-linejoin="round"/><path d="M76 28H128L133 33V78L166 113" fill="none" stroke="#3c0000" stroke-width="4.4" stroke-linejoin="round"/><path d="M76 28H128L133 33V78L166 113" fill="none" stroke="#ff0000" stroke-width="2.2" stroke-linejoin="round"/><path d="M48.5 43V84" fill="none" stroke="#3c0000" stroke-width="5.2" stroke-linejoin="round"/><path d="M48.5 43V84" fill="none" stroke="#ff0000" stroke-width="2" stroke-linejoin="round"/><path d="M44 50L48.5 43M48.5 84L44 92" fill="none" stroke="#3c0000" stroke-width="4.0" stroke-linejoin="round"/><path d="M44 50L48.5 43M48.5 84L44 92" fill="none" stroke="#ff0000" stroke-width="1.6" stroke-linejoin="round"/><path d="M68 47L93 32M74 49L99 34" fill="none" stroke="#3c0000" stroke-width="3.4000000000000004" stroke-linejoin="round"/><path d="M68 47L93 32M74 49L99 34" fill="none" stroke="#ff0000" stroke-width="1.6" stroke-linejoin="round"/><path d="M58 67.5H75Q78 70.5 75 73.5H58Q55 70.5 58 67.5Z" fill="none" stroke="#3c0000" stroke-width="2.8" stroke-linejoin="round"/><path d="M58 67.5H75Q78 70.5 75 73.5H58Q55 70.5 58 67.5Z" fill="none" stroke="#ff0000" stroke-width="1.4" stroke-linejoin="round"/><path d="M170 109H150L140 100" fill="none" stroke="#3c0000" stroke-width="3.4000000000000004" stroke-linejoin="round"/><path d="M170 109H150L140 100" fill="none" stroke="#ff0000" stroke-width="1.6" stroke-linejoin="round"/><path d="M52.6 43V108" fill="none" stroke="#3c0000" stroke-width="1.4"/><path d="M145 35V62" fill="none" stroke="#3c0000" stroke-width="1.4"/><path d="M118 64V80" fill="none" stroke="#3c0000" stroke-width="1.4"/><path d="M96 70H128" fill="none" stroke="#3c0000" stroke-width="1.4"/><path d="M176 45V100" fill="none" stroke="#3c0000" stroke-width="1.4"/><rect x="53.5" y="33" width="3.8" height="10.5" fill="#1a0000"/><path d="M84 96H96V89H137V108H84Z" fill="none" stroke="#c87800" stroke-width="1.6"/><rect x="98" y="95" width="9" height="4.5" fill="#000"/><rect x="124" y="92" width="12" height="15" fill="#f5b800"/><rect x="126" y="94" width="3" height="3" fill="#c89000"/><path d="M87 103Q92 99 100 102T113 102" fill="none" stroke="#f5b800" stroke-width="1.2"/><path d="M97.2 35.4h1.3v1.3h-1.3zM100.4 35.7h2.6v1.3h-2.6zM118.9 37h3.2v1.3h-3.2zM120.3 41h1.3v2.2h-1.3zM94.5 53.6h3.2v2.2h-3.2zM110 42.9h1.3v2.2h-1.3zM101.9 56.2h1.6v1.3h-1.6zM112.9 39.9h3.2v1.6h-3.2zM121.1 51.5h1.3v1.3h-1.3zM104.1 38h2.6v1.6h-2.6zM96 42.4h2.6v1.3h-2.6zM119.5 56.7h1.3v1.3h-1.3zM114.4 41.4h2.6v1.6h-2.6zM113.7 55.3h2.6v1.6h-2.6zM87.9 36.8h2v1.3h-2zM87.8 43.6h1.6v1.6h-1.6zM120.6 40.7h2v2.2h-2zM121.6 57h1.6v1.3h-1.6zM90.9 39.6h3.2v1.3h-3.2zM92.3 34.1h2v2.2h-2zM98.7 43.5h2.6v1.3h-2.6zM89 57.6h1.3v1.6h-1.3zM108.2 36.5h3.2v1.3h-3.2zM124.6 48.7h1.6v2.2h-1.6zM102.3 36.8h2.6v1.6h-2.6zM102.7 36.1h2v2.2h-2zM92.4 53.9h1.3v1.3h-1.3zM124.7 46.7h3.2v1.3h-3.2zM104.4 55.8h1.6v2.2h-1.6zM118.5 51.8h3.2v1.6h-3.2zM96.7 34.7h2v1.6h-2zM126.4 56.9h1.6v1.3h-1.6zM90.7 38.7h3.2v2.2h-3.2zM100.4 49.3h2.6v1.6h-2.6zM81.3 48.2h1.6v2.2h-1.6zM105.8 37.1h1.3v2.2h-1.3zM81.3 39.1h3.2v1.6h-3.2zM92.2 44.1h2v1.6h-2zM111.1 53.6h3.2v1.3h-3.2zM105 46.6h2.6v1.3h-2.6zM108.6 52.6h1.6v1.6h-1.6zM109.1 36.9h3.2v2.2h-3.2zM106.1 52.8h3.2v1.3h-3.2zM108.8 46.1h2v1.6h-2zM103.9 53.4h1.6v2.2h-1.6zM119.5 37.3h2.6v1.6h-2.6zM83.4 39.8h2v1.3h-2zM91.9 37.3h1.3v1.6h-1.3zM113.2 57.9h2.6v1.3h-2.6zM96.8 36.2h2v2.2h-2zM101.6 50.9h3.2v2.2h-3.2zM93.9 57.1h1.6v1.3h-1.6zM99.1 46.9h2.6v2.2h-2.6zM122.1 40.5h1.3v1.6h-1.3zM83.9 54.5h1.3v1.6h-1.3zM80.5 57.9h2v2.2h-2zM86.1 46.6h1.3v1.3h-1.3zM105 38.9h1.6v1.6h-1.6zM96.3 34.4h1.3v1.3h-1.3zM114.5 47.2h2.6v1.3h-2.6zM103.3 54h3.2v1.6h-3.2zM112.3 57.6h1.6v1.6h-1.6zM109.4 55.1h1.3v1.3h-1.3zM147 32.8h2v2.2h-2zM138.1 30.7h1.6v1.6h-1.6zM138.1 46.2h2v1.3h-2zM133 32.8h3.2v2.2h-3.2zM137.2 35.6h2v1.3h-2zM136 37.5h2v1.6h-2zM151.7 42h2v2.2h-2zM150.3 40.4h2.6v2.2h-2.6zM147.3 39.9h1.3v1.3h-1.3zM135.8 32.3h2.6v2.2h-2.6zM134.1 24.4h1.6v1.6h-1.6zM138.5 34.5h3.2v2.2h-3.2zM150 43.5h1.6v1.3h-1.6zM148.5 46.4h2.6v1.3h-2.6zM146.5 25.8h2v2.2h-2zM148.6 31h1.3v1.6h-1.3zM139.1 35.9h2.6v1.3h-2.6zM153.9 36.6h1.3v1.6h-1.3zM134.9 41.2h2v1.3h-2zM145.7 38.5h1.3v2.2h-1.3zM167.1 62.8h1.3v1.6h-1.3zM166.5 75.4h2v1.3h-2zM153.7 78h2v1.6h-2zM168.2 74.2h1.3v2.2h-1.3zM149.4 76.3h2v1.6h-2zM158.4 56.9h2.6v1.3h-2.6zM174.5 66.3h2.6v1.6h-2.6zM164.2 59.8h2.6v1.3h-2.6zM144.7 56.2h2.6v2.2h-2.6zM143.6 57h2v2.2h-2zM141.6 58.2h3.2v1.3h-3.2zM173.5 71.5h2.6v2.2h-2.6zM159 61.8h1.3v1.6h-1.3zM149.1 77.2h3.2v2.2h-3.2zM163.2 74.4h2v1.3h-2zM153.4 68.8h2v1.3h-2zM176.9 58.5h1.6v1.3h-1.6zM163.9 71.9h3.2v1.3h-3.2zM138.1 55.3h1.3v2.2h-1.3zM148.4 72.6h3.2v1.6h-3.2zM177.9 59.2h1.6v1.6h-1.6zM159.1 66.2h2.6v2.2h-2.6zM164 53.4h2.6v1.3h-2.6zM139.4 60.8h2.6v1.3h-2.6zM157.8 56.9h2.6v2.2h-2.6zM138.9 67.5h1.3v1.3h-1.3zM177.9 76.2h1.6v2.2h-1.6zM175.4 71.4h2.6v1.6h-2.6zM177.4 63.5h1.3v1.6h-1.3zM153.2 72h2.6v1.3h-2.6zM140 64.3h2.6v1.3h-2.6zM150.9 71.2h2.6v1.3h-2.6zM170.5 71.9h1.3v1.6h-1.3zM140.5 75.9h1.3v2.2h-1.3zM148.5 70.6h2v1.6h-2zM139 58.1h2.6v1.6h-2.6zM151.1 60.3h3.2v1.3h-3.2zM158.5 62.2h2.6v1.3h-2.6zM164 64.5h1.6v1.6h-1.6zM173.3 77.7h1.3v1.3h-1.3zM169.2 59.6h2v1.6h-2zM148.2 58.8h1.6v1.3h-1.6zM140.6 58.5h3.2v1.3h-3.2zM164 54.6h1.3v1.3h-1.3zM138.2 75h2.6v1.6h-2.6zM139.6 59.6h1.6v2.2h-1.6zM172.6 63.7h1.3v1.3h-1.3zM163.5 70.5h1.3v1.6h-1.3zM165.1 56.8h1.6v1.3h-1.6zM169.8 66.2h1.3v1.6h-1.3zM164.6 56h1.6v1.6h-1.6zM165.8 62.7h2v1.6h-2zM176.1 60.1h2v1.6h-2zM145.9 70.9h1.3v1.6h-1.3zM173.3 64h1.3v1.3h-1.3zM162.9 61.6h1.6v1.6h-1.6zM140.1 76.1h3.2v2.2h-3.2zM146.7 62.4h2.6v1.6h-2.6zM154.8 67.1h2v1.6h-2zM158.1 56.6h2.6v1.6h-2.6zM170.4 62.4h2v1.6h-2zM152.6 72.9h1.3v1.3h-1.3zM143.3 75h1.6v2.2h-1.6zM169.5 76.2h2v2.2h-2zM19.4 48.1h1.3v1.3h-1.3zM39.7 49.7h1.3v1.6h-1.3zM20.1 50.8h2v1.3h-2zM12.1 44.8h2v2.2h-2zM18.3 49.8h1.6v1.6h-1.6zM29.5 47.4h1.6v2.2h-1.6zM34.7 58.3h3.2v1.6h-3.2zM28.7 49.7h3.2v2.2h-3.2zM25.8 40.6h1.3v2.2h-1.3zM12.7 41.1h1.3v1.3h-1.3zM29.2 51.4h2.6v1.3h-2.6zM31.9 42.9h2.6v2.2h-2.6zM34.1 48.5h1.6v1.3h-1.6zM36.6 37.3h1.6v2.2h-1.6zM66.5 56.6h2.6v2.2h-2.6zM58.5 56.7h1.6v2.2h-1.6zM63.8 56.1h3.2v1.3h-3.2zM54.8 50.5h1.3v1.3h-1.3zM59.6 49.6h2v1.3h-2zM65.4 50h1.3v1.3h-1.3zM62.1 54.7h1.3v1.3h-1.3zM41.7 55.8h2v1.6h-2zM50.9 49.2h2v1.3h-2zM59 52.3h3.2v2.2h-3.2zM51.2 56h1.3v2.2h-1.3zM43.8 49h1.3v1.3h-1.3zM55.6 57.6h3.2v1.3h-3.2zM42.1 54.7h3.2v1.3h-3.2zM56.6 52.2h2.6v2.2h-2.6zM166.5 112.4h1.6v1.6h-1.6zM171.6 112.7h2.6v2.2h-2.6zM170.8 102.6h3.2v2.2h-3.2zM165 105.4h2.6v2.2h-2.6zM180.1 99.4h2v2.2h-2zM170.9 114h1.3v1.3h-1.3zM191.9 94.3h1.6v1.6h-1.6zM185.3 102h1.3v1.6h-1.3zM170 100.9h2.6v1.6h-2.6zM168.1 105.9h1.6v1.6h-1.6zM183.7 106.8h2v1.6h-2zM182.2 94.3h2.6v2.2h-2.6zM164.6 111.7h1.6v2.2h-1.6zM166.9 105.2h2.6v2.2h-2.6zM164.5 110.2h2v1.6h-2zM171.3 100.8h1.3v1.6h-1.3zM192.8 114.1h1.6v1.3h-1.6zM171.1 98.9h2.6v2.2h-2.6zM182.5 107.2h2v1.6h-2zM188.1 106.6h1.3v1.3h-1.3zM191.6 107.1h1.3v2.2h-1.3zM158.3 22.8h3.2v2.2h-3.2zM169.8 20.6h2.6v2.2h-2.6zM185.3 24.7h1.6v1.3h-1.6zM168.9 24.7h1.6v2.2h-1.6zM169.7 24h1.3v1.3h-1.3zM183.6 23.6h2v1.6h-2zM175.5 25.6h3.2v1.3h-3.2zM177.3 29.2h1.3v2.2h-1.3zM169.4 27.1h1.6v2.2h-1.6zM166.6 19.5h2v1.6h-2zM167.4 23.1h2v1.6h-2zM164.2 23.9h2v2.2h-2zM163.8 20.4h1.3v1.6h-1.3zM157.7 26.6h1.3v1.3h-1.3zM27 108.3h3.2v1.3h-3.2zM27 101.6h2.6v2.2h-2.6zM38 100.9h3.2v2.2h-3.2zM34.9 113h1.3v2.2h-1.3zM15.4 113.1h2v2.2h-2zM36.3 112.9h1.3v1.6h-1.3zM15.6 108.5h1.3v1.6h-1.3zM32 100.6h2.6v2.2h-2.6zM35.9 106.1h2.6v2.2h-2.6zM116.5 62.1h1.6v2.2h-1.6zM106.5 63h2v2.2h-2zM108.8 73.9h2v1.3h-2zM121.5 60.3h3.2v1.3h-3.2zM111.7 67.8h2.6v2.2h-2.6zM101.8 69.2h2.6v1.6h-2.6zM104.9 80h2.6v1.6h-2.6zM123.5 74.2h1.3v2.2h-1.3zM121.8 60.4h2v2.2h-2zM112.9 82.2h2.6v2.2h-2.6zM123.1 65.9h1.3v1.6h-1.3zM58 51.9h1.4v1.4h-1.4zM119.5 92.9h1.4v1.4h-1.4zM176.6 12.4h1.4v1.4h-1.4zM166.3 92.4h1.4v1.4h-1.4zM172.8 67.5h1.4v1.4h-1.4zM60 96.5h1.4v1.4h-1.4zM161.3 79.2h1.4v1.4h-1.4zM181.6 44.1h1.4v1.4h-1.4zM24.2 65.6h1.4v1.4h-1.4zM159.5 28.8h1.4v1.4h-1.4zM150.5 104.9h1.4v1.4h-1.4zM52.5 71.1h1.4v1.4h-1.4zM136.8 56.4h1.4v1.4h-1.4zM47.3 34.5h1.4v1.4h-1.4zM150.7 90.3h1.4v1.4h-1.4zM95.3 17.1h1.4v1.4h-1.4zM161.2 88.3h1.4v1.4h-1.4zM52.2 68.3h1.4v1.4h-1.4zM178.4 100h1.4v1.4h-1.4zM107.2 57.6h1.4v1.4h-1.4zM120 27.7h1.4v1.4h-1.4zM44.5 26.8h1.4v1.4h-1.4zM141.2 45.7h1.4v1.4h-1.4zM115.2 49.9h1.4v1.4h-1.4zM106.3 23.5h1.4v1.4h-1.4zM16.5 111.7h1.4v1.4h-1.4zM79.1 19h1.4v1.4h-1.4zM128.2 89.9h1.4v1.4h-1.4zM37.7 70.1h1.4v1.4h-1.4zM73.5 62h1.4v1.4h-1.4zM11.9 11.5h1.4v1.4h-1.4zM196.2 98.1h1.4v1.4h-1.4zM100.4 67h1.4v1.4h-1.4zM57.7 89h1.4v1.4h-1.4zM88.9 106.4h1.4v1.4h-1.4zM153.8 93.2h1.4v1.4h-1.4zM191.1 34.4h1.4v1.4h-1.4zM15.2 28.9h1.4v1.4h-1.4zM42.3 16.7h1.4v1.4h-1.4zM17.7 66h1.4v1.4h-1.4zM173.4 55.7h1.4v1.4h-1.4zM188 102.6h1.4v1.4h-1.4zM20.2 70.2h1.4v1.4h-1.4zM83.5 20.5h1.4v1.4h-1.4zM190.3 34.7h1.4v1.4h-1.4zM115.3 74.6h1.4v1.4h-1.4zM189.7 77.7h1.4v1.4h-1.4zM82.7 54.6h1.4v1.4h-1.4zM38.3 108.4h1.4v1.4h-1.4zM196.4 31.1h1.4v1.4h-1.4zM15.3 34.6h1.4v1.4h-1.4zM74.9 101.9h1.4v1.4h-1.4zM179.9 95.1h1.4v1.4h-1.4zM16.9 89.8h1.4v1.4h-1.4zM142.8 75.3h1.4v1.4h-1.4zM195.2 13.8h1.4v1.4h-1.4zM35.5 86.5h1.4v1.4h-1.4zM186.5 78.4h1.4v1.4h-1.4zM64.8 69.5h1.4v1.4h-1.4zM152 19h1.4v1.4h-1.4zM69.5 34.7h1.4v1.4h-1.4zM31.6 58.1h1.4v1.4h-1.4zM40 32.8h1.4v1.4h-1.4zM35.2 78.5h1.4v1.4h-1.4zM10.4 82.6h1.4v1.4h-1.4zM45.1 11.7h1.4v1.4h-1.4zM184.3 30.9h1.4v1.4h-1.4zM185.5 98.1h1.4v1.4h-1.4zM176.9 22.5h1.4v1.4h-1.4zM93 18.1h1.4v1.4h-1.4zM167 31h5v6h-5zM38 26h5v6h-5z" fill="#f5b800"/><path d="M95.2 37.6h4v2.5h-4zM82.8 38.9h6v3.5h-6zM106.6 56.9h4v3.5h-4zM115.6 41.2h4v3.5h-4zM105.5 46.1h4v2.5h-4zM119.5 45.5h4v2.5h-4zM98.9 56.7h4v2.5h-4zM118.8 57.5h6v2.5h-6zM122.2 37.7h6v2.5h-6zM121.6 37.9h4v2.5h-4zM153.7 27.4h4v2.5h-4zM134.9 36.1h6v3.5h-6zM134.3 30.2h4v3.5h-4zM144.4 76.7h6v3.5h-6zM149.3 58.6h6v3.5h-6zM166.6 77h6v2.5h-6zM145.3 72.9h4v2.5h-4zM141.9 65h6v2.5h-6zM147.4 62.8h4v2.5h-4zM142.9 58.4h4v2.5h-4zM173.4 73.9h6v2.5h-6zM163.5 54.1h4v2.5h-4zM168.1 75.3h4v2.5h-4zM172.3 77.9h4v2.5h-4zM37.1 53.1h4v2.5h-4zM15.7 42h4v2.5h-4zM16.2 39.1h6v3.5h-6zM26.5 51.1h6v2.5h-6zM26.2 38.4h6v2.5h-6zM39.9 50.2h4v2.5h-4zM52.3 51.6h6v2.5h-6zM48.7 49.9h4v3.5h-4zM46.9 50.9h6v2.5h-6zM170.7 99.7h4v2.5h-4zM185 114.4h6v2.5h-6zM184.1 103.5h6v2.5h-6zM184.3 105.5h4v2.5h-4zM171.3 97h4v3.5h-4zM178.9 113.5h6v2.5h-6zM190.5 106.5h6v2.5h-6zM192.9 109.5h6v3.5h-6zM186.7 97.3h6v3.5h-6zM174.3 27.4h6v2.5h-6zM26.3 102.2h4v2.5h-4zM16.2 109.5h4v2.5h-4zM100.5 60.1h4v2.5h-4zM117.1 71.3h4v3.5h-4z" fill="none" stroke="#f5b800" stroke-width="0.9"/><path d="M107.1 43.5h1.5v3h-1.5zM81.8 50h4v2h-4zM114.7 43.5h2.5v1.2h-2.5zM122.3 52.7h4v2h-4zM97.7 49.2h4v2h-4zM92.2 50.6h2.5v3h-2.5zM122.8 52.8h2.5v1.2h-2.5zM115.2 37.3h1.5v1.2h-1.5zM91.7 40.6h4v2h-4zM106.4 52.2h2.5v2h-2.5zM104.6 55h4v1.2h-4zM84 40.5h1.5v2h-1.5zM115.5 53.7h4v2h-4zM95.4 40.7h1.5v2h-1.5zM92.3 38.3h4v2h-4zM123.9 36.6h2.5v3h-2.5zM126.5 57.6h1.5v1.2h-1.5zM142.4 30.1h4v2h-4zM146.2 25.9h1.5v3h-1.5zM147.7 35.6h4v3h-4zM150.5 42.5h4v3h-4zM143.1 39.7h4v3h-4zM133.4 34.6h2.5v2h-2.5zM141.1 45.1h1.5v3h-1.5zM152.6 64.9h2.5v1.2h-2.5zM138.1 71.5h1.5v1.2h-1.5zM170.5 68.4h4v3h-4zM146.1 54.1h2.5v2h-2.5zM162.6 55.6h2.5v1.2h-2.5zM146.8 75.6h2.5v2h-2.5zM143.1 63.1h2.5v3h-2.5zM157.6 53.9h4v2h-4zM158.9 69.7h4v3h-4zM142 59.8h1.5v2h-1.5zM148.3 69.4h1.5v2h-1.5zM138.3 59.6h1.5v1.2h-1.5zM157.8 57.2h1.5v1.2h-1.5zM156.6 58.9h1.5v3h-1.5zM140.3 67.5h1.5v1.2h-1.5zM153.7 75.4h4v1.2h-4zM141.2 62.9h4v1.2h-4zM151.6 59.1h4v1.2h-4zM138.2 71.6h4v1.2h-4zM169.6 75.8h1.5v2h-1.5zM147.4 59.3h1.5v2h-1.5zM176.9 67.2h2.5v3h-2.5zM151.6 53.1h1.5v3h-1.5zM167.3 75.8h2.5v2h-2.5zM154.7 74.5h2.5v3h-2.5zM174.1 63h2.5v3h-2.5zM160.1 68.7h1.5v3h-1.5zM149.3 65.6h1.5v2h-1.5zM157.6 72.9h1.5v2h-1.5zM143.1 76.5h2.5v2h-2.5zM171 56.2h1.5v3h-1.5zM154.2 74h1.5v3h-1.5zM153.6 63.8h2.5v3h-2.5zM147.4 71.9h2.5v1.2h-2.5zM168.2 56.1h2.5v2h-2.5zM16 48h1.5v3h-1.5zM17.1 40.5h4v2h-4zM37.1 40.7h1.5v3h-1.5zM13.4 55.9h2.5v3h-2.5zM26.6 52.2h2.5v3h-2.5zM29.6 45.7h2.5v2h-2.5zM18.4 50.5h2.5v3h-2.5zM19.1 51.1h4v3h-4zM22.5 46.6h1.5v3h-1.5zM30.4 40.9h2.5v1.2h-2.5zM30 39.7h4v2h-4zM44.7 50.4h1.5v2h-1.5zM48.2 51.2h4v3h-4zM56.4 50.5h4v1.2h-4zM61.9 56.4h1.5v3h-1.5zM40 56.6h4v1.2h-4zM54.9 55.4h4v2h-4zM171.8 109.4h4v1.2h-4zM184.7 95.6h2.5v2h-2.5zM173.5 92.2h1.5v1.2h-1.5zM185.5 102.5h1.5v2h-1.5zM170.5 109.1h4v1.2h-4zM191 93.6h1.5v2h-1.5zM182.6 108.6h1.5v2h-1.5zM183.3 111.1h2.5v2h-2.5zM183.7 103.1h2.5v2h-2.5zM165.7 111h1.5v3h-1.5zM155.7 20.8h2.5v1.2h-2.5zM165 23h1.5v1.2h-1.5zM169 24.3h1.5v2h-1.5zM32.8 114.1h2.5v2h-2.5zM123.2 77.8h4v1.2h-4zM120.3 63.6h2.5v3h-2.5zM129.2 77.6h2.5v3h-2.5z" fill="#300000"/><path d="M24.9 12.8a2.7 2.7 0 1 0 5.4 0a2.7 2.7 0 1 0 -5.4 0zM10.1 31.3a2.7 2.7 0 1 0 5.4 0a2.7 2.7 0 1 0 -5.4 0zM27.7 97a2.7 2.7 0 1 0 5.4 0a2.7 2.7 0 1 0 -5.4 0zM22.1 116a2.7 2.7 0 1 0 5.4 0a2.7 2.7 0 1 0 -5.4 0zM8.3 88.7a2.7 2.7 0 1 0 5.4 0a2.7 2.7 0 1 0 -5.4 0zM175.3 22a2.7 2.7 0 1 0 5.4 0a2.7 2.7 0 1 0 -5.4 0zM189.3 41a2.7 2.7 0 1 0 5.4 0a2.7 2.7 0 1 0 -5.4 0zM192.3 97.6a2.7 2.7 0 1 0 5.4 0a2.7 2.7 0 1 0 -5.4 0zM193.3 12a2.7 2.7 0 1 0 5.4 0a2.7 2.7 0 1 0 -5.4 0zM135.3 117a2.7 2.7 0 1 0 5.4 0a2.7 2.7 0 1 0 -5.4 0zM157.3 111a2.7 2.7 0 1 0 5.4 0a2.7 2.7 0 1 0 -5.4 0zM67.3 13a2.7 2.7 0 1 0 5.4 0a2.7 2.7 0 1 0 -5.4 0zM59.3 80a2.7 2.7 0 1 0 5.4 0a2.7 2.7 0 1 0 -5.4 0zM109.3 40a2.7 2.7 0 1 0 5.4 0a2.7 2.7 0 1 0 -5.4 0zM147.3 88a2.7 2.7 0 1 0 5.4 0a2.7 2.7 0 1 0 -5.4 0zM37.3 106a2.7 2.7 0 1 0 5.4 0a2.7 2.7 0 1 0 -5.4 0zM88.3 82a2.7 2.7 0 1 0 5.4 0a2.7 2.7 0 1 0 -5.4 0z" fill="#f5b800"/><path d="M26.4 12.8a1.2 1.2 0 1 0 2.4 0a1.2 1.2 0 1 0 -2.4 0zM11.6 31.3a1.2 1.2 0 1 0 2.4 0a1.2 1.2 0 1 0 -2.4 0zM29.2 97a1.2 1.2 0 1 0 2.4 0a1.2 1.2 0 1 0 -2.4 0zM23.6 116a1.2 1.2 0 1 0 2.4 0a1.2 1.2 0 1 0 -2.4 0zM9.8 88.7a1.2 1.2 0 1 0 2.4 0a1.2 1.2 0 1 0 -2.4 0zM176.8 22a1.2 1.2 0 1 0 2.4 0a1.2 1.2 0 1 0 -2.4 0zM190.8 41a1.2 1.2 0 1 0 2.4 0a1.2 1.2 0 1 0 -2.4 0zM193.8 97.6a1.2 1.2 0 1 0 2.4 0a1.2 1.2 0 1 0 -2.4 0zM194.8 12a1.2 1.2 0 1 0 2.4 0a1.2 1.2 0 1 0 -2.4 0zM136.8 117a1.2 1.2 0 1 0 2.4 0a1.2 1.2 0 1 0 -2.4 0zM158.8 111a1.2 1.2 0 1 0 2.4 0a1.2 1.2 0 1 0 -2.4 0zM68.8 13a1.2 1.2 0 1 0 2.4 0a1.2 1.2 0 1 0 -2.4 0zM60.8 80a1.2 1.2 0 1 0 2.4 0a1.2 1.2 0 1 0 -2.4 0zM110.8 40a1.2 1.2 0 1 0 2.4 0a1.2 1.2 0 1 0 -2.4 0zM148.8 88a1.2 1.2 0 1 0 2.4 0a1.2 1.2 0 1 0 -2.4 0zM38.8 106a1.2 1.2 0 1 0 2.4 0a1.2 1.2 0 1 0 -2.4 0zM89.8 82a1.2 1.2 0 1 0 2.4 0a1.2 1.2 0 1 0 -2.4 0z" fill="#d08a00"/><path d="M21.6 65.5a2.3 2.3 0 1 0 4.6 0a2.3 2.3 0 1 0 -4.6 0zM25.3 23.9a2.3 2.3 0 1 0 4.6 0a2.3 2.3 0 1 0 -4.6 0zM176.7 25a2.3 2.3 0 1 0 4.6 0a2.3 2.3 0 1 0 -4.6 0zM179.7 67a2.3 2.3 0 1 0 4.6 0a2.3 2.3 0 1 0 -4.6 0zM97.7 30a2.3 2.3 0 1 0 4.6 0a2.3 2.3 0 1 0 -4.6 0zM57.7 100a2.3 2.3 0 1 0 4.6 0a2.3 2.3 0 1 0 -4.6 0zM163.7 40a2.3 2.3 0 1 0 4.6 0a2.3 2.3 0 1 0 -4.6 0z" fill="#00b400"/><path d="M194 105a2 2 0 1 0 4 0a2 2 0 1 0 -4 0zM176 38a2 2 0 1 0 4 0a2 2 0 1 0 -4 0zM6 18a2 2 0 1 0 4 0a2 2 0 1 0 -4 0z" fill="#000"/></g><g transform="translate(809,597) rotate(180)"><rect x="0" y="0" width="206" height="120" fill="#ff0000" stroke="#f4f4f4" stroke-width="1.1"/><path d="M14 5.8H190Q201 5.8 201 16V106M5.5 84V16Q5.5 5.8 16 5.8" fill="none" stroke="#a05a10" stroke-width="2"/><path d="M21 94V117M185 20V115" fill="none" stroke="#8a4a00" stroke-width="1"/><rect x="44" y="12.5" width="118" height="8" fill="#00b400"/><rect x="31" y="116" width="141" height="3.6" fill="#00b400"/><path d="M5.5 82V94H24V86H9V82Z" fill="#00b400"/><path d="M197.6 83H200.5V94.4H192V88.6H197.6Z" fill="#00b400"/><path d="M21 37L41.5 36L47 27.6H118" fill="none" stroke="#3c0000" stroke-width="4.4" stroke-linejoin="round"/><path d="M21 37L41.5 36L47 27.6H118" fill="none" stroke="#ff0000" stroke-width="2.2" stroke-linejoin="round"/><path d="M76 28H128L133 33V78L166 113" fill="none" stroke="#3c0000" stroke-width="4.4" stroke-linejoin="round"/><path d="M76 28H128L133 33V78L166 113" fill="none" stroke="#ff0000" stroke-width="2.2" stroke-linejoin="round"/><path d="M48.5 43V84" fill="none" stroke="#3c0000" stroke-width="5.2" stroke-linejoin="round"/><path d="M48.5 43V84" fill="none" stroke="#ff0000" stroke-width="2" stroke-linejoin="round"/><path d="M44 50L48.5 43M48.5 84L44 92" fill="none" stroke="#3c0000" stroke-width="4.0" stroke-linejoin="round"/><path d="M44 50L48.5 43M48.5 84L44 92" fill="none" stroke="#ff0000" stroke-width="1.6" stroke-linejoin="round"/><path d="M68 47L93 32M74 49L99 34" fill="none" stroke="#3c0000" stroke-width="3.4000000000000004" stroke-linejoin="round"/><path d="M68 47L93 32M74 49L99 34" fill="none" stroke="#ff0000" stroke-width="1.6" stroke-linejoin="round"/><path d="M58 67.5H75Q78 70.5 75 73.5H58Q55 70.5 58 67.5Z" fill="none" stroke="#3c0000" stroke-width="2.8" stroke-linejoin="round"/><path d="M58 67.5H75Q78 70.5 75 73.5H58Q55 70.5 58 67.5Z" fill="none" stroke="#ff0000" stroke-width="1.4" stroke-linejoin="round"/><path d="M170 109H150L140 100" fill="none" stroke="#3c0000" stroke-width="3.4000000000000004" stroke-linejoin="round"/><path d="M170 109H150L140 100" fill="none" stroke="#ff0000" stroke-width="1.6" stroke-linejoin="round"/><path d="M52.6 43V108" fill="none" stroke="#3c0000" stroke-width="1.4"/><path d="M145 35V62" fill="none" stroke="#3c0000" stroke-width="1.4"/><path d="M118 64V80" fill="none" stroke="#3c0000" stroke-width="1.4"/><path d="M96 70H128" fill="none" stroke="#3c0000" stroke-width="1.4"/><path d="M176 45V100" fill="none" stroke="#3c0000" stroke-width="1.4"/><rect x="53.5" y="33" width="3.8" height="10.5" fill="#1a0000"/><path d="M84 96H96V89H137V108H84Z" fill="none" stroke="#c87800" stroke-width="1.6"/><rect x="98" y="95" width="9" height="4.5" fill="#000"/><rect x="124" y="92" width="12" height="15" fill="#f5b800"/><rect x="126" y="94" width="3" height="3" fill="#c89000"/><path d="M87 103Q92 99 100 102T113 102" fill="none" stroke="#f5b800" stroke-width="1.2"/><path d="M97.2 35.4h1.3v1.3h-1.3zM100.4 35.7h2.6v1.3h-2.6zM118.9 37h3.2v1.3h-3.2zM120.3 41h1.3v2.2h-1.3zM94.5 53.6h3.2v2.2h-3.2zM110 42.9h1.3v2.2h-1.3zM101.9 56.2h1.6v1.3h-1.6zM112.9 39.9h3.2v1.6h-3.2zM121.1 51.5h1.3v1.3h-1.3zM104.1 38h2.6v1.6h-2.6zM96 42.4h2.6v1.3h-2.6zM119.5 56.7h1.3v1.3h-1.3zM114.4 41.4h2.6v1.6h-2.6zM113.7 55.3h2.6v1.6h-2.6zM87.9 36.8h2v1.3h-2zM87.8 43.6h1.6v1.6h-1.6zM120.6 40.7h2v2.2h-2zM121.6 57h1.6v1.3h-1.6zM90.9 39.6h3.2v1.3h-3.2zM92.3 34.1h2v2.2h-2zM98.7 43.5h2.6v1.3h-2.6zM89 57.6h1.3v1.6h-1.3zM108.2 36.5h3.2v1.3h-3.2zM124.6 48.7h1.6v2.2h-1.6zM102.3 36.8h2.6v1.6h-2.6zM102.7 36.1h2v2.2h-2zM92.4 53.9h1.3v1.3h-1.3zM124.7 46.7h3.2v1.3h-3.2zM104.4 55.8h1.6v2.2h-1.6zM118.5 51.8h3.2v1.6h-3.2zM96.7 34.7h2v1.6h-2zM126.4 56.9h1.6v1.3h-1.6zM90.7 38.7h3.2v2.2h-3.2zM100.4 49.3h2.6v1.6h-2.6zM81.3 48.2h1.6v2.2h-1.6zM105.8 37.1h1.3v2.2h-1.3zM81.3 39.1h3.2v1.6h-3.2zM92.2 44.1h2v1.6h-2zM111.1 53.6h3.2v1.3h-3.2zM105 46.6h2.6v1.3h-2.6zM108.6 52.6h1.6v1.6h-1.6zM109.1 36.9h3.2v2.2h-3.2zM106.1 52.8h3.2v1.3h-3.2zM108.8 46.1h2v1.6h-2zM103.9 53.4h1.6v2.2h-1.6zM119.5 37.3h2.6v1.6h-2.6zM83.4 39.8h2v1.3h-2zM91.9 37.3h1.3v1.6h-1.3zM113.2 57.9h2.6v1.3h-2.6zM96.8 36.2h2v2.2h-2zM101.6 50.9h3.2v2.2h-3.2zM93.9 57.1h1.6v1.3h-1.6zM99.1 46.9h2.6v2.2h-2.6zM122.1 40.5h1.3v1.6h-1.3zM83.9 54.5h1.3v1.6h-1.3zM80.5 57.9h2v2.2h-2zM86.1 46.6h1.3v1.3h-1.3zM105 38.9h1.6v1.6h-1.6zM96.3 34.4h1.3v1.3h-1.3zM114.5 47.2h2.6v1.3h-2.6zM103.3 54h3.2v1.6h-3.2zM112.3 57.6h1.6v1.6h-1.6zM109.4 55.1h1.3v1.3h-1.3zM147 32.8h2v2.2h-2zM138.1 30.7h1.6v1.6h-1.6zM138.1 46.2h2v1.3h-2zM133 32.8h3.2v2.2h-3.2zM137.2 35.6h2v1.3h-2zM136 37.5h2v1.6h-2zM151.7 42h2v2.2h-2zM150.3 40.4h2.6v2.2h-2.6zM147.3 39.9h1.3v1.3h-1.3zM135.8 32.3h2.6v2.2h-2.6zM134.1 24.4h1.6v1.6h-1.6zM138.5 34.5h3.2v2.2h-3.2zM150 43.5h1.6v1.3h-1.6zM148.5 46.4h2.6v1.3h-2.6zM146.5 25.8h2v2.2h-2zM148.6 31h1.3v1.6h-1.3zM139.1 35.9h2.6v1.3h-2.6zM153.9 36.6h1.3v1.6h-1.3zM134.9 41.2h2v1.3h-2zM145.7 38.5h1.3v2.2h-1.3zM167.1 62.8h1.3v1.6h-1.3zM166.5 75.4h2v1.3h-2zM153.7 78h2v1.6h-2zM168.2 74.2h1.3v2.2h-1.3zM149.4 76.3h2v1.6h-2zM158.4 56.9h2.6v1.3h-2.6zM174.5 66.3h2.6v1.6h-2.6zM164.2 59.8h2.6v1.3h-2.6zM144.7 56.2h2.6v2.2h-2.6zM143.6 57h2v2.2h-2zM141.6 58.2h3.2v1.3h-3.2zM173.5 71.5h2.6v2.2h-2.6zM159 61.8h1.3v1.6h-1.3zM149.1 77.2h3.2v2.2h-3.2zM163.2 74.4h2v1.3h-2zM153.4 68.8h2v1.3h-2zM176.9 58.5h1.6v1.3h-1.6zM163.9 71.9h3.2v1.3h-3.2zM138.1 55.3h1.3v2.2h-1.3zM148.4 72.6h3.2v1.6h-3.2zM177.9 59.2h1.6v1.6h-1.6zM159.1 66.2h2.6v2.2h-2.6zM164 53.4h2.6v1.3h-2.6zM139.4 60.8h2.6v1.3h-2.6zM157.8 56.9h2.6v2.2h-2.6zM138.9 67.5h1.3v1.3h-1.3zM177.9 76.2h1.6v2.2h-1.6zM175.4 71.4h2.6v1.6h-2.6zM177.4 63.5h1.3v1.6h-1.3zM153.2 72h2.6v1.3h-2.6zM140 64.3h2.6v1.3h-2.6zM150.9 71.2h2.6v1.3h-2.6zM170.5 71.9h1.3v1.6h-1.3zM140.5 75.9h1.3v2.2h-1.3zM148.5 70.6h2v1.6h-2zM139 58.1h2.6v1.6h-2.6zM151.1 60.3h3.2v1.3h-3.2zM158.5 62.2h2.6v1.3h-2.6zM164 64.5h1.6v1.6h-1.6zM173.3 77.7h1.3v1.3h-1.3zM169.2 59.6h2v1.6h-2zM148.2 58.8h1.6v1.3h-1.6zM140.6 58.5h3.2v1.3h-3.2zM164 54.6h1.3v1.3h-1.3zM138.2 75h2.6v1.6h-2.6zM139.6 59.6h1.6v2.2h-1.6zM172.6 63.7h1.3v1.3h-1.3zM163.5 70.5h1.3v1.6h-1.3zM165.1 56.8h1.6v1.3h-1.6zM169.8 66.2h1.3v1.6h-1.3zM164.6 56h1.6v1.6h-1.6zM165.8 62.7h2v1.6h-2zM176.1 60.1h2v1.6h-2zM145.9 70.9h1.3v1.6h-1.3zM173.3 64h1.3v1.3h-1.3zM162.9 61.6h1.6v1.6h-1.6zM140.1 76.1h3.2v2.2h-3.2zM146.7 62.4h2.6v1.6h-2.6zM154.8 67.1h2v1.6h-2zM158.1 56.6h2.6v1.6h-2.6zM170.4 62.4h2v1.6h-2zM152.6 72.9h1.3v1.3h-1.3zM143.3 75h1.6v2.2h-1.6zM169.5 76.2h2v2.2h-2zM19.4 48.1h1.3v1.3h-1.3zM39.7 49.7h1.3v1.6h-1.3zM20.1 50.8h2v1.3h-2zM12.1 44.8h2v2.2h-2zM18.3 49.8h1.6v1.6h-1.6zM29.5 47.4h1.6v2.2h-1.6zM34.7 58.3h3.2v1.6h-3.2zM28.7 49.7h3.2v2.2h-3.2zM25.8 40.6h1.3v2.2h-1.3zM12.7 41.1h1.3v1.3h-1.3zM29.2 51.4h2.6v1.3h-2.6zM31.9 42.9h2.6v2.2h-2.6zM34.1 48.5h1.6v1.3h-1.6zM36.6 37.3h1.6v2.2h-1.6zM66.5 56.6h2.6v2.2h-2.6zM58.5 56.7h1.6v2.2h-1.6zM63.8 56.1h3.2v1.3h-3.2zM54.8 50.5h1.3v1.3h-1.3zM59.6 49.6h2v1.3h-2zM65.4 50h1.3v1.3h-1.3zM62.1 54.7h1.3v1.3h-1.3zM41.7 55.8h2v1.6h-2zM50.9 49.2h2v1.3h-2zM59 52.3h3.2v2.2h-3.2zM51.2 56h1.3v2.2h-1.3zM43.8 49h1.3v1.3h-1.3zM55.6 57.6h3.2v1.3h-3.2zM42.1 54.7h3.2v1.3h-3.2zM56.6 52.2h2.6v2.2h-2.6zM166.5 112.4h1.6v1.6h-1.6zM171.6 112.7h2.6v2.2h-2.6zM170.8 102.6h3.2v2.2h-3.2zM165 105.4h2.6v2.2h-2.6zM180.1 99.4h2v2.2h-2zM170.9 114h1.3v1.3h-1.3zM191.9 94.3h1.6v1.6h-1.6zM185.3 102h1.3v1.6h-1.3zM170 100.9h2.6v1.6h-2.6zM168.1 105.9h1.6v1.6h-1.6zM183.7 106.8h2v1.6h-2zM182.2 94.3h2.6v2.2h-2.6zM164.6 111.7h1.6v2.2h-1.6zM166.9 105.2h2.6v2.2h-2.6zM164.5 110.2h2v1.6h-2zM171.3 100.8h1.3v1.6h-1.3zM192.8 114.1h1.6v1.3h-1.6zM171.1 98.9h2.6v2.2h-2.6zM182.5 107.2h2v1.6h-2zM188.1 106.6h1.3v1.3h-1.3zM191.6 107.1h1.3v2.2h-1.3zM158.3 22.8h3.2v2.2h-3.2zM169.8 20.6h2.6v2.2h-2.6zM185.3 24.7h1.6v1.3h-1.6zM168.9 24.7h1.6v2.2h-1.6zM169.7 24h1.3v1.3h-1.3zM183.6 23.6h2v1.6h-2zM175.5 25.6h3.2v1.3h-3.2zM177.3 29.2h1.3v2.2h-1.3zM169.4 27.1h1.6v2.2h-1.6zM166.6 19.5h2v1.6h-2zM167.4 23.1h2v1.6h-2zM164.2 23.9h2v2.2h-2zM163.8 20.4h1.3v1.6h-1.3zM157.7 26.6h1.3v1.3h-1.3zM27 108.3h3.2v1.3h-3.2zM27 101.6h2.6v2.2h-2.6zM38 100.9h3.2v2.2h-3.2zM34.9 113h1.3v2.2h-1.3zM15.4 113.1h2v2.2h-2zM36.3 112.9h1.3v1.6h-1.3zM15.6 108.5h1.3v1.6h-1.3zM32 100.6h2.6v2.2h-2.6zM35.9 106.1h2.6v2.2h-2.6zM116.5 62.1h1.6v2.2h-1.6zM106.5 63h2v2.2h-2zM108.8 73.9h2v1.3h-2zM121.5 60.3h3.2v1.3h-3.2zM111.7 67.8h2.6v2.2h-2.6zM101.8 69.2h2.6v1.6h-2.6zM104.9 80h2.6v1.6h-2.6zM123.5 74.2h1.3v2.2h-1.3zM121.8 60.4h2v2.2h-2zM112.9 82.2h2.6v2.2h-2.6zM123.1 65.9h1.3v1.6h-1.3zM58 51.9h1.4v1.4h-1.4zM119.5 92.9h1.4v1.4h-1.4zM176.6 12.4h1.4v1.4h-1.4zM166.3 92.4h1.4v1.4h-1.4zM172.8 67.5h1.4v1.4h-1.4zM60 96.5h1.4v1.4h-1.4zM161.3 79.2h1.4v1.4h-1.4zM181.6 44.1h1.4v1.4h-1.4zM24.2 65.6h1.4v1.4h-1.4zM159.5 28.8h1.4v1.4h-1.4zM150.5 104.9h1.4v1.4h-1.4zM52.5 71.1h1.4v1.4h-1.4zM136.8 56.4h1.4v1.4h-1.4zM47.3 34.5h1.4v1.4h-1.4zM150.7 90.3h1.4v1.4h-1.4zM95.3 17.1h1.4v1.4h-1.4zM161.2 88.3h1.4v1.4h-1.4zM52.2 68.3h1.4v1.4h-1.4zM178.4 100h1.4v1.4h-1.4zM107.2 57.6h1.4v1.4h-1.4zM120 27.7h1.4v1.4h-1.4zM44.5 26.8h1.4v1.4h-1.4zM141.2 45.7h1.4v1.4h-1.4zM115.2 49.9h1.4v1.4h-1.4zM106.3 23.5h1.4v1.4h-1.4zM16.5 111.7h1.4v1.4h-1.4zM79.1 19h1.4v1.4h-1.4zM128.2 89.9h1.4v1.4h-1.4zM37.7 70.1h1.4v1.4h-1.4zM73.5 62h1.4v1.4h-1.4zM11.9 11.5h1.4v1.4h-1.4zM196.2 98.1h1.4v1.4h-1.4zM100.4 67h1.4v1.4h-1.4zM57.7 89h1.4v1.4h-1.4zM88.9 106.4h1.4v1.4h-1.4zM153.8 93.2h1.4v1.4h-1.4zM191.1 34.4h1.4v1.4h-1.4zM15.2 28.9h1.4v1.4h-1.4zM42.3 16.7h1.4v1.4h-1.4zM17.7 66h1.4v1.4h-1.4zM173.4 55.7h1.4v1.4h-1.4zM188 102.6h1.4v1.4h-1.4zM20.2 70.2h1.4v1.4h-1.4zM83.5 20.5h1.4v1.4h-1.4zM190.3 34.7h1.4v1.4h-1.4zM115.3 74.6h1.4v1.4h-1.4zM189.7 77.7h1.4v1.4h-1.4zM82.7 54.6h1.4v1.4h-1.4zM38.3 108.4h1.4v1.4h-1.4zM196.4 31.1h1.4v1.4h-1.4zM15.3 34.6h1.4v1.4h-1.4zM74.9 101.9h1.4v1.4h-1.4zM179.9 95.1h1.4v1.4h-1.4zM16.9 89.8h1.4v1.4h-1.4zM142.8 75.3h1.4v1.4h-1.4zM195.2 13.8h1.4v1.4h-1.4zM35.5 86.5h1.4v1.4h-1.4zM186.5 78.4h1.4v1.4h-1.4zM64.8 69.5h1.4v1.4h-1.4zM152 19h1.4v1.4h-1.4zM69.5 34.7h1.4v1.4h-1.4zM31.6 58.1h1.4v1.4h-1.4zM40 32.8h1.4v1.4h-1.4zM35.2 78.5h1.4v1.4h-1.4zM10.4 82.6h1.4v1.4h-1.4zM45.1 11.7h1.4v1.4h-1.4zM184.3 30.9h1.4v1.4h-1.4zM185.5 98.1h1.4v1.4h-1.4zM176.9 22.5h1.4v1.4h-1.4zM93 18.1h1.4v1.4h-1.4zM167 31h5v6h-5zM38 26h5v6h-5z" fill="#f5b800"/><path d="M95.2 37.6h4v2.5h-4zM82.8 38.9h6v3.5h-6zM106.6 56.9h4v3.5h-4zM115.6 41.2h4v3.5h-4zM105.5 46.1h4v2.5h-4zM119.5 45.5h4v2.5h-4zM98.9 56.7h4v2.5h-4zM118.8 57.5h6v2.5h-6zM122.2 37.7h6v2.5h-6zM121.6 37.9h4v2.5h-4zM153.7 27.4h4v2.5h-4zM134.9 36.1h6v3.5h-6zM134.3 30.2h4v3.5h-4zM144.4 76.7h6v3.5h-6zM149.3 58.6h6v3.5h-6zM166.6 77h6v2.5h-6zM145.3 72.9h4v2.5h-4zM141.9 65h6v2.5h-6zM147.4 62.8h4v2.5h-4zM142.9 58.4h4v2.5h-4zM173.4 73.9h6v2.5h-6zM163.5 54.1h4v2.5h-4zM168.1 75.3h4v2.5h-4zM172.3 77.9h4v2.5h-4zM37.1 53.1h4v2.5h-4zM15.7 42h4v2.5h-4zM16.2 39.1h6v3.5h-6zM26.5 51.1h6v2.5h-6zM26.2 38.4h6v2.5h-6zM39.9 50.2h4v2.5h-4zM52.3 51.6h6v2.5h-6zM48.7 49.9h4v3.5h-4zM46.9 50.9h6v2.5h-6zM170.7 99.7h4v2.5h-4zM185 114.4h6v2.5h-6zM184.1 103.5h6v2.5h-6zM184.3 105.5h4v2.5h-4zM171.3 97h4v3.5h-4zM178.9 113.5h6v2.5h-6zM190.5 106.5h6v2.5h-6zM192.9 109.5h6v3.5h-6zM186.7 97.3h6v3.5h-6zM174.3 27.4h6v2.5h-6zM26.3 102.2h4v2.5h-4zM16.2 109.5h4v2.5h-4zM100.5 60.1h4v2.5h-4zM117.1 71.3h4v3.5h-4z" fill="none" stroke="#f5b800" stroke-width="0.9"/><path d="M107.1 43.5h1.5v3h-1.5zM81.8 50h4v2h-4zM114.7 43.5h2.5v1.2h-2.5zM122.3 52.7h4v2h-4zM97.7 49.2h4v2h-4zM92.2 50.6h2.5v3h-2.5zM122.8 52.8h2.5v1.2h-2.5zM115.2 37.3h1.5v1.2h-1.5zM91.7 40.6h4v2h-4zM106.4 52.2h2.5v2h-2.5zM104.6 55h4v1.2h-4zM84 40.5h1.5v2h-1.5zM115.5 53.7h4v2h-4zM95.4 40.7h1.5v2h-1.5zM92.3 38.3h4v2h-4zM123.9 36.6h2.5v3h-2.5zM126.5 57.6h1.5v1.2h-1.5zM142.4 30.1h4v2h-4zM146.2 25.9h1.5v3h-1.5zM147.7 35.6h4v3h-4zM150.5 42.5h4v3h-4zM143.1 39.7h4v3h-4zM133.4 34.6h2.5v2h-2.5zM141.1 45.1h1.5v3h-1.5zM152.6 64.9h2.5v1.2h-2.5zM138.1 71.5h1.5v1.2h-1.5zM170.5 68.4h4v3h-4zM146.1 54.1h2.5v2h-2.5zM162.6 55.6h2.5v1.2h-2.5zM146.8 75.6h2.5v2h-2.5zM143.1 63.1h2.5v3h-2.5zM157.6 53.9h4v2h-4zM158.9 69.7h4v3h-4zM142 59.8h1.5v2h-1.5zM148.3 69.4h1.5v2h-1.5zM138.3 59.6h1.5v1.2h-1.5zM157.8 57.2h1.5v1.2h-1.5zM156.6 58.9h1.5v3h-1.5zM140.3 67.5h1.5v1.2h-1.5zM153.7 75.4h4v1.2h-4zM141.2 62.9h4v1.2h-4zM151.6 59.1h4v1.2h-4zM138.2 71.6h4v1.2h-4zM169.6 75.8h1.5v2h-1.5zM147.4 59.3h1.5v2h-1.5zM176.9 67.2h2.5v3h-2.5zM151.6 53.1h1.5v3h-1.5zM167.3 75.8h2.5v2h-2.5zM154.7 74.5h2.5v3h-2.5zM174.1 63h2.5v3h-2.5zM160.1 68.7h1.5v3h-1.5zM149.3 65.6h1.5v2h-1.5zM157.6 72.9h1.5v2h-1.5zM143.1 76.5h2.5v2h-2.5zM171 56.2h1.5v3h-1.5zM154.2 74h1.5v3h-1.5zM153.6 63.8h2.5v3h-2.5zM147.4 71.9h2.5v1.2h-2.5zM168.2 56.1h2.5v2h-2.5zM16 48h1.5v3h-1.5zM17.1 40.5h4v2h-4zM37.1 40.7h1.5v3h-1.5zM13.4 55.9h2.5v3h-2.5zM26.6 52.2h2.5v3h-2.5zM29.6 45.7h2.5v2h-2.5zM18.4 50.5h2.5v3h-2.5zM19.1 51.1h4v3h-4zM22.5 46.6h1.5v3h-1.5zM30.4 40.9h2.5v1.2h-2.5zM30 39.7h4v2h-4zM44.7 50.4h1.5v2h-1.5zM48.2 51.2h4v3h-4zM56.4 50.5h4v1.2h-4zM61.9 56.4h1.5v3h-1.5zM40 56.6h4v1.2h-4zM54.9 55.4h4v2h-4zM171.8 109.4h4v1.2h-4zM184.7 95.6h2.5v2h-2.5zM173.5 92.2h1.5v1.2h-1.5zM185.5 102.5h1.5v2h-1.5zM170.5 109.1h4v1.2h-4zM191 93.6h1.5v2h-1.5zM182.6 108.6h1.5v2h-1.5zM183.3 111.1h2.5v2h-2.5zM183.7 103.1h2.5v2h-2.5zM165.7 111h1.5v3h-1.5zM155.7 20.8h2.5v1.2h-2.5zM165 23h1.5v1.2h-1.5zM169 24.3h1.5v2h-1.5zM32.8 114.1h2.5v2h-2.5zM123.2 77.8h4v1.2h-4zM120.3 63.6h2.5v3h-2.5zM129.2 77.6h2.5v3h-2.5z" fill="#300000"/><path d="M24.9 12.8a2.7 2.7 0 1 0 5.4 0a2.7 2.7 0 1 0 -5.4 0zM10.1 31.3a2.7 2.7 0 1 0 5.4 0a2.7 2.7 0 1 0 -5.4 0zM27.7 97a2.7 2.7 0 1 0 5.4 0a2.7 2.7 0 1 0 -5.4 0zM22.1 116a2.7 2.7 0 1 0 5.4 0a2.7 2.7 0 1 0 -5.4 0zM8.3 88.7a2.7 2.7 0 1 0 5.4 0a2.7 2.7 0 1 0 -5.4 0zM175.3 22a2.7 2.7 0 1 0 5.4 0a2.7 2.7 0 1 0 -5.4 0zM189.3 41a2.7 2.7 0 1 0 5.4 0a2.7 2.7 0 1 0 -5.4 0zM192.3 97.6a2.7 2.7 0 1 0 5.4 0a2.7 2.7 0 1 0 -5.4 0zM193.3 12a2.7 2.7 0 1 0 5.4 0a2.7 2.7 0 1 0 -5.4 0zM135.3 117a2.7 2.7 0 1 0 5.4 0a2.7 2.7 0 1 0 -5.4 0zM157.3 111a2.7 2.7 0 1 0 5.4 0a2.7 2.7 0 1 0 -5.4 0zM67.3 13a2.7 2.7 0 1 0 5.4 0a2.7 2.7 0 1 0 -5.4 0zM59.3 80a2.7 2.7 0 1 0 5.4 0a2.7 2.7 0 1 0 -5.4 0zM109.3 40a2.7 2.7 0 1 0 5.4 0a2.7 2.7 0 1 0 -5.4 0zM147.3 88a2.7 2.7 0 1 0 5.4 0a2.7 2.7 0 1 0 -5.4 0zM37.3 106a2.7 2.7 0 1 0 5.4 0a2.7 2.7 0 1 0 -5.4 0zM88.3 82a2.7 2.7 0 1 0 5.4 0a2.7 2.7 0 1 0 -5.4 0z" fill="#f5b800"/><path d="M26.4 12.8a1.2 1.2 0 1 0 2.4 0a1.2 1.2 0 1 0 -2.4 0zM11.6 31.3a1.2 1.2 0 1 0 2.4 0a1.2 1.2 0 1 0 -2.4 0zM29.2 97a1.2 1.2 0 1 0 2.4 0a1.2 1.2 0 1 0 -2.4 0zM23.6 116a1.2 1.2 0 1 0 2.4 0a1.2 1.2 0 1 0 -2.4 0zM9.8 88.7a1.2 1.2 0 1 0 2.4 0a1.2 1.2 0 1 0 -2.4 0zM176.8 22a1.2 1.2 0 1 0 2.4 0a1.2 1.2 0 1 0 -2.4 0zM190.8 41a1.2 1.2 0 1 0 2.4 0a1.2 1.2 0 1 0 -2.4 0zM193.8 97.6a1.2 1.2 0 1 0 2.4 0a1.2 1.2 0 1 0 -2.4 0zM194.8 12a1.2 1.2 0 1 0 2.4 0a1.2 1.2 0 1 0 -2.4 0zM136.8 117a1.2 1.2 0 1 0 2.4 0a1.2 1.2 0 1 0 -2.4 0zM158.8 111a1.2 1.2 0 1 0 2.4 0a1.2 1.2 0 1 0 -2.4 0zM68.8 13a1.2 1.2 0 1 0 2.4 0a1.2 1.2 0 1 0 -2.4 0zM60.8 80a1.2 1.2 0 1 0 2.4 0a1.2 1.2 0 1 0 -2.4 0zM110.8 40a1.2 1.2 0 1 0 2.4 0a1.2 1.2 0 1 0 -2.4 0zM148.8 88a1.2 1.2 0 1 0 2.4 0a1.2 1.2 0 1 0 -2.4 0zM38.8 106a1.2 1.2 0 1 0 2.4 0a1.2 1.2 0 1 0 -2.4 0zM89.8 82a1.2 1.2 0 1 0 2.4 0a1.2 1.2 0 1 0 -2.4 0z" fill="#d08a00"/><path d="M21.6 65.5a2.3 2.3 0 1 0 4.6 0a2.3 2.3 0 1 0 -4.6 0zM25.3 23.9a2.3 2.3 0 1 0 4.6 0a2.3 2.3 0 1 0 -4.6 0zM176.7 25a2.3 2.3 0 1 0 4.6 0a2.3 2.3 0 1 0 -4.6 0zM179.7 67a2.3 2.3 0 1 0 4.6 0a2.3 2.3 0 1 0 -4.6 0zM97.7 30a2.3 2.3 0 1 0 4.6 0a2.3 2.3 0 1 0 -4.6 0zM57.7 100a2.3 2.3 0 1 0 4.6 0a2.3 2.3 0 1 0 -4.6 0zM163.7 40a2.3 2.3 0 1 0 4.6 0a2.3 2.3 0 1 0 -4.6 0z" fill="#00b400"/><path d="M194 105a2 2 0 1 0 4 0a2 2 0 1 0 -4 0zM176 38a2 2 0 1 0 4 0a2 2 0 1 0 -4 0zM6 18a2 2 0 1 0 4 0a2 2 0 1 0 -4 0z" fill="#000"/></g><path d="M587 620H611" stroke="#e00000" stroke-width="1.5"/><path d="M606 617L612 620L606 623" fill="none" stroke="#e00000" stroke-width="1.5"/><rect x="794" y="97" width="21" height="9" fill="#b02020" stroke="#f8f0f0" stroke-width="1"/><circle cx="803.5" cy="103" r="1.6" fill="#fff"/><circle cx="798" cy="103" r="1.3" fill="#e8a040"/><circle cx="809" cy="103" r="1.3" fill="#e8a040"/><rect x="464.3" y="537.3" width="18.6" height="13.3" fill="#b81a50" stroke="#f4e8ee" stroke-width="1"/><line x1="794" y1="97" x2="709" y2="275" stroke="#e8e8e8" stroke-width="1"/><line x1="794" y1="106" x2="709" y2="477" stroke="#e8e8e8" stroke-width="1"/><line x1="815" y1="97" x2="998" y2="275" stroke="#e8e8e8" stroke-width="1"/><line x1="815" y1="106" x2="998" y2="477" stroke="#e8e8e8" stroke-width="1"/><line x1="464" y1="537" x2="88" y2="430" stroke="#e8e8e8" stroke-width="1"/><line x1="483" y1="537" x2="403" y2="430" stroke="#e8e8e8" stroke-width="1"/><line x1="464" y1="550" x2="88" y2="644" stroke="#e8e8e8" stroke-width="1"/><line x1="483" y1="550" x2="403" y2="644" stroke="#e8e8e8" stroke-width="1"/></svg><svg width="1024" height="680"><path d="M8 50.5V33H17.8L19.7 35.8H27.7V40" fill="none" stroke="#e9eef2" stroke-width="1.7" stroke-linecap="round" stroke-linejoin="round"/><path d="M8 50.5L10 40.8H31L28 50.5Z" fill="none" stroke="#e9eef2" stroke-width="1.7" stroke-linecap="round" stroke-linejoin="round"/><path d="M65.5 36.8H58.6V51.2H81V36.8H73.5" fill="none" stroke="#e9eef2" stroke-width="1.7" stroke-dasharray="1.4 1.6"/><path d="M69.2 30.4L64.3 34.9H67.4V41H71V34.9H74.1Z" fill="none" stroke="#e9eef2" stroke-width="1.7" stroke-linecap="round" stroke-linejoin="round"/><path d="M104 45.5H96.6V31.8H118.6V45.5H111" fill="none" stroke="#e9eef2" stroke-width="1.7" stroke-dasharray="1.4 1.6"/><path d="M107.3 52.5L102.3 47.6H105.5V41.2H109.1V47.6H112.3Z" fill="none" stroke="#e9eef2" stroke-width="1.7" stroke-linecap="round" stroke-linejoin="round"/><path d="M141 36V29.8H155.4V52.4H141V46" fill="none" stroke="#e9eef2" stroke-width="1.7" stroke-dasharray="1.4 1.6"/><path d="M134 41.1L139.5 36V39.2H145.2V43H139.5V46.2Z" fill="none" stroke="#e9eef2" stroke-width="1.7" stroke-linecap="round" stroke-linejoin="round"/><path d="M187.2 36V29.8H172.7V52.4H187.2V46" fill="none" stroke="#e9eef2" stroke-width="1.7" stroke-dasharray="1.4 1.6"/><path d="M194.2 41.1L188.7 36V39.2H183V43H188.7V46.2Z" fill="none" stroke="#e9eef2" stroke-width="1.7" stroke-linecap="round" stroke-linejoin="round"/><path d="M222 40.5L232.9 30.3L244.3 40.5M225.3 38.6V52.6H230.4V45H235.5V52.6H241.2V38.6" fill="none" stroke="#e9eef2" stroke-width="1.7" stroke-linecap="round" stroke-linejoin="round"/><path d="M264 52.5H259.4V29.8H282.3V37" fill="none" stroke="#e9eef2" stroke-width="1.7" stroke-dasharray="1.4 1.6"/><circle cx="272.6" cy="43.4" r="7.2" fill="none" stroke="#e9eef2" stroke-width="1.7" stroke-linecap="round" stroke-linejoin="round"/><path d="M277.8 48.6L282 52.6" fill="none" stroke="#e9eef2" stroke-width="1.7" stroke-linecap="round" stroke-linejoin="round"/><path d="M303.2 43.5V33.7A1.6 1.6 0 0 1 306.4 33.7V41.5M306.4 41.5V31.2A1.6 1.6 0 0 1 309.6 31.2V41.5M309.6 41.5V32.3A1.6 1.6 0 0 1 312.8 32.3V42M312.8 42V36A1.6 1.6 0 0 1 316 36V44.5C316 49.5 313.5 52.5 309 52.5C305.5 52.5 304 51 302 48.5L298.8 44A1.6 1.6 0 0 1 301.5 42.2L303.2 44.5" fill="none" stroke="#e9eef2" stroke-width="1.7" stroke-linecap="round" stroke-linejoin="round"/><rect x="345.2" y="30.4" width="12.6" height="12" fill="none" stroke="#e9eef2" stroke-width="1.7" stroke-linecap="round" stroke-linejoin="round"/><rect x="335.6" y="46.2" width="6.4" height="6.4" fill="none" stroke="#e9eef2" stroke-width="1.7" stroke-linecap="round" stroke-linejoin="round"/><path d="M336.5 46L345.5 31.5M342.5 51.5L356.5 42.5" fill="none" stroke="#e9eef2" stroke-width="1.7" stroke-dasharray="1.4 1.6"/><circle cx="383.4" cy="40.5" r="10" fill="none" stroke="#e9eef2" stroke-width="1.7" stroke-linecap="round" stroke-linejoin="round"/><path d="M390.6 47.7L395.3 52.7M376.6 40.5H390.2M383.4 34V47" fill="none" stroke="#e9eef2" stroke-width="1.7" stroke-linecap="round" stroke-linejoin="round"/><circle cx="420.9" cy="40.5" r="10" fill="none" stroke="#e9eef2" stroke-width="1.7" stroke-linecap="round" stroke-linejoin="round"/><path d="M428.1 47.7L432.8 52.7M414.3 40.5H427.6" fill="none" stroke="#e9eef2" stroke-width="1.7" stroke-linecap="round" stroke-linejoin="round"/><circle cx="462" cy="44.5" r="7.3" fill="none" stroke="#e9eef2" stroke-width="1.7" stroke-linecap="round" stroke-linejoin="round"/><path d="M467.3 49.6L471 53" fill="none" stroke="#e9eef2" stroke-width="1.7" stroke-linecap="round" stroke-linejoin="round"/><path d="M450 38A13 13 0 0 1 473.5 34.5" fill="none" stroke="#e9eef2" stroke-width="1.7" stroke-linecap="round" stroke-linejoin="round"/><path d="M448.5 33.5L449.5 39.5L455 37.5" fill="none" stroke="#e9eef2" stroke-width="1.7" stroke-linecap="round" stroke-linejoin="round"/><rect x="495" y="26.5" width="32.5" height="31.8" fill="#6a7c8d"/><path d="M501.4 32.9L520.5 40.5L512 43.8L509.7 50.7Z" fill="none" stroke="#f0a030" stroke-width="1.8" stroke-linejoin="round"/><circle cx="501.6" cy="33" r="2.4" fill="#f7a020"/><path d="M537.6 31.6H554.7V42.8H537.6Z" fill="none" stroke="#e9eef2" stroke-width="1.7" stroke-dasharray="1.4 1.6"/><circle cx="537.6" cy="31.6" r="1.8" fill="#e9eef2"/><circle cx="554.7" cy="31.6" r="1.8" fill="#e9eef2"/><circle cx="537.6" cy="42.8" r="1.8" fill="#e9eef2"/><circle cx="554.7" cy="42.8" r="1.8" fill="#e9eef2"/><path d="M551.6 45.6L559.2 48.8L556 50L554.7 53Z" fill="#e9eef2" stroke="#e9eef2" stroke-width="0.8" stroke-linejoin="round"/><path d="M575.7 40.5L584.6 31.6H595.4V40.5H584.6M575.7 40.5V51.3H584.6V40.5" fill="none" stroke="#e9eef2" stroke-width="1.7" stroke-dasharray="1.4 1.6"/><circle cx="584.6" cy="31.6" r="1.8" fill="#e9eef2"/><circle cx="595.4" cy="31.6" r="1.8" fill="#e9eef2"/><circle cx="595.4" cy="40.5" r="1.8" fill="#e9eef2"/><circle cx="584.6" cy="40.5" r="1.8" fill="#e9eef2"/><circle cx="575.7" cy="40.5" r="1.8" fill="#e9eef2"/><circle cx="575.7" cy="51.3" r="1.8" fill="#e9eef2"/><circle cx="584.6" cy="51.3" r="1.8" fill="#e9eef2"/><path d="M590.3 45.6L596.8 48.8L593.5 50L592.2 53Z" fill="#e9eef2" stroke="#e9eef2" stroke-width="0.8" stroke-linejoin="round"/><path d="M612 40L621 31L624 34.2L629 29.7L634 34.2L629.5 38.7L632.5 41.8L623.5 50.8Z" fill="none" stroke="#e9eef2" stroke-width="1.7" stroke-linecap="round" stroke-linejoin="round"/><path d="M615.5 43.5L619 40M618.5 46.5L621.5 43.5M621.5 49.5L624 47M619 36L628 45" fill="none" stroke="#e9eef2" stroke-width="1.7" stroke-linecap="round" stroke-linejoin="round"/><path d="M664 31.6H683.6V51.3H664Z" fill="none" stroke="#e9eef2" stroke-width="1.7" stroke-dasharray="1.4 1.6"/><path d="M664 31.6L683.6 51.3" fill="none" stroke="#e9eef2" stroke-width="1.7" stroke-linecap="round" stroke-linejoin="round"/><circle cx="664.2" cy="31.8" r="2.1" fill="#e9eef2"/><circle cx="683.4" cy="51.1" r="2.1" fill="#e9eef2"/><path d="M700.2 36.8L707.8 30.3L723 46.9L715.4 52.6Z" fill="none" stroke="#e9eef2" stroke-width="1.7" stroke-linecap="round" stroke-linejoin="round"/><path d="M707 37L709.5 34.8M710 40.5L712.5 38.3M713 44L715.5 41.8M716 47.5L718.5 45.3" fill="none" stroke="#e9eef2" stroke-width="1.7" stroke-linecap="round" stroke-linejoin="round"/><circle cx="753.3" cy="32.9" r="2.4" fill="#e9eef2"/><path d="M759 32.9H771.5" stroke="#e9eef2" stroke-width="2.4"/><path d="M753.5 37.3H771L764.8 44.3V51.8L759.8 50.3V44.3Z" fill="none" stroke="#e9eef2" stroke-width="1.7" stroke-linecap="round" stroke-linejoin="round"/><path d="M800.3 30.3H788.2V52.6H800.3" fill="none" stroke="#e9eef2" stroke-width="1.7" stroke-linecap="round" stroke-linejoin="round"/><path d="M800.3 30.3H810.3V52.6H800.3" fill="none" stroke="#e9eef2" stroke-width="1.7" stroke-dasharray="1.4 1.6"/><path d="M792 41.8C795.5 36.8 803 36.8 807 41.8C803 46.8 795.5 46.8 792 41.8Z" fill="none" stroke="#e9eef2" stroke-width="1.7" stroke-linecap="round" stroke-linejoin="round"/><circle cx="799.4" cy="41.8" r="1.9" fill="#e9eef2"/><path d="M828.9 29.7V52.6M825.7 49.4H849.2" fill="none" stroke="#e9eef2" stroke-width="1.7" stroke-dasharray="1.4 1.6"/><path d="M832.4 45V37.5A7 7 0 0 1 846.4 37.5V45H842.6V37.5A3.2 3.2 0 0 0 836.2 37.5V45Z" fill="none" stroke="#e9eef2" stroke-width="1.7" stroke-linecap="round" stroke-linejoin="round"/><rect x="876.5" y="29.8" width="22.2" height="22.8" rx="2" fill="none" stroke="#e9eef2" stroke-width="1.7" stroke-linecap="round" stroke-linejoin="round"/><path d="M876.5 36.7H898.7M880.3 42.4H894.9M880.3 46.9H894.9" fill="none" stroke="#e9eef2" stroke-width="1.7" stroke-linecap="round" stroke-linejoin="round"/><circle cx="893.6" cy="33.6" r="1.2" fill="#e9eef2"/><rect x="44.3" y="29" width="1.4" height="25.5" fill="#8a99a6"/><rect x="207.60000000000002" y="29" width="1.4" height="25.5" fill="#8a99a6"/><rect x="484.3" y="29" width="1.4" height="25.5" fill="#8a99a6"/><rect x="648.0" y="29" width="1.4" height="25.5" fill="#8a99a6"/><rect x="736.3" y="29" width="1.4" height="25.5" fill="#8a99a6"/><rect x="861.8" y="29" width="1.4" height="25.5" fill="#8a99a6"/></svg><div class="a" style="left:3px;top:72px;font-size:12.5px;color:#c8dbe3">Step</div><div class="a" style="left:32px;top:67px;width:121px;height:23px;background:#f7f8f9"></div><div class="a" style="left:35px;top:71px;font-size:13px;color:#222">panel</div><div class="a" style="left:138px;top:67px;width:1px;height:23px;background:#e2e5e8"></div><svg width="1024" height="680"><path d="M141 75.5L145.5 80L150 75.5" fill="none" stroke="#888" stroke-width="1.2"/></svg><div class="a" style="left:0;top:95.0px;width:154px;height:124.5px;background:#3d6670"></div><div class="a" style="left:0;top:223.3px;width:154px;height:138.3px;background:#3d6670"></div><div class="a" style="left:0;top:366.4px;width:154px;height:184.2px;background:#3d6670"></div><div class="row" style="top:96.0px"><div class="cb" style="background:#fff;height:14.4px"><i></i></div><div class="dk" style="height:14.4px"></div><div class="nm" style="background:#9ad8d6;height:14.4px">fx</div></div><div class="row" style="top:111.4px"><div class="cb" style="background:#fff;height:14.4px"><i></i></div><div class="dk" style="height:14.4px"></div><div class="nm" style="background:#9ad8d6;height:14.4px">bfsmt</div></div><div class="row" style="top:126.9px"><div class="cb" style="background:#fff;height:14.4px"><i></i></div><div class="dk" style="height:14.4px"></div><div class="nm" style="background:#9ad8d6;height:14.4px">bfsmb</div></div><div class="row" style="top:142.3px"><div class="cb" style="background:#fff;height:14.4px"><i></i></div><div class="dk" style="height:14.4px"></div><div class="nm" style="background:#9ad8d6;height:14.4px">smd_t</div></div><div class="row" style="top:157.8px"><div class="cb" style="background:#fff;height:14.4px"><i></i></div><div class="dk" style="height:14.4px"></div><div class="nm" style="background:#9ad8d6;height:14.4px">smd_b</div></div><div class="row" style="top:173.2px"><div class="cb" style="background:#fff;height:14.4px"><i></i></div><div class="dk" style="height:14.4px"></div><div class="nm" style="background:#9ad8d6;height:14.4px">layer_3.gbr</div></div><div class="row" style="top:188.6px"><div class="cb" style="background:#fff;height:14.4px"><i></i></div><div class="dk" style="height:14.4px"></div><div class="nm" style="background:#9ad8d6;height:14.4px">l2+1</div></div><div class="row" style="top:204.1px"><div class="cb" style="background:#fff;height:14.4px"><i></i></div><div class="dk" style="height:14.4px"></div><div class="nm" style="background:#9ad8d6;height:14.4px">l3+1</div></div><div class="row" style="top:224.3px"><div class="cb" style="background:#fff;height:14.3px"><i></i></div><div class="dk" style="height:14.3px"></div><div class="nm" style="background:#ffffff;height:14.3px">sst</div></div><div class="row" style="top:239.6px"><div class="cb" style="background:#fff;height:14.3px"><i></i></div><div class="dk" style="height:14.3px"></div><div class="nm" style="background:#17a086;height:14.3px">smt</div></div><div class="row" style="top:254.8px"><div class="cb" style="background:#fff;height:14.3px"><i></i></div><div class="dk" style="height:14.3px"></div><div class="nm" style="background:#fabf5c;height:14.3px">top</div></div><div class="row" style="top:270.1px"><div class="cb" style="background:#fff;height:14.3px"><i></i></div><div class="dk" style="height:14.3px"></div><div class="nm" style="background:#e2a90f;height:14.3px">l2</div></div><div class="row" style="top:285.3px"><div class="cb" style="background:#fff;height:14.3px"><i></i></div><div class="dk" style="height:14.3px"></div><div class="nm" style="background:#e2a90f;height:14.3px">l3</div></div><div class="row" style="top:300.6px"><div class="cb" style="background:#0000c8;height:14.3px"><i style="border:none;background:#fff;left:4px;top:4px;width:7px;height:7px"></i></div><div class="dk" style="height:14.3px"></div><div class="nm" style="background:#fabf5c;height:14.3px">bot</div></div><div class="row" style="top:315.9px"><div class="cb" style="background:#fff;height:14.3px"><i></i></div><div class="dk" style="height:14.3px"></div><div class="nm" style="background:#17a086;height:14.3px">smb</div></div><div class="row" style="top:331.1px"><div class="cb" style="background:#fff;height:14.3px"><i></i></div><div class="dk" style="height:14.3px"></div><div class="nm" style="background:#ffffff;height:14.3px">ssb</div></div><div class="row" style="top:346.4px"><div class="cb" style="background:#fff;height:14.3px"><i></i></div><div class="dk" style="height:14.3px"></div><div class="nm" style="background:#9fb0bd;height:14.3px">dir</div></div><div class="row" style="top:367.4px"><div class="cb" style="background:#fff;height:14.3px"><i></i></div><div class="dk" style="height:14.3px"></div><div class="nm" style="background:#9ad8d6;height:14.3px">2dir--</div></div><div class="row" style="top:382.7px"><div class="cb" style="background:#fff;height:14.3px"><i></i></div><div class="dk" style="height:14.3px"></div><div class="nm" style="background:#9ad8d6;height:14.3px">target</div></div><div class="row" style="top:397.9px"><div class="cb" style="background:#fff;height:14.3px"><i></i></div><div class="dk" style="height:14.3px"></div><div class="nm" style="background:#9ad8d6;height:14.3px">dirgerber</div></div><div class="row" style="top:413.2px"><div class="cb" style="background:#fff;height:14.3px"><i></i></div><div class="dk" style="height:14.3px"></div><div class="nm" style="background:#9ad8d6;height:14.3px">map</div></div><div class="row" style="top:428.5px"><div class="cb" style="background:#fff;height:14.3px"><i></i></div><div class="dk" style="height:14.3px"></div><div class="nm" style="background:#9ad8d6;height:14.3px">plug</div></div><div class="row" style="top:443.8px"><div class="cb" style="background:#fff;height:14.3px"><i></i></div><div class="dk" style="height:14.3px"></div><div class="nm" style="background:#9ad8d6;height:14.3px">tm-t</div></div><div class="row" style="top:459.0px"><div class="cb" style="background:#fff;height:14.3px"><i></i></div><div class="dk" style="height:14.3px"></div><div class="nm" style="background:#9ad8d6;height:14.3px">tm-b</div></div><div class="row" style="top:474.3px"><div class="cb" style="background:#fff;height:14.3px"><i></i></div><div class="dk" style="height:14.3px"></div><div class="nm" style="background:#9ad8d6;height:14.3px">mt</div></div><div class="row" style="top:489.6px"><div class="cb" style="background:#fff;height:14.3px"><i></i></div><div class="dk" style="height:14.3px"></div><div class="nm" style="background:#9ad8d6;height:14.3px">out</div></div><div class="row" style="top:504.8px"><div class="cb" style="background:#fff;height:14.3px"><i></i></div><div class="dk" style="height:14.3px"></div><div class="nm" style="background:#9ad8d6;height:14.3px">pth</div></div><div class="row" style="top:520.1px"><div class="cb" style="background:#fff;height:14.3px"><i></i></div><div class="dk" style="height:14.3px"></div><div class="nm" style="background:#9ad8d6;height:14.3px">npt</div></div><div class="row" style="top:535.4px"><div class="cb" style="background:#fff;height:14.3px"><i></i></div><div class="dk" style="height:14.3px"></div><div class="nm" style="background:#9ad8d6;height:14.3px">via</div></div><svg width="1024" height="680"><circle cx="23.2" cy="308" r="7.2" fill="#f00000"/><ellipse cx="23.4" cy="307.8" rx="4.4" ry="3.4" fill="#fff"/><circle cx="23.2" cy="323.5" r="7" fill="#10c010"/><ellipse cx="127.3" cy="307.8" rx="7.3" ry="6.6" fill="#fce9c0"/><text x="125" y="311.3" font-size="9" fill="#333" font-family="Liberation Sans">1</text><rect x="142.2" y="304.6" width="6.6" height="6.8" rx="1" fill="#2e2a10"/><rect x="143.3" y="305.7" width="1.9" height="1.9" fill="#e8d8a0"/><rect x="145.8" y="305.7" width="1.9" height="1.9" fill="#e8d8a0"/><rect x="143.3" y="308.3" width="1.9" height="1.9" fill="#e8d8a0"/><rect x="145.8" y="308.3" width="1.9" height="1.9" fill="#e8d8a0"/></svg><div class="a" style="left:0;top:602px;width:153px;height:1px;background:#6c7f8c"></div><div class="a" style="left:6.5px;top:610px;font-size:14px;color:#d3e1e8;letter-spacing:-0.1px">X: 3.155307</div><div class="a" style="left:6.5px;top:629px;font-size:14px;color:#d3e1e8;letter-spacing:-0.1px">Y: 12.553794</div><svg width="1024" height="680"><rect x="7" y="655" width="1" height="19" fill="#7a8996"/><rect x="69" y="655" width="1" height="19" fill="#7a8996"/><rect x="335" y="655" width="1" height="19" fill="#7a8996"/><path d="M82.6 659.5V671.4H95.5" fill="none" stroke="#dfe5ea" stroke-width="1.3"/><path d="M84.5 661.3L94 670.3" stroke="#dfe5ea" stroke-width="1.3"/><path d="M84 664.5V660.8H87.7M94.5 667V670.8H90.8" fill="none" stroke="#dfe5ea" stroke-width="1.3"/><path d="M309.2 664.5A5.9 5.9 0 0 1 320.2 663.8M320.1 666.7A5.9 5.9 0 0 1 309.1 667.3" fill="none" stroke="#dfe5ea" stroke-width="1.3"/><circle cx="320.4" cy="665.3" r="1.1" fill="#dfe5ea"/><circle cx="308.8" cy="665.6" r="1.1" fill="#dfe5ea"/><path d="M311.9 665.3L314 667.4L317.3 663.9" fill="none" stroke="#dfe5ea" stroke-width="1.3"/></svg><div class="a" style="left:16px;top:654px;width:45px;height:23px;background:#f3f5f7"></div><div class="a" style="left:18.5px;top:658.5px;font-size:12.6px;color:#333">Inch</div><div class="a" style="left:45px;top:654px;width:1px;height:23px;background:#e0e3e6"></div><svg width="1024" height="680"><path d="M49 663L53 667L57 663" fill="none" stroke="#999" stroke-width="1.1"/></svg><div class="a" style="left:106px;top:654px;width:193px;height:23px;background:#f3f5f7"></div><div class="a" style="left:344px;top:658px;font-size:14px;color:#e3a634;letter-spacing:-0.19px">bot,#32,Pad,X=18.7362,Y=21.9685,r137.795,POS</div><div class="a" style="left:175px;top:61px;width:261px;height:311px;background:#e8edf0;box-shadow:0 0 3px rgba(0,0,0,.5)"></div><div class="a" style="left:175px;top:61px;width:261px;height:29px;background:#fcfdfd"></div><div class="a" style="left:183px;top:68.5px;font-size:12.7px;color:#3a3a3a">Graphic Options</div><div class="a" style="left:416px;top:68px;width:18px;height:18px;background:#d45252"></div><div class="a" style="left:422px;top:70.5px;font-size:11px;font-weight:bold;color:#fff">x</div><div class="a" style="left:185px;top:100.5px;font-size:12.8px;color:#363a3e">Width (Ctrl+W)</div><div class="a" style="left:184px;top:118px;width:243px;height:34px;border:1px solid #d4d9dc;background:#e3e7ea"></div><div class="a" style="left:189px;top:127.5px;width:14px;height:14px;border-radius:50%;background:#fff;border:1px solid #c9ced2"></div><div class="a" style="left:193.5px;top:132.0px;width:5px;height:5px;border-radius:50%;background:#333"></div><div class="a" style="left:209px;top:128.5px;font-size:12.6px;color:#363a3e">Fill</div><div class="a" style="left:267px;top:127.5px;width:14px;height:14px;border-radius:50%;background:#fff;border:1px solid #c9ced2"></div><div class="a" style="left:287px;top:128.5px;font-size:12.6px;color:#363a3e">Outline</div><div class="a" style="left:345.5px;top:127.5px;width:14px;height:14px;border-radius:50%;background:#fff;border:1px solid #c9ced2"></div><div class="a" style="left:366px;top:128.5px;font-size:12.6px;color:#363a3e">Skeleton</div><div class="a" style="left:184px;top:162px;width:12px;height:12px;background:#fff;border:1px solid #ccd1d4"></div><svg width="1024" height="680"><path d="M186.5 167.5L189.5 171.5L193.5 163" fill="none" stroke="#222" stroke-width="1.8"/></svg><div class="a" style="left:201px;top:160.5px;font-size:12.7px;color:#363a3e">Negative Data</div><div class="a" style="left:184px;top:188px;width:12px;height:12px;background:#fff;border:1px solid #ccd1d4"></div><svg width="1024" height="680"><path d="M186.5 193.5L189.5 197.5L193.5 189" fill="none" stroke="#222" stroke-width="1.8"/></svg><div class="a" style="left:201px;top:186.5px;font-size:12.7px;color:#363a3e">Multi Layers</div><div class="a" style="left:184px;top:214px;width:12px;height:12px;background:#fff;border:1px solid #ccd1d4"></div><svg width="1024" height="680"><path d="M186.5 219.5L189.5 223.5L193.5 215" fill="none" stroke="#222" stroke-width="1.8"/></svg><div class="a" style="left:201px;top:212.5px;font-size:12.7px;color:#363a3e">Step &amp; Repeat</div><div class="a" style="left:184px;top:240px;width:12px;height:12px;background:#fff;border:1px solid #ccd1d4"></div><svg width="1024" height="680"><path d="M186.5 245.5L189.5 249.5L193.5 241" fill="none" stroke="#222" stroke-width="1.8"/></svg><div class="a" style="left:201px;top:238.5px;font-size:12.7px;color:#363a3e">Display Text Value</div><div class="a" style="left:184px;top:266px;width:12px;height:12px;background:#fff;border:1px solid #ccd1d4"></div><svg width="1024" height="680"><path d="M186.5 271.5L189.5 275.5L193.5 267" fill="none" stroke="#222" stroke-width="1.8"/></svg><div class="a" style="left:201px;top:264.5px;font-size:12.7px;color:#363a3e">Profile</div><div class="a" style="left:184px;top:292px;width:12px;height:12px;background:#fff;border:1px solid #ccd1d4"></div><svg width="1024" height="680"><path d="M186.5 297.5L189.5 301.5L193.5 293" fill="none" stroke="#222" stroke-width="1.8"/></svg><div class="a" style="left:201px;top:290.5px;font-size:12.7px;color:#363a3e">Datum &amp; Origin</div><div class="a" style="left:184px;top:318px;width:12px;height:12px;background:#fff;border:1px solid #ccd1d4"></div><div class="a" style="left:201px;top:316.5px;font-size:12.7px;color:#363a3e">Fullscreen Cursor</div><div class="a" style="left:339px;top:157px;width:88px;height:179px;border:1px solid #d4d9dc;background:#e3e7ea"></div><div class="a" style="left:347px;top:165px;width:34px;height:34px;background:#d3d8db;border:1px solid #b7bdc1"></div><div class="a" style="left:385px;top:165px;width:34px;height:34px;background:#d3d8db;border:1px solid #b7bdc1"></div><div class="a" style="left:347px;top:203px;width:34px;height:34px;background:#d3d8db;border:1px solid #b7bdc1"></div><div class="a" style="left:385px;top:203px;width:34px;height:34px;background:#d3d8db;border:1px solid #b7bdc1"></div><div class="a" style="left:347px;top:241px;width:72px;height:30px;background:#d3d8db;border:1px solid #b7bdc1"></div><svg width="1024" height="680"><path d="M356.3 181A7.6 7.6 0 0 1 370.8 178" fill="none" stroke="#222" stroke-width="1.6"/><path d="M366.8 177.6L371.2 179L372.6 174.4" fill="none" stroke="#222" stroke-width="1.6" stroke-linejoin="round"/><path d="M356.4 183A7.6 7.6 0 0 0 371.4 183" fill="none" stroke="#333" stroke-width="1.4" stroke-dasharray="1.3 1.3"/><path d="M409.7 181A7.6 7.6 0 0 0 395.2 178" fill="none" stroke="#222" stroke-width="1.6"/><path d="M399.2 177.6L394.8 179L393.4 174.4" fill="none" stroke="#222" stroke-width="1.6" stroke-linejoin="round"/><path d="M409.6 183A7.6 7.6 0 0 1 394.6 183" fill="none" stroke="#333" stroke-width="1.4" stroke-dasharray="1.3 1.3"/><path d="M363.8 208V230.5" stroke="#222" stroke-width="1.6"/><path d="M362 211L353.5 226.5H362Z" fill="none" stroke="#222" stroke-width="1.6" stroke-linejoin="round"/><path d="M365.8 212L374.5 226.5H365.8" fill="none" stroke="#444" stroke-width="1.3" stroke-dasharray="1.3 1.3"/><path d="M390 219.9H412.6" stroke="#222" stroke-width="1.6"/><path d="M394 222L408.6 230.4V222Z" fill="none" stroke="#222" stroke-width="1.6" stroke-linejoin="round"/><path d="M394 217.8L408.6 209.5V217.8" fill="none" stroke="#444" stroke-width="1.3" stroke-dasharray="1.3 1.3"/></svg><div class="a" style="left:366.5px;top:248.5px;font-size:13.6px;color:#363a3e">Reset</div><div class="a" style="left:347px;top:284px;font-size:13.3px;color:#363a3e">Angle:0</div><div class="a" style="left:347px;top:304px;font-size:13.3px;color:#363a3e">Mirror:No</div><div class="a" style="left:183px;top:339px;width:245px;height:26px;background:#d3d8db;border:1px solid #b7bdc1"></div><div class="a" style="left:291px;top:345.5px;font-size:12.2px;color:#363a3e">Close</div><div class="a" style="left:87px;top:376px;width:318px;height:270px;background:#fff;box-shadow:0 0 4px rgba(0,0,0,.35)"></div><div class="a" style="left:386px;top:383px;width:18px;height:18px;background:#eceeef"></div><div class="a" style="left:88px;top:405px;width:316px;height:24px;background:#323f4d"></div><svg width="1024" height="680"><g transform="translate(86.6,405.5)"><path d="M12.5 8.6H8.5V17.8H24.3V8.6H18.5" fill="none" stroke="#dfe5ea" stroke-width="1.1" stroke-dasharray="1.1 1.1"/><path d="M15.6 4.5L12.6 7.9H14.4V11.2H16.8V7.9H18.6Z" fill="none" stroke="#dfe5ea" stroke-width="1.2" stroke-linejoin="round"/><path d="M39.5 13.6H35.1V4.5H50.9V13.6H46" fill="none" stroke="#dfe5ea" stroke-width="1.1" stroke-dasharray="1.1 1.1"/><path d="M42.6 18.6L39.4 15.2H41.4V10.3H43.8V15.2H45.9Z" fill="none" stroke="#dfe5ea" stroke-width="1.2" stroke-linejoin="round"/><path d="M67.5 9V3.6H77.1V19.4H67.5V13.5" fill="none" stroke="#dfe5ea" stroke-width="1.1" stroke-dasharray="1.1 1.1"/><path d="M62.5 11.2L66.5 8.5V10.1H71V12.3H66.5V13.9Z" fill="none" stroke="#dfe5ea" stroke-width="1.2" stroke-linejoin="round"/><path d="M90.4 9V3.6H99.9V19.4H90.4V13.5" fill="none" stroke="#dfe5ea" stroke-width="1.1" stroke-dasharray="1.1 1.1"/><path d="M104.9 11.2L100.9 8.5V10.1H96.4V12.3H100.9V13.9Z" fill="none" stroke="#dfe5ea" stroke-width="1.2" stroke-linejoin="round"/><circle cx="123.2" cy="11.1" r="5.8" fill="none" stroke="#dfe5ea" stroke-width="1.2" stroke-linejoin="round"/><path d="M127.4 15.3L131.8 19.6M120 11.1H126.4M123.2 7.9V14.3" fill="none" stroke="#dfe5ea" stroke-width="1.2" stroke-linejoin="round"/><circle cx="150.6" cy="11.1" r="5.8" fill="none" stroke="#dfe5ea" stroke-width="1.2" stroke-linejoin="round"/><path d="M154.8 15.3L159.2 19.6M147.4 11.1H153.8" fill="none" stroke="#dfe5ea" stroke-width="1.2" stroke-linejoin="round"/></g></svg><div class="a" style="left:708px;top:222px;width:290px;height:255px;background:#fff;box-shadow:0 0 4px rgba(0,0,0,.35)"></div><div class="a" style="left:979px;top:230px;width:18px;height:18px;background:#eceeef"></div><div class="a" style="left:709px;top:252px;width:289px;height:23px;background:#323f4d"></div><svg width="1024" height="680"><g transform="translate(709,251.8)"><path d="M12.5 8.6H8.5V17.8H24.3V8.6H18.5" fill="none" stroke="#dfe5ea" stroke-width="1.1" stroke-dasharray="1.1 1.1"/><path d="M15.6 4.5L12.6 7.9H14.4V11.2H16.8V7.9H18.6Z" fill="none" stroke="#dfe5ea" stroke-width="1.2" stroke-linejoin="round"/><path d="M39.5 13.6H35.1V4.5H50.9V13.6H46" fill="none" stroke="#dfe5ea" stroke-width="1.1" stroke-dasharray="1.1 1.1"/><path d="M42.6 18.6L39.4 15.2H41.4V10.3H43.8V15.2H45.9Z" fill="none" stroke="#dfe5ea" stroke-width="1.2" stroke-linejoin="round"/><path d="M67.5 9V3.6H77.1V19.4H67.5V13.5" fill="none" stroke="#dfe5ea" stroke-width="1.1" stroke-dasharray="1.1 1.1"/><path d="M62.5 11.2L66.5 8.5V10.1H71V12.3H66.5V13.9Z" fill="none" stroke="#dfe5ea" stroke-width="1.2" stroke-linejoin="round"/><path d="M90.4 9V3.6H99.9V19.4H90.4V13.5" fill="none" stroke="#dfe5ea" stroke-width="1.1" stroke-dasharray="1.1 1.1"/><path d="M104.9 11.2L100.9 8.5V10.1H96.4V12.3H100.9V13.9Z" fill="none" stroke="#dfe5ea" stroke-width="1.2" stroke-linejoin="round"/><circle cx="123.2" cy="11.1" r="5.8" fill="none" stroke="#dfe5ea" stroke-width="1.2" stroke-linejoin="round"/><path d="M127.4 15.3L131.8 19.6M120 11.1H126.4M123.2 7.9V14.3" fill="none" stroke="#dfe5ea" stroke-width="1.2" stroke-linejoin="round"/><circle cx="150.6" cy="11.1" r="5.8" fill="none" stroke="#dfe5ea" stroke-width="1.2" stroke-linejoin="round"/><path d="M154.8 15.3L159.2 19.6M147.4 11.1H153.8" fill="none" stroke="#dfe5ea" stroke-width="1.2" stroke-linejoin="round"/></g></svg><svg width="1024" height="680"><g><rect x="709.5" y="275" width="288" height="88" fill="#ffb400"/><rect x="709.5" y="325.5" width="288" height="1.2" fill="#ffe9c0"/><rect x="709.5" y="363" width="288" height="114" fill="#ff0000"/><rect x="719" y="373" width="229" height="57" fill="#7c5a12"/><circle cx="757" cy="402.5" r="22.5" fill="#ffb400"/><circle cx="833" cy="402.5" r="22.5" fill="#fff"/><circle cx="909" cy="402.5" r="22.5" fill="#ffb400"/><rect x="885" y="453" width="64" height="24" fill="#7c5a12"/><rect x="915" y="458" width="2.2" height="19" fill="#ffb400"/><rect x="709" y="275" width="289" height="202" fill="none" stroke="#f4f4f4" stroke-width="1.5"/></g></svg><svg width="1024" height="680" style="clip-path:inset(430px 620px 36px 88px)"><rect x="87.5" y="429.5" width="316" height="215" fill="#ff0000"/><path d="M238 429L262 452" fill="none" stroke="#000" stroke-width="2.4"/><path d="M244 429L268 452" fill="none" stroke="#000" stroke-width="2.4"/><path d="M250 429L274 452" fill="none" stroke="#000" stroke-width="2.4"/><rect x="274.7" y="429" width="2.6" height="22" fill="#000"/><rect x="282.4" y="429" width="2.6" height="22" fill="#000"/><rect x="290.1" y="429" width="2.6" height="22" fill="#000"/><rect x="297.8" y="429" width="2.6" height="22" fill="#000"/><rect x="305.5" y="429" width="2.6" height="22" fill="#000"/><rect x="313.2" y="429" width="2.6" height="22" fill="#000"/><rect x="320.9" y="429" width="2.6" height="22" fill="#000"/><rect x="328.6" y="429" width="2.6" height="22" fill="#000"/><rect x="336.3" y="429" width="2.6" height="22" fill="#000"/><path d="M345.3 451V444Q345.3 436 350.3 431" fill="none" stroke="#000" stroke-width="2.6"/><path d="M353.0 451V442Q353.0 436 358.0 431" fill="none" stroke="#000" stroke-width="2.6"/><path d="M360.7 451V440Q360.7 436 365.7 431" fill="none" stroke="#000" stroke-width="2.6"/><path d="M368.4 451V444Q368.4 436 373.4 431" fill="none" stroke="#000" stroke-width="2.6"/><path d="M376.1 451V442Q376.1 436 381.1 431" fill="none" stroke="#000" stroke-width="2.6"/><path d="M383.8 451V440Q383.8 436 388.8 431" fill="none" stroke="#000" stroke-width="2.6"/><path d="M391.5 451V444Q391.5 436 396.5 431" fill="none" stroke="#000" stroke-width="2.6"/><path d="M399.2 451V442Q399.2 436 404.2 431" fill="none" stroke="#000" stroke-width="2.6"/><path d="M310 451L313 443H316L319 451Z" fill="#000"/><circle cx="372" cy="439" r="5" fill="#000"/><circle cx="372" cy="439" r="3.3" fill="#ff0000"/><circle cx="386" cy="435" r="5" fill="#000"/><circle cx="386" cy="435" r="3.3" fill="#ff0000"/><circle cx="397" cy="441" r="5" fill="#000"/><circle cx="397" cy="441" r="3.3" fill="#ff0000"/><path d="M109.8 516V498L130.5 478.5H340" fill="none" stroke="#000" stroke-width="13" stroke-linejoin="round" stroke-linecap="butt"/><path d="M109.8 516V498L130.5 478.5H340" fill="none" stroke="#ff0000" stroke-width="8" stroke-linejoin="round" stroke-linecap="butt"/><path d="M234.5 647V616L203.5 592V500L212 489H260" fill="none" stroke="#000" stroke-width="8" stroke-linejoin="round" stroke-linecap="butt"/><path d="M234.5 647V616L203.5 592V500L212 489H260" fill="none" stroke="#ff0000" stroke-width="3.2" stroke-linejoin="round" stroke-linecap="butt"/><path d="M219 646V630A6 6 0 0 0 207 630V646" fill="none" stroke="#000" stroke-width="6" stroke-linejoin="round" stroke-linecap="butt"/><path d="M219 646V630A6 6 0 0 0 207 630V646" fill="none" stroke="#ff0000" stroke-width="2.5" stroke-linejoin="round" stroke-linecap="butt"/><path d="M212 482.5H336L350 470H404V497L390 499L368 495L352 499L340 494H212Z" fill="#000"/><rect x="258" y="474" width="60" height="8.5" fill="#ff0000"/><path d="M318 474H346L337 482.5H318Z" fill="#ff0000"/><path d="M212 485.9H338L356 474.0" fill="none" stroke="#ff0000" stroke-width="2.8"/><path d="M212 490.4H342L360 473.5" fill="none" stroke="#ff0000" stroke-width="2.8"/><path d="M352 499L372 477H404" fill="none" stroke="#ff0000" stroke-width="2.6" transform="translate(0,0.0)"/><path d="M359 499L379 477H404" fill="none" stroke="#ff0000" stroke-width="2.6" transform="translate(0,0.0)"/><path d="M366 499L386 477H404" fill="none" stroke="#ff0000" stroke-width="2.6" transform="translate(0,0.0)"/><path d="M373 499L393 477H404" fill="none" stroke="#ff0000" stroke-width="2.6" transform="translate(0,0.0)"/><path d="M380 499L400 477H404" fill="none" stroke="#ff0000" stroke-width="2.6" transform="translate(0,0.0)"/><path d="M360 486H404M366 491H404" stroke="#ff0000" stroke-width="2.4"/><path d="M258 552H404V606H258L253 600L244 592V562L238 553Z" fill="#000"/><path d="M266.5 552V585L262.2 592V607" fill="none" stroke="#ff0000" stroke-width="3.8"/><path d="M268.2 552V585L269.9 592V607" fill="none" stroke="#ff0000" stroke-width="3.8"/><path d="M281.9 556V575L277.6 592V607" fill="none" stroke="#ff0000" stroke-width="3.8"/><path d="M277.6 560V580L285.3 592V607" fill="none" stroke="#ff0000" stroke-width="3.8"/><path d="M297.3 556V575L293.0 592V607" fill="none" stroke="#ff0000" stroke-width="3.8"/><path d="M302.0 552V585L300.7 592V607" fill="none" stroke="#ff0000" stroke-width="3.8"/><path d="M309.7 560V580L308.4 592V607" fill="none" stroke="#ff0000" stroke-width="3.8"/><path d="M311.4 560V575L316.1 592V607" fill="none" stroke="#ff0000" stroke-width="3.8"/><path d="M319.1 560V585L323.8 592V607" fill="none" stroke="#ff0000" stroke-width="3.8"/><path d="M323.8 556V585L331.5 592V607" fill="none" stroke="#ff0000" stroke-width="3.8"/><path d="M334.5 552V585L339.2 592V607" fill="none" stroke="#ff0000" stroke-width="3.8"/><path d="M345.2 552V575L346.9 592V607" fill="none" stroke="#ff0000" stroke-width="3.8"/><path d="M355.9 556V585L354.6 592V607" fill="none" stroke="#ff0000" stroke-width="3.8"/><path d="M363.6 560V585L362.3 592V607" fill="none" stroke="#ff0000" stroke-width="3.8"/><path d="M371.3 556V585L370.0 592V607" fill="none" stroke="#ff0000" stroke-width="3.8"/><path d="M379.0 560V575L377.7 592V607" fill="none" stroke="#ff0000" stroke-width="3.8"/><path d="M377.7 556V575L385.4 592V607" fill="none" stroke="#ff0000" stroke-width="3.8"/><path d="M394.4 552V575L393.1 592V607" fill="none" stroke="#ff0000" stroke-width="3.8"/><path d="M402.1 556V585L400.8 592V607" fill="none" stroke="#ff0000" stroke-width="3.8"/><rect x="300" y="556" width="10" height="22" rx="3" fill="#ff0000"/><rect x="352" y="556" width="12" height="14" rx="3" fill="#ff0000"/><rect x="372" y="570" width="8" height="20" rx="3" fill="#ff0000"/><rect x="270" y="553" width="8" height="10" rx="3" fill="#ff0000"/><path d="M229 552V592L241 604H262" fill="none" stroke="#000" stroke-width="6.5" stroke-linejoin="round" stroke-linecap="butt"/><path d="M229 552V592L241 604H262" fill="none" stroke="#ff0000" stroke-width="2.8" stroke-linejoin="round" stroke-linecap="butt"/><path d="M236 552V588L245 598H262" fill="none" stroke="#000" stroke-width="6.5" stroke-linejoin="round" stroke-linecap="butt"/><path d="M236 552V588L245 598H262" fill="none" stroke="#ff0000" stroke-width="2.8" stroke-linejoin="round" stroke-linecap="butt"/><rect x="241.5" y="565" width="29" height="27" fill="#000"/><rect x="256.0" y="449.0" width="149.5" height="23.30000000000001" fill="#000"/><rect x="257.5" y="450.5" width="146.5" height="20.30000000000001" fill="#00b000"/><rect x="258.1" y="451.5" width="4" height="18.30000000000001" fill="#f7b500"/><rect x="265.8" y="451.5" width="4" height="18.30000000000001" fill="#f7b500"/><rect x="273.5" y="451.5" width="4" height="18.30000000000001" fill="#f7b500"/><rect x="281.2" y="451.5" width="4" height="18.30000000000001" fill="#f7b500"/><rect x="288.9" y="451.5" width="4" height="18.30000000000001" fill="#f7b500"/><rect x="296.6" y="451.5" width="4" height="18.30000000000001" fill="#f7b500"/><rect x="304.3" y="451.5" width="4" height="18.30000000000001" fill="#f7b500"/><rect x="312.0" y="451.5" width="4" height="18.30000000000001" fill="#f7b500"/><rect x="319.7" y="451.5" width="4" height="18.30000000000001" fill="#f7b500"/><rect x="327.4" y="451.5" width="4" height="18.30000000000001" fill="#f7b500"/><rect x="335.1" y="451.5" width="4" height="18.30000000000001" fill="#f7b500"/><rect x="342.8" y="451.5" width="4" height="18.30000000000001" fill="#f7b500"/><rect x="350.5" y="451.5" width="4" height="18.30000000000001" fill="#f7b500"/><rect x="358.2" y="451.5" width="4" height="18.30000000000001" fill="#f7b500"/><rect x="365.9" y="451.5" width="4" height="18.30000000000001" fill="#f7b500"/><rect x="373.6" y="451.5" width="4" height="18.30000000000001" fill="#f7b500"/><rect x="381.3" y="451.5" width="4" height="18.30000000000001" fill="#f7b500"/><rect x="389.0" y="451.5" width="4" height="18.30000000000001" fill="#f7b500"/><rect x="396.7" y="451.5" width="4" height="18.30000000000001" fill="#f7b500"/><rect x="256.5" y="604.5" width="149" height="25.5" fill="#000"/><rect x="258" y="606" width="146" height="22.5" fill="#00b000"/><rect x="258.6" y="607" width="4" height="20.5" fill="#f7b500"/><rect x="266.3" y="607" width="4" height="20.5" fill="#f7b500"/><rect x="274.0" y="607" width="4" height="20.5" fill="#f7b500"/><rect x="281.7" y="607" width="4" height="20.5" fill="#f7b500"/><rect x="289.4" y="607" width="4" height="20.5" fill="#f7b500"/><rect x="297.1" y="607" width="4" height="20.5" fill="#f7b500"/><rect x="304.8" y="607" width="4" height="20.5" fill="#f7b500"/><rect x="312.5" y="607" width="4" height="20.5" fill="#f7b500"/><rect x="320.2" y="607" width="4" height="20.5" fill="#f7b500"/><rect x="327.9" y="607" width="4" height="20.5" fill="#f7b500"/><rect x="335.6" y="607" width="4" height="20.5" fill="#f7b500"/><rect x="343.3" y="607" width="4" height="20.5" fill="#f7b500"/><rect x="351.0" y="607" width="4" height="20.5" fill="#f7b500"/><rect x="358.7" y="607" width="4" height="20.5" fill="#f7b500"/><rect x="366.4" y="607" width="4" height="20.5" fill="#f7b500"/><rect x="374.1" y="607" width="4" height="20.5" fill="#f7b500"/><rect x="381.8" y="607" width="4" height="20.5" fill="#f7b500"/><rect x="389.5" y="607" width="4" height="20.5" fill="#f7b500"/><rect x="397.2" y="607" width="4" height="20.5" fill="#f7b500"/><rect x="88" y="512" width="97" height="44" fill="#000"/><rect x="89" y="514" width="7" height="15" fill="#00b000"/><rect x="90.3" y="515.3" width="4.4" height="12.4" fill="#f7b500"/><rect x="89" y="537.5" width="7" height="15.899999999999977" fill="#00b000"/><rect x="90.3" y="538.8" width="4.4" height="13.299999999999978" fill="#f7b500"/><rect x="103" y="514" width="13.700000000000003" height="15" fill="#00b000"/><rect x="104.3" y="515.3" width="11.100000000000003" height="12.4" fill="#f7b500"/><rect x="103" y="537.5" width="13.700000000000003" height="15.899999999999977" fill="#00b000"/><rect x="104.3" y="538.8" width="11.100000000000003" height="13.299999999999978" fill="#f7b500"/><rect x="124.2" y="514" width="13.700000000000003" height="15" fill="#00b000"/><rect x="125.5" y="515.3" width="11.100000000000003" height="12.4" fill="#f7b500"/><rect x="124.2" y="537.5" width="13.700000000000003" height="15.899999999999977" fill="#00b000"/><rect x="125.5" y="538.8" width="11.100000000000003" height="13.299999999999978" fill="#f7b500"/><rect x="145.4" y="514" width="14.400000000000006" height="15" fill="#00b000"/><rect x="146.70000000000002" y="515.3" width="11.800000000000006" height="12.4" fill="#f7b500"/><rect x="145.4" y="537.5" width="14.400000000000006" height="15.899999999999977" fill="#00b000"/><rect x="146.70000000000002" y="538.8" width="11.800000000000006" height="13.299999999999978" fill="#f7b500"/><rect x="168.7" y="514" width="14.300000000000011" height="15" fill="#00b000"/><rect x="170.0" y="515.3" width="11.700000000000012" height="12.4" fill="#f7b500"/><rect x="168.7" y="537.5" width="14.300000000000011" height="15.899999999999977" fill="#00b000"/><rect x="170.0" y="538.8" width="11.700000000000012" height="13.299999999999978" fill="#f7b500"/><rect x="96" y="518" width="7" height="7.5" fill="#ff0000"/><rect x="96" y="541.5" width="7" height="7.5" fill="#ff0000"/><rect x="116.7" y="518" width="7.5" height="7.5" fill="#ff0000"/><rect x="116.7" y="541.5" width="7.5" height="7.5" fill="#ff0000"/><rect x="137.9" y="518" width="7.5" height="7.5" fill="#ff0000"/><rect x="137.9" y="541.5" width="7.5" height="7.5" fill="#ff0000"/><rect x="159.8" y="518" width="8.899999999999977" height="7.5" fill="#ff0000"/><rect x="159.8" y="541.5" width="8.899999999999977" height="7.5" fill="#ff0000"/><rect x="89" y="553" width="7" height="8" fill="#f7b500"/><path d="M175.8 514V505" stroke="#000" stroke-width="9"/><path d="M175.8 514V505" stroke="#ff0000" stroke-width="4"/><circle cx="175.8" cy="505" r="6.6" fill="#000"/><circle cx="175.8" cy="505" r="4.3" fill="#ff0000"/><path d="M229.0 512.5V524" stroke="#000" stroke-width="6.5"/><circle cx="229.0" cy="512.5" r="6.2" fill="#000"/><path d="M239.5 502.5V524" stroke="#000" stroke-width="6.5"/><circle cx="239.5" cy="502.5" r="6.2" fill="#000"/><path d="M249.5 512.5V524" stroke="#000" stroke-width="6.5"/><circle cx="249.5" cy="512.5" r="6.2" fill="#000"/><path d="M260.0 502.5V524" stroke="#000" stroke-width="6.5"/><circle cx="260.0" cy="502.5" r="6.2" fill="#000"/><rect x="229" y="517" width="32" height="7" fill="#000"/><path d="M229.0 512.5V524" stroke="#ff0000" stroke-width="2.4"/><circle cx="229.0" cy="512.5" r="4.1" fill="#ff0000"/><path d="M239.5 502.5V524" stroke="#ff0000" stroke-width="2.4"/><circle cx="239.5" cy="502.5" r="4.1" fill="#ff0000"/><path d="M249.5 512.5V524" stroke="#ff0000" stroke-width="2.4"/><circle cx="249.5" cy="512.5" r="4.1" fill="#ff0000"/><path d="M260.0 502.5V524" stroke="#ff0000" stroke-width="2.4"/><circle cx="260.0" cy="502.5" r="4.1" fill="#ff0000"/><rect x="230" y="522.5" width="30" height="9.0" fill="#00b000"/><rect x="232.5" y="523.0" width="4" height="8.0" fill="#f7b500"/><rect x="239.4" y="523.0" width="4" height="8.0" fill="#f7b500"/><rect x="246.4" y="523.0" width="4" height="8.0" fill="#f7b500"/><rect x="253.3" y="523.0" width="4" height="8.0" fill="#f7b500"/><rect x="230" y="542" width="30" height="9.5" fill="#00b000"/><rect x="232.5" y="542.5" width="4" height="8.5" fill="#f7b500"/><rect x="239.4" y="542.5" width="4" height="8.5" fill="#f7b500"/><rect x="246.4" y="542.5" width="4" height="8.5" fill="#f7b500"/><rect x="253.3" y="542.5" width="4" height="8.5" fill="#f7b500"/><rect x="225" y="533" width="40" height="8" fill="#00b000"/><rect x="226" y="534.3" width="38" height="5.4" fill="#f7b500"/><ellipse cx="245.0" cy="537" rx="14.0" ry="3.8" fill="#000"/><ellipse cx="245.0" cy="537" rx="12.0" ry="2.5" fill="#ff0000"/><path d="M284.1 512.5V524" stroke="#000" stroke-width="6.5"/><circle cx="284.1" cy="512.5" r="6.2" fill="#000"/><path d="M294.6 502.5V524" stroke="#000" stroke-width="6.5"/><circle cx="294.6" cy="502.5" r="6.2" fill="#000"/><path d="M304.6 512.5V524" stroke="#000" stroke-width="6.5"/><circle cx="304.6" cy="512.5" r="6.2" fill="#000"/><path d="M315.1 502.5V524" stroke="#000" stroke-width="6.5"/><circle cx="315.1" cy="502.5" r="6.2" fill="#000"/><rect x="285.5" y="517" width="29.19999999999999" height="7" fill="#000"/><path d="M284.1 512.5V524" stroke="#ff0000" stroke-width="2.4"/><circle cx="284.1" cy="512.5" r="4.1" fill="#ff0000"/><path d="M294.6 502.5V524" stroke="#ff0000" stroke-width="2.4"/><circle cx="294.6" cy="502.5" r="4.1" fill="#ff0000"/><path d="M304.6 512.5V524" stroke="#ff0000" stroke-width="2.4"/><circle cx="304.6" cy="512.5" r="4.1" fill="#ff0000"/><path d="M315.1 502.5V524" stroke="#ff0000" stroke-width="2.4"/><circle cx="315.1" cy="502.5" r="4.1" fill="#ff0000"/><rect x="286.5" y="522.5" width="27.19999999999999" height="9.0" fill="#00b000"/><rect x="289.0" y="523.0" width="4" height="8.0" fill="#f7b500"/><rect x="295.2" y="523.0" width="4" height="8.0" fill="#f7b500"/><rect x="301.3" y="523.0" width="4" height="8.0" fill="#f7b500"/><rect x="307.5" y="523.0" width="4" height="8.0" fill="#f7b500"/><rect x="286.5" y="542" width="27.19999999999999" height="9.5" fill="#00b000"/><rect x="289.0" y="542.5" width="4" height="8.5" fill="#f7b500"/><rect x="295.2" y="542.5" width="4" height="8.5" fill="#f7b500"/><rect x="301.3" y="542.5" width="4" height="8.5" fill="#f7b500"/><rect x="307.5" y="542.5" width="4" height="8.5" fill="#f7b500"/><rect x="281.5" y="533" width="37.19999999999999" height="8" fill="#00b000"/><rect x="282.5" y="534.3" width="35.19999999999999" height="5.4" fill="#f7b500"/><ellipse cx="300.1" cy="537" rx="12.599999999999994" ry="3.8" fill="#000"/><ellipse cx="300.1" cy="537" rx="10.599999999999994" ry="2.5" fill="#ff0000"/><path d="M332.4 512.5V524" stroke="#000" stroke-width="6.5"/><circle cx="332.4" cy="512.5" r="6.2" fill="#000"/><path d="M342.9 502.5V524" stroke="#000" stroke-width="6.5"/><circle cx="342.9" cy="502.5" r="6.2" fill="#000"/><path d="M352.9 512.5V524" stroke="#000" stroke-width="6.5"/><circle cx="352.9" cy="512.5" r="6.2" fill="#000"/><path d="M363.4 502.5V524" stroke="#000" stroke-width="6.5"/><circle cx="363.4" cy="502.5" r="6.2" fill="#000"/><rect x="333.8" y="517" width="29.19999999999999" height="7" fill="#000"/><path d="M332.4 512.5V524" stroke="#ff0000" stroke-width="2.4"/><circle cx="332.4" cy="512.5" r="4.1" fill="#ff0000"/><path d="M342.9 502.5V524" stroke="#ff0000" stroke-width="2.4"/><circle cx="342.9" cy="502.5" r="4.1" fill="#ff0000"/><path d="M352.9 512.5V524" stroke="#ff0000" stroke-width="2.4"/><circle cx="352.9" cy="512.5" r="4.1" fill="#ff0000"/><path d="M363.4 502.5V524" stroke="#ff0000" stroke-width="2.4"/><circle cx="363.4" cy="502.5" r="4.1" fill="#ff0000"/><rect x="334.8" y="522.5" width="27.19999999999999" height="9.0" fill="#00b000"/><rect x="337.3" y="523.0" width="4" height="8.0" fill="#f7b500"/><rect x="343.5" y="523.0" width="4" height="8.0" fill="#f7b500"/><rect x="349.6" y="523.0" width="4" height="8.0" fill="#f7b500"/><rect x="355.8" y="523.0" width="4" height="8.0" fill="#f7b500"/><rect x="334.8" y="542" width="27.19999999999999" height="9.5" fill="#00b000"/><rect x="337.3" y="542.5" width="4" height="8.5" fill="#f7b500"/><rect x="343.5" y="542.5" width="4" height="8.5" fill="#f7b500"/><rect x="349.6" y="542.5" width="4" height="8.5" fill="#f7b500"/><rect x="355.8" y="542.5" width="4" height="8.5" fill="#f7b500"/><rect x="329.8" y="533" width="37.19999999999999" height="8" fill="#00b000"/><rect x="330.8" y="534.3" width="35.19999999999999" height="5.4" fill="#f7b500"/><ellipse cx="348.4" cy="537" rx="12.599999999999994" ry="3.8" fill="#000"/><ellipse cx="348.4" cy="537" rx="10.599999999999994" ry="2.5" fill="#ff0000"/><path d="M383.0 512.5V524" stroke="#000" stroke-width="6.5"/><circle cx="383.0" cy="512.5" r="6.2" fill="#000"/><path d="M393.5 502.5V524" stroke="#000" stroke-width="6.5"/><circle cx="393.5" cy="502.5" r="6.2" fill="#000"/><path d="M403.5 512.5V524" stroke="#000" stroke-width="6.5"/><circle cx="403.5" cy="512.5" r="6.2" fill="#000"/><path d="M414.0 502.5V524" stroke="#000" stroke-width="6.5"/><circle cx="414.0" cy="502.5" r="6.2" fill="#000"/><rect x="384" y="517" width="30" height="7" fill="#000"/><path d="M383.0 512.5V524" stroke="#ff0000" stroke-width="2.4"/><circle cx="383.0" cy="512.5" r="4.1" fill="#ff0000"/><path d="M393.5 502.5V524" stroke="#ff0000" stroke-width="2.4"/><circle cx="393.5" cy="502.5" r="4.1" fill="#ff0000"/><path d="M403.5 512.5V524" stroke="#ff0000" stroke-width="2.4"/><circle cx="403.5" cy="512.5" r="4.1" fill="#ff0000"/><path d="M414.0 502.5V524" stroke="#ff0000" stroke-width="2.4"/><circle cx="414.0" cy="502.5" r="4.1" fill="#ff0000"/><rect x="385" y="522.5" width="28" height="9.0" fill="#00b000"/><rect x="387.5" y="523.0" width="4" height="8.0" fill="#f7b500"/><rect x="393.9" y="523.0" width="4" height="8.0" fill="#f7b500"/><rect x="400.3" y="523.0" width="4" height="8.0" fill="#f7b500"/><rect x="406.7" y="523.0" width="4" height="8.0" fill="#f7b500"/><rect x="385" y="542" width="28" height="9.5" fill="#00b000"/><rect x="387.5" y="542.5" width="4" height="8.5" fill="#f7b500"/><rect x="393.9" y="542.5" width="4" height="8.5" fill="#f7b500"/><rect x="400.3" y="542.5" width="4" height="8.5" fill="#f7b500"/><rect x="406.7" y="542.5" width="4" height="8.5" fill="#f7b500"/><rect x="380" y="533" width="38" height="8" fill="#00b000"/><rect x="381" y="534.3" width="36" height="5.4" fill="#f7b500"/><ellipse cx="399.0" cy="537" rx="13.0" ry="3.8" fill="#000"/><ellipse cx="399.0" cy="537" rx="11.0" ry="2.5" fill="#ff0000"/><rect x="243.4" y="567" width="11" height="9.5" fill="#00b000"/><rect x="244.70000000000002" y="568.3" width="8.4" height="6.9" fill="#f7b500"/><rect x="258" y="567" width="11" height="9.5" fill="#00b000"/><rect x="259.3" y="568.3" width="8.4" height="6.9" fill="#f7b500"/><rect x="243.4" y="580.5" width="11" height="9.5" fill="#00b000"/><rect x="244.70000000000002" y="581.8" width="8.4" height="6.9" fill="#f7b500"/><rect x="258" y="580.5" width="11" height="9.5" fill="#00b000"/><rect x="259.3" y="581.8" width="8.4" height="6.9" fill="#f7b500"/><rect x="254" y="569.5" width="4.5" height="5" fill="#ff0000"/><rect x="254" y="583" width="4.5" height="5" fill="#ff0000"/><rect x="344" y="565.5" width="10" height="9.5" fill="#00b000"/><rect x="345.3" y="566.8" width="7.4" height="6.9" fill="#f7b500"/><rect x="344" y="579" width="10" height="9.5" fill="#00b000"/><rect x="345.3" y="580.3" width="7.4" height="6.9" fill="#f7b500"/><circle cx="241" cy="556" r="4" fill="#ff0000"/><circle cx="297" cy="533" r="4.5" fill="#ff0000"/><circle cx="312" cy="552" r="4" fill="#ff0000"/><circle cx="358" cy="577" r="4.5" fill="#ff0000"/><circle cx="356" cy="595" r="4" fill="#ff0000"/><circle cx="271" cy="549" r="3.5" fill="#ff0000"/><circle cx="392" cy="505" r="4.5" fill="#ff0000"/><circle cx="376" cy="497" r="4" fill="#ff0000"/><circle cx="298" cy="554" r="3.5" fill="#ff0000"/><circle cx="322" cy="533" r="4" fill="#ff0000"/><circle cx="372" cy="560" r="4" fill="#ff0000"/></svg><div class="a" style="left:87px;top:429px;width:318px;height:217px;border:1.5px solid #f2f2f2"></div><div class="a" style="left:1021.5px;top:0;width:2.5px;height:680px;background:rgba(70,105,160,0.55)"></div></body></html>
